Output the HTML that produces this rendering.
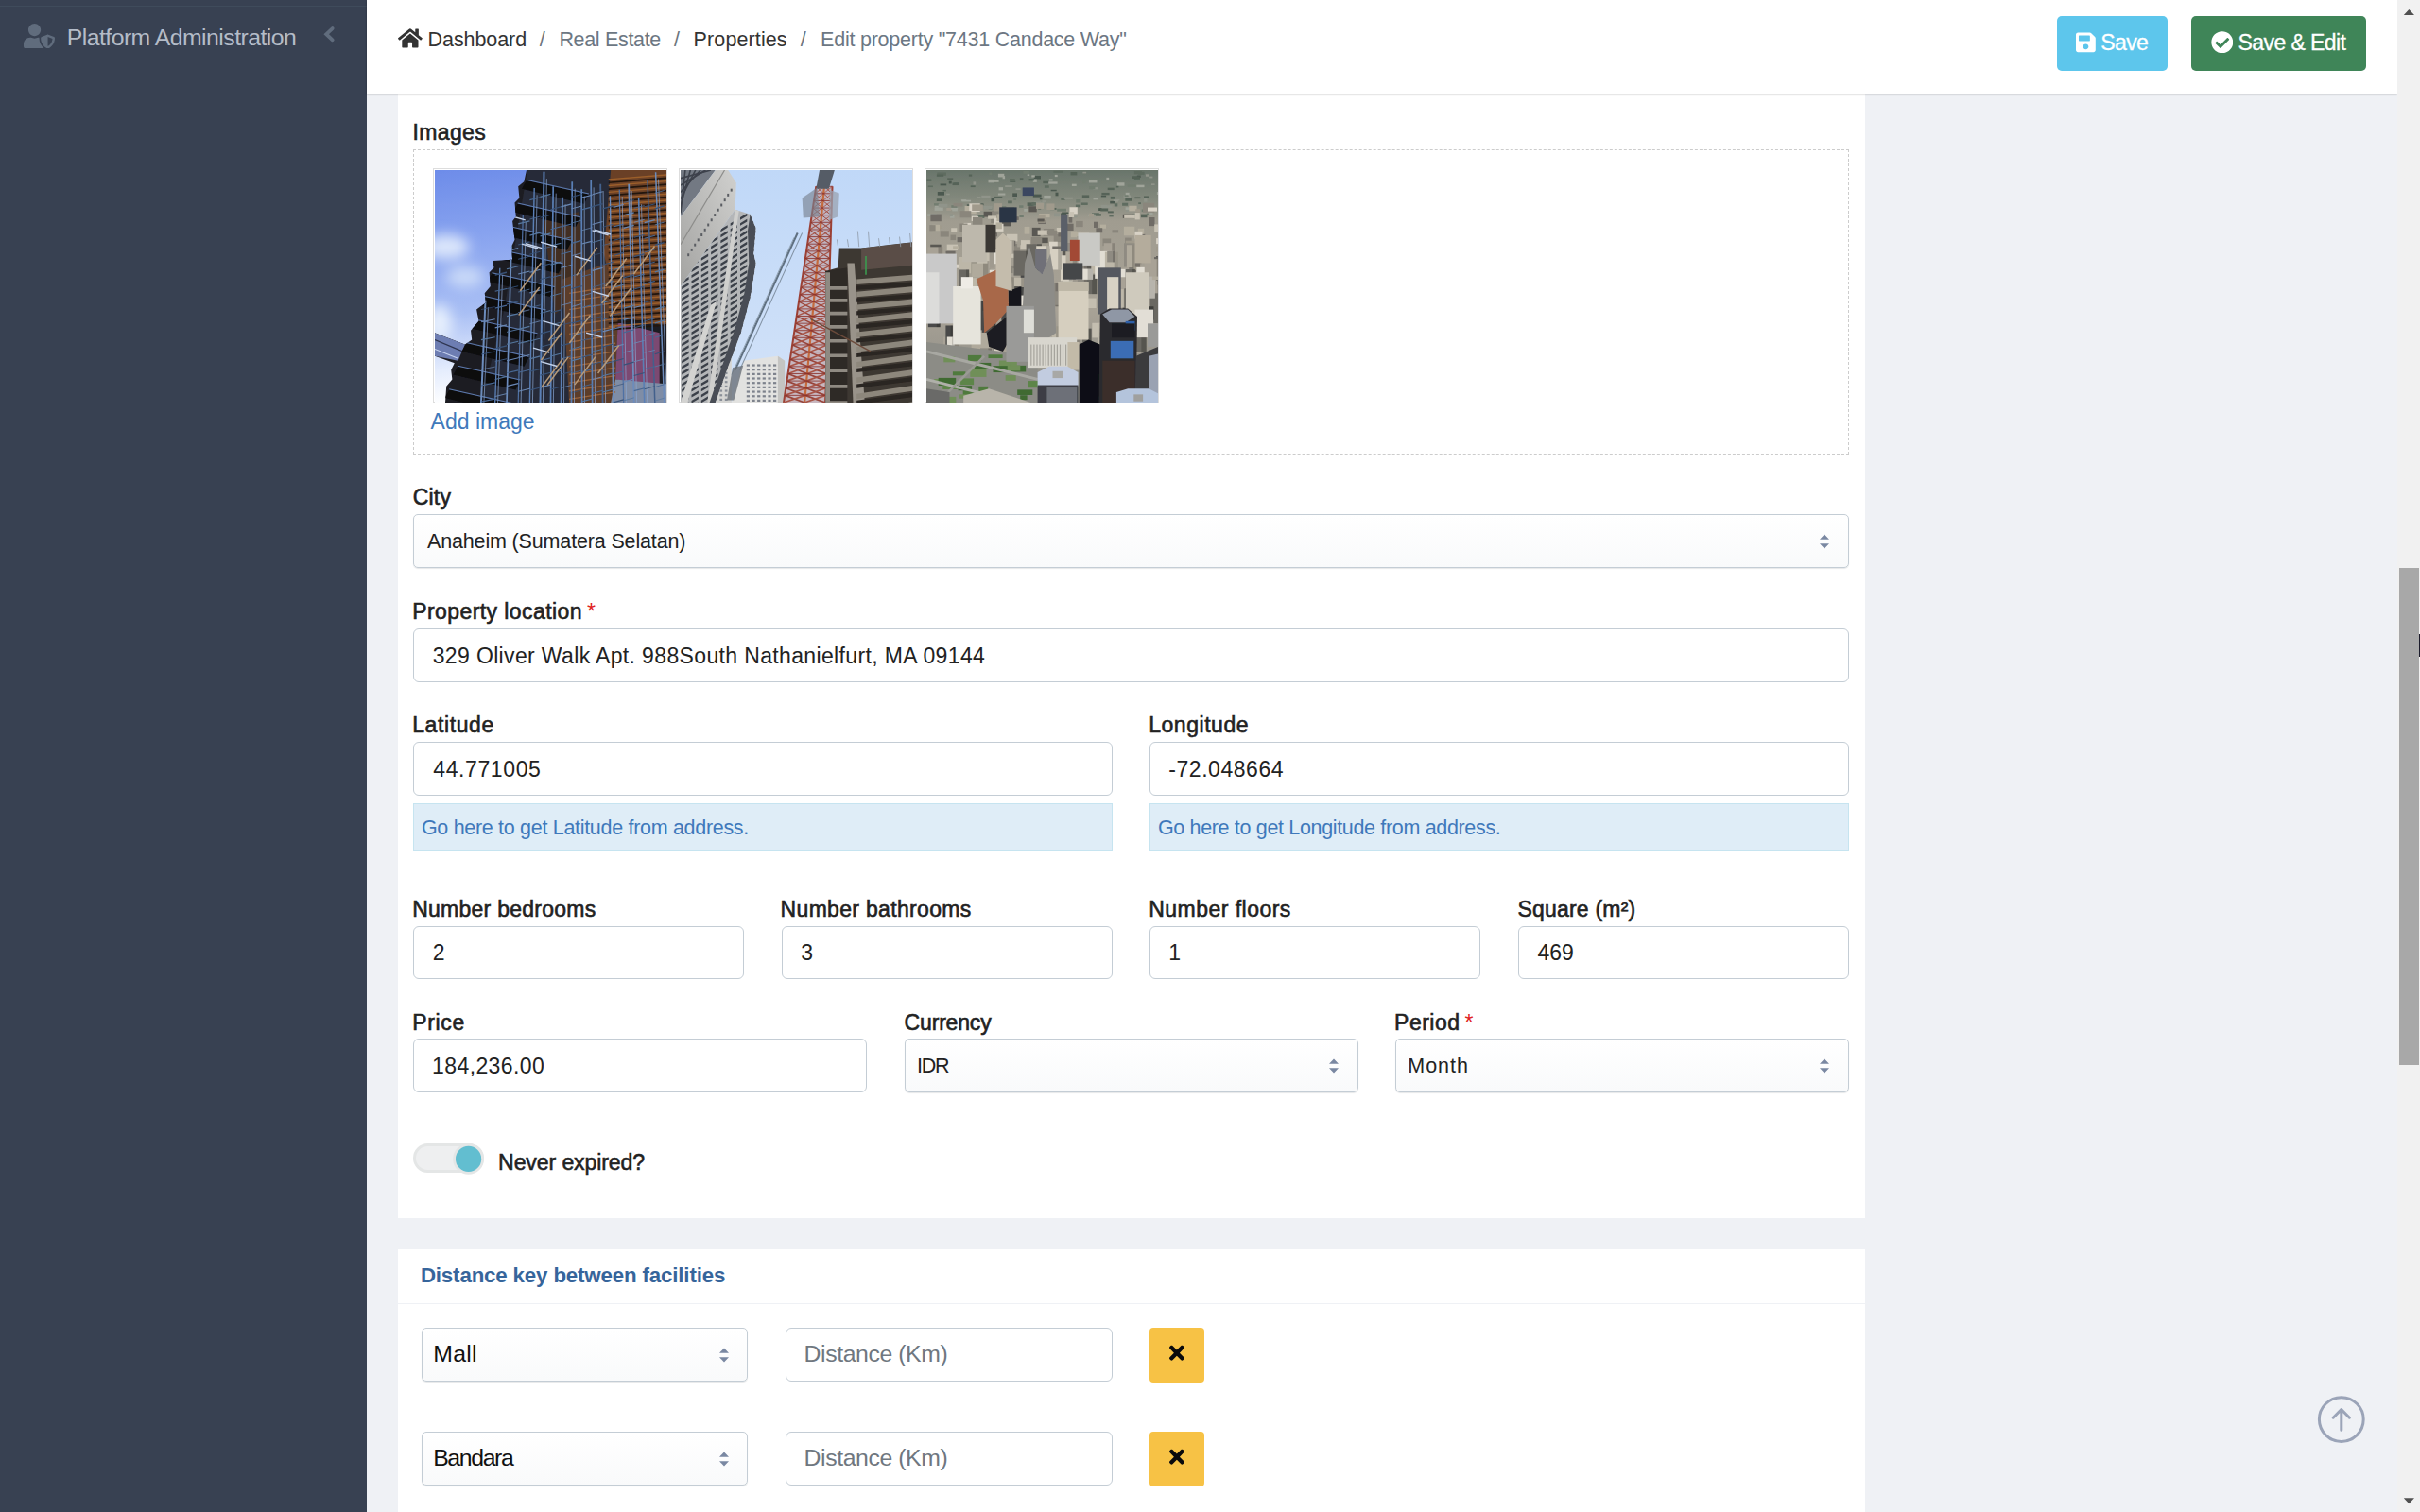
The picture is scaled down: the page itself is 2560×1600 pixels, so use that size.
<!DOCTYPE html>
<html>
<head>
<meta charset="utf-8">
<title>Edit property</title>
<style>
*{box-sizing:border-box;margin:0;padding:0}
html,body{width:2560px;height:1600px;overflow:hidden;background:#eff1f5;font-family:"Liberation Sans",sans-serif;color:#222}
.a{position:absolute}
.t{position:absolute;white-space:nowrap}
.inp{position:absolute;border:1px solid #c4cdd5;border-radius:6px;background:#fff}
.sel{position:absolute;border:1px solid #c4cdd5;border-radius:5px;background:linear-gradient(to bottom,#fff,#f9fafb);box-shadow:0 1px 1px rgba(22,29,37,.10)}
.help{position:absolute;background:#dfedf7;border:1px solid #c6e4f0}
</style>
</head>
<body>
<div class="a" style="left:0px;top:0px;width:388px;height:1600px;background:#384152"></div>
<div class="a" style="left:0px;top:6px;width:388px;height:1px;background:#3f4b5b"></div>
<svg class="a" style="left:24.8px;top:24.8px" width="33" height="26.4" viewBox="0 0 640 512" preserveAspectRatio="none"><path fill="#606c7d" d="M622.3 271.1l-115.2-45c-4.1-1.6-12.6-3.7-22.2 0l-115.2 45c-10.7 4.2-17.7 14-17.7 24.900 0 111.600 68.700 188.800 132.900 213.900 9.600 3.700 18 1.600 22.200 0C558.400 489.900 640 420.500 640 296c0-10.900-7-20.700-17.700-24.900zM496 462.400V273.300l95.500 37.300c-5.600 87.100-60.900 135.400-95.500 151.800zM224 256c70.700 0 128-57.300 128-128S294.700 0 224 0 96 57.300 96 128s57.300 128 128 128zm96 40c0-2.500.8-4.800 1.100-7.200-2.500-.1-4.900-.8-7.500-.8h-16.700c-22.200 10.200-46.900 16-72.900 16s-50.600-5.800-72.900-16h-16.700C60.200 288 0 348.200 0 422.400V464c0 26.500 21.500 48 48 48h352c6.800 0 13.300-1.500 19.200-4-54-42.900-99.200-116.700-99.200-212z"/></svg>
<span class="t" style="left:70.7px;top:28.2px;font-size:24.8px;line-height:24.8px;color:#b4bcc8;letter-spacing:-0.535px;">Platform Administration</span>
<svg class="a" style="left:340px;top:24px" width="18" height="24" viewBox="0 0 18 24"><polyline points="11.7,6.1 5.2,12.2 11.7,18.300" fill="none" stroke="#606c7d" stroke-width="3.800" stroke-linecap="round" stroke-linejoin="miter"/></svg>
<div class="a" style="left:421px;top:0px;width:1552px;height:1289px;background:#fff"></div>
<div class="a" style="left:421px;top:1322px;width:1552px;height:300px;background:#fff"></div>
<span class="t" style="left:436.5px;top:129.4px;font-size:23px;line-height:23px;color:#222;letter-spacing:0.367px;-webkit-text-stroke:0.6px #222;">Images</span>
<div class="a" style="left:437px;top:158px;width:1519px;height:323px;border:1px dashed #ccc;background:#fff"></div>
<div class="a" style="left:458px;top:178px;width:248px;height:248px;border:1px solid #ddd;background:#fff"></div><svg class="a" style="left:460px;top:180px" width="245" height="246" viewBox="0 0 245 245" preserveAspectRatio="none"><defs><filter id="sf0" x="-5%" y="-5%" width="110%" height="110%"><feGaussianBlur stdDeviation="0.55"/></filter><linearGradient id="sk1" x1="0" y1="0" x2="0.12" y2="1"><stop offset="0" stop-color="#6d8ce9"/><stop offset="0.3" stop-color="#88a3ef"/><stop offset="0.62" stop-color="#a9bff4"/><stop offset="0.85" stop-color="#e4ecfd"/><stop offset="1" stop-color="#ffffff"/></linearGradient><filter id="b1" x="-50%" y="-50%" width="200%" height="200%"><feGaussianBlur stdDeviation="7"/></filter><clipPath id="c1"><polygon points="97.0,0.0 94.3,12.2 88.2,17.2 89.4,29.4 84.5,34.3 85.8,49.0 82.1,53.9 84.5,73.5 80.9,80.9 82.1,94.3 61.2,95.5 62.5,102.9 57.6,107.8 58.8,122.5 52.7,129.8 53.9,139.6 44.1,147.0 46.5,159.2 38.0,169.0 39.2,178.8 31.9,183.8 0.0,171.5 0.0,196.0 20.8,203.3 17.2,210.7 18.4,220.5 12.2,227.9 11.0,245.0 245.0,245.0 245.0,0.0"/></clipPath></defs><g filter="url(#sf0)"><rect x="-12" y="-12" width="269" height="269" fill="#5a6a9a"/><rect x="0.0" y="0.0" width="245.0" height="245.0" fill="url(#sk1)" /><g filter="url(#b1)"><ellipse cx="12.2" cy="80.9" rx="24" ry="13" fill="#dbe6fb"/><ellipse cx="31.9" cy="112.7" rx="20" ry="11" fill="#c9d9f8"/><ellipse cx="4.9" cy="161.7" rx="13" ry="20" fill="#e6effd"/></g><g clip-path="url(#c1)"><rect x="0.0" y="0.0" width="245.0" height="245.0" fill="#1f1e23" /><polygon points="98.0,0.0 191.1,0.0 181.3,98.0 142.1,134.8 142.1,245.0 49.0,245.0 73.5,147.0" fill="#34405a" opacity="0.40"/><polygon points="115.1,53.9 151.9,44.1 161.7,122.5 127.4,151.9" fill="#4a2f1c" opacity="0.8"/><polygon points="186.2,0.0 245.0,0.0 245.0,164.2 193.6,154.3 178.8,88.2" fill="#6b4126" /><polygon points="134.8,115.1 181.3,98.0 193.6,154.3 191.1,245.0 142.1,245.0" fill="#5b3d2c" /><polygon points="193.6,160.5 237.7,171.5 237.7,227.9 191.1,220.5" fill="#7c4872" /><polygon points="191.1,220.5 245.0,225.4 245.0,245.0 186.2,245.0" fill="#7f8da6" /><polygon points="0.0,171.5 31.9,183.8 24.5,200.9 0.0,196.0" fill="#6d7db2" /><line x1="0.0" y1="178.8" x2="29.4" y2="191.1" stroke="#2e3550" stroke-width="1.2" /><line x1="0.0" y1="188.7" x2="24.5" y2="198.5" stroke="#c8d4f0" stroke-width="1.0" /><polygon points="96.8,11.0 162.9,25.7 158.0,35.5 91.9,19.6" fill="#0b0b10" /><line x1="96.8" y1="10.3" x2="162.9" y2="25.0" stroke="#5d7bb0" stroke-width="1.0" /><polygon points="87.7,35.5 153.9,50.2 149.0,60.0 82.8,44.1" fill="#0b0b10" /><line x1="87.7" y1="34.8" x2="153.9" y2="49.5" stroke="#5d7bb0" stroke-width="1.0" /><polygon points="78.6,60.0 144.8,74.7 139.9,84.5 73.7,68.6" fill="#0b0b10" /><line x1="78.6" y1="59.3" x2="144.8" y2="74.0" stroke="#5d7bb0" stroke-width="1.0" /><polygon points="69.6,84.5 135.7,99.2 130.8,109.0 64.7,93.1" fill="#0b0b10" /><line x1="69.6" y1="83.8" x2="135.7" y2="98.5" stroke="#5d7bb0" stroke-width="1.0" /><polygon points="60.5,109.0 126.7,123.7 121.8,133.5 55.6,117.6" fill="#0b0b10" /><line x1="60.5" y1="108.3" x2="126.7" y2="123.0" stroke="#5d7bb0" stroke-width="1.0" /><polygon points="51.5,133.5 117.6,148.2 112.7,158.0 46.6,142.1" fill="#0b0b10" /><line x1="51.5" y1="132.8" x2="117.6" y2="147.5" stroke="#5d7bb0" stroke-width="1.0" /><polygon points="42.4,158.0 108.5,172.7 103.6,182.5 37.5,166.6" fill="#0b0b10" /><line x1="42.4" y1="157.3" x2="108.5" y2="172.0" stroke="#5d7bb0" stroke-width="1.0" /><polygon points="33.3,182.5 99.5,197.2 94.6,207.0 28.4,191.1" fill="#0b0b10" /><line x1="33.3" y1="181.8" x2="99.5" y2="196.5" stroke="#5d7bb0" stroke-width="1.0" /><polygon points="24.3,207.0 90.4,221.7 85.5,231.5 19.4,215.6" fill="#0b0b10" /><line x1="24.3" y1="206.3" x2="90.4" y2="221.0" stroke="#5d7bb0" stroke-width="1.0" /><polygon points="15.2,231.5 81.3,246.2 76.4,256.0 10.3,240.1" fill="#0b0b10" /><line x1="15.2" y1="230.8" x2="81.3" y2="245.5" stroke="#5d7bb0" stroke-width="1.0" /><line x1="183.8" y1="9.8" x2="245.0" y2="4.9" stroke="#9c5f2c" stroke-width="1.4" /><line x1="183.8" y1="13.2" x2="245.0" y2="8.3" stroke="#22150d" stroke-width="1.7" /><line x1="183.8" y1="16.5" x2="245.0" y2="11.6" stroke="#9c5f2c" stroke-width="1.4" /><line x1="183.8" y1="20.0" x2="245.0" y2="15.1" stroke="#22150d" stroke-width="1.7" /><line x1="183.8" y1="23.3" x2="245.0" y2="18.4" stroke="#9c5f2c" stroke-width="1.4" /><line x1="183.8" y1="26.7" x2="245.0" y2="21.8" stroke="#22150d" stroke-width="1.7" /><line x1="183.8" y1="30.0" x2="245.0" y2="25.1" stroke="#9c5f2c" stroke-width="1.4" /><line x1="183.8" y1="33.4" x2="245.0" y2="28.5" stroke="#22150d" stroke-width="1.7" /><line x1="183.8" y1="36.8" x2="245.0" y2="31.9" stroke="#9c5f2c" stroke-width="1.4" /><line x1="183.8" y1="40.2" x2="245.0" y2="35.3" stroke="#22150d" stroke-width="1.7" /><line x1="183.8" y1="43.5" x2="245.0" y2="38.6" stroke="#9c5f2c" stroke-width="1.4" /><line x1="183.8" y1="46.9" x2="245.0" y2="42.0" stroke="#22150d" stroke-width="1.7" /><line x1="183.8" y1="50.2" x2="245.0" y2="45.3" stroke="#9c5f2c" stroke-width="1.4" /><line x1="183.8" y1="53.7" x2="245.0" y2="48.8" stroke="#22150d" stroke-width="1.7" /><line x1="183.8" y1="57.0" x2="245.0" y2="52.1" stroke="#9c5f2c" stroke-width="1.4" /><line x1="183.8" y1="60.4" x2="245.0" y2="55.5" stroke="#22150d" stroke-width="1.7" /><line x1="183.8" y1="63.7" x2="245.0" y2="58.8" stroke="#9c5f2c" stroke-width="1.4" /><line x1="183.8" y1="67.1" x2="245.0" y2="62.2" stroke="#22150d" stroke-width="1.7" /><line x1="183.8" y1="70.4" x2="245.0" y2="65.5" stroke="#9c5f2c" stroke-width="1.4" /><line x1="183.8" y1="73.9" x2="245.0" y2="69.0" stroke="#22150d" stroke-width="1.7" /><line x1="183.8" y1="77.2" x2="245.0" y2="72.3" stroke="#9c5f2c" stroke-width="1.4" /><line x1="183.8" y1="80.6" x2="245.0" y2="75.7" stroke="#22150d" stroke-width="1.7" /><line x1="183.8" y1="83.9" x2="245.0" y2="79.0" stroke="#9c5f2c" stroke-width="1.4" /><line x1="183.8" y1="87.3" x2="245.0" y2="82.4" stroke="#22150d" stroke-width="1.7" /><line x1="183.8" y1="90.7" x2="245.0" y2="85.8" stroke="#9c5f2c" stroke-width="1.4" /><line x1="183.8" y1="94.1" x2="245.0" y2="89.2" stroke="#22150d" stroke-width="1.7" /><line x1="183.8" y1="97.4" x2="245.0" y2="92.5" stroke="#9c5f2c" stroke-width="1.4" /><line x1="183.8" y1="100.8" x2="245.0" y2="95.9" stroke="#22150d" stroke-width="1.7" /><line x1="183.8" y1="104.1" x2="245.0" y2="99.2" stroke="#9c5f2c" stroke-width="1.4" /><line x1="183.8" y1="107.6" x2="245.0" y2="102.7" stroke="#22150d" stroke-width="1.7" /><line x1="183.8" y1="110.9" x2="245.0" y2="106.0" stroke="#9c5f2c" stroke-width="1.4" /><line x1="183.8" y1="114.3" x2="245.0" y2="109.4" stroke="#22150d" stroke-width="1.7" /><line x1="183.8" y1="117.6" x2="245.0" y2="112.7" stroke="#9c5f2c" stroke-width="1.4" /><line x1="183.8" y1="121.0" x2="245.0" y2="116.1" stroke="#22150d" stroke-width="1.7" /><line x1="183.8" y1="124.3" x2="245.0" y2="119.4" stroke="#9c5f2c" stroke-width="1.4" /><line x1="183.8" y1="127.8" x2="245.0" y2="122.9" stroke="#22150d" stroke-width="1.7" /><line x1="183.8" y1="131.1" x2="245.0" y2="126.2" stroke="#9c5f2c" stroke-width="1.4" /><line x1="183.8" y1="134.5" x2="245.0" y2="129.6" stroke="#22150d" stroke-width="1.7" /><line x1="183.8" y1="137.8" x2="245.0" y2="132.9" stroke="#9c5f2c" stroke-width="1.4" /><line x1="183.8" y1="141.2" x2="245.0" y2="136.3" stroke="#22150d" stroke-width="1.7" /><line x1="183.8" y1="144.6" x2="245.0" y2="139.7" stroke="#9c5f2c" stroke-width="1.4" /><line x1="183.8" y1="148.0" x2="245.0" y2="143.1" stroke="#22150d" stroke-width="1.7" /><line x1="183.8" y1="151.3" x2="245.0" y2="146.4" stroke="#9c5f2c" stroke-width="1.4" /><line x1="183.8" y1="154.7" x2="245.0" y2="149.8" stroke="#22150d" stroke-width="1.7" /><line x1="183.8" y1="158.0" x2="245.0" y2="153.1" stroke="#9c5f2c" stroke-width="1.4" /><line x1="183.8" y1="161.5" x2="245.0" y2="156.6" stroke="#22150d" stroke-width="1.7" /><line x1="183.8" y1="164.8" x2="245.0" y2="159.9" stroke="#9c5f2c" stroke-width="1.4" /><line x1="183.8" y1="168.2" x2="245.0" y2="163.3" stroke="#22150d" stroke-width="1.7" /><line x1="142.1" y1="129.8" x2="191.1" y2="122.5" stroke="#9a6238" stroke-width="1.3" /><line x1="142.1" y1="138.4" x2="191.1" y2="131.1" stroke="#9a6238" stroke-width="1.3" /><line x1="142.1" y1="147.0" x2="191.1" y2="139.7" stroke="#9a6238" stroke-width="1.3" /><line x1="142.1" y1="155.6" x2="191.1" y2="148.2" stroke="#9a6238" stroke-width="1.3" /><line x1="142.1" y1="164.2" x2="191.1" y2="156.8" stroke="#9a6238" stroke-width="1.3" /><line x1="142.1" y1="172.7" x2="191.1" y2="165.4" stroke="#9a6238" stroke-width="1.3" /><line x1="142.1" y1="181.3" x2="191.1" y2="173.9" stroke="#9a6238" stroke-width="1.3" /><line x1="142.1" y1="189.9" x2="191.1" y2="182.5" stroke="#9a6238" stroke-width="1.3" /><line x1="142.1" y1="198.5" x2="191.1" y2="191.1" stroke="#9a6238" stroke-width="1.3" /><line x1="142.1" y1="207.0" x2="191.1" y2="199.7" stroke="#9a6238" stroke-width="1.3" /><line x1="142.1" y1="215.6" x2="191.1" y2="208.3" stroke="#9a6238" stroke-width="1.3" /><line x1="142.1" y1="224.2" x2="191.1" y2="216.8" stroke="#9a6238" stroke-width="1.3" /><line x1="142.1" y1="232.8" x2="191.1" y2="225.4" stroke="#9a6238" stroke-width="1.3" /><line x1="142.1" y1="241.3" x2="191.1" y2="234.0" stroke="#9a6238" stroke-width="1.3" /><line x1="53.5" y1="137.2" x2="49.0" y2="245.0" stroke="#6c8cbc" stroke-width="2.0" /><line x1="56.5" y1="144.6" x2="51.9" y2="245.0" stroke="#8aa6d2" stroke-width="0.7" /><line x1="68.8" y1="103.4" x2="63.7" y2="245.0" stroke="#5a7fb5" stroke-width="1.3" /><line x1="71.7" y1="110.7" x2="66.6" y2="245.0" stroke="#8aa6d2" stroke-width="0.7" /><line x1="81.2" y1="75.2" x2="76.0" y2="245.0" stroke="#6c8cbc" stroke-width="1.7" /><line x1="93.3" y1="47.0" x2="88.2" y2="245.0" stroke="#5071a4" stroke-width="1.2" /><line x1="96.3" y1="54.4" x2="91.1" y2="245.0" stroke="#8aa6d2" stroke-width="0.7" /><line x1="105.2" y1="18.9" x2="100.4" y2="245.0" stroke="#5a7fb5" stroke-width="1.4" /><line x1="108.1" y1="26.2" x2="103.4" y2="245.0" stroke="#8aa6d2" stroke-width="0.7" /><line x1="115.5" y1="1.7" x2="111.5" y2="245.0" stroke="#5a7fb5" stroke-width="2.0" /><line x1="118.4" y1="9.1" x2="114.4" y2="245.0" stroke="#8aa6d2" stroke-width="0.7" /><line x1="125.2" y1="17.1" x2="122.5" y2="245.0" stroke="#5a7fb5" stroke-width="1.7" /><line x1="128.2" y1="24.5" x2="125.4" y2="245.0" stroke="#8aa6d2" stroke-width="0.7" /><line x1="135.1" y1="28.7" x2="133.5" y2="245.0" stroke="#5a7fb5" stroke-width="1.6" /><line x1="138.1" y1="36.1" x2="136.5" y2="245.0" stroke="#8aa6d2" stroke-width="0.7" /><line x1="145.2" y1="12.3" x2="144.5" y2="245.0" stroke="#5a7fb5" stroke-width="1.7" /><line x1="148.2" y1="19.7" x2="147.5" y2="245.0" stroke="#8aa6d2" stroke-width="0.7" /><line x1="155.2" y1="20.1" x2="155.6" y2="245.0" stroke="#5a7fb5" stroke-width="1.7" /><line x1="158.2" y1="27.4" x2="158.5" y2="245.0" stroke="#8aa6d2" stroke-width="0.7" /><line x1="165.2" y1="10.9" x2="166.6" y2="245.0" stroke="#5a7fb5" stroke-width="1.7" /><line x1="168.1" y1="18.3" x2="169.5" y2="245.0" stroke="#8aa6d2" stroke-width="0.7" /><line x1="175.2" y1="14.6" x2="177.6" y2="245.0" stroke="#43608c" stroke-width="1.8" /><line x1="178.1" y1="21.9" x2="180.6" y2="245.0" stroke="#8aa6d2" stroke-width="0.7" /><line x1="185.4" y1="27.1" x2="188.7" y2="245.0" stroke="#6c8cbc" stroke-width="1.4" /><line x1="195.3" y1="20.6" x2="199.7" y2="245.0" stroke="#5071a4" stroke-width="1.3" /><line x1="198.2" y1="27.9" x2="202.6" y2="245.0" stroke="#8aa6d2" stroke-width="0.7" /><line x1="205.2" y1="14.6" x2="210.7" y2="245.0" stroke="#6c8cbc" stroke-width="1.8" /><line x1="208.1" y1="21.9" x2="213.6" y2="245.0" stroke="#8aa6d2" stroke-width="0.7" /><line x1="215.6" y1="28.8" x2="221.7" y2="245.0" stroke="#5a7fb5" stroke-width="1.6" /><line x1="218.5" y1="36.2" x2="224.7" y2="245.0" stroke="#8aa6d2" stroke-width="0.7" /><line x1="225.0" y1="10.1" x2="232.8" y2="245.0" stroke="#43608c" stroke-width="1.5" /><line x1="233.6" y1="2.3" x2="242.6" y2="245.0" stroke="#6c8cbc" stroke-width="1.5" /><line x1="236.5" y1="9.6" x2="245.5" y2="245.0" stroke="#8aa6d2" stroke-width="0.7" /><line x1="49.0" y1="147.0" x2="63.7" y2="144.0" stroke="#385278" stroke-width="0.7" /><line x1="49.0" y1="160.1" x2="63.7" y2="157.2" stroke="#6a88b4" stroke-width="1.0" /><line x1="49.0" y1="178.9" x2="63.7" y2="176.0" stroke="#55779f" stroke-width="1.1" /><line x1="49.0" y1="194.2" x2="63.7" y2="191.2" stroke="#385278" stroke-width="0.9" /><line x1="49.0" y1="210.2" x2="63.7" y2="207.3" stroke="#6a88b4" stroke-width="0.7" /><line x1="49.0" y1="227.0" x2="63.7" y2="224.0" stroke="#486894" stroke-width="1.1" /><line x1="49.0" y1="244.1" x2="63.7" y2="241.1" stroke="#486894" stroke-width="1.2" /><line x1="63.7" y1="110.7" x2="76.0" y2="107.8" stroke="#385278" stroke-width="1.3" /><line x1="63.7" y1="127.8" x2="76.0" y2="124.9" stroke="#486894" stroke-width="1.0" /><line x1="63.7" y1="145.5" x2="76.0" y2="142.5" stroke="#486894" stroke-width="1.2" /><line x1="63.7" y1="166.2" x2="76.0" y2="163.2" stroke="#6a88b4" stroke-width="1.1" /><line x1="63.7" y1="188.1" x2="76.0" y2="185.2" stroke="#385278" stroke-width="1.3" /><line x1="63.7" y1="201.8" x2="76.0" y2="198.9" stroke="#486894" stroke-width="0.8" /><line x1="63.7" y1="220.5" x2="76.0" y2="217.6" stroke="#55779f" stroke-width="1.0" /><line x1="63.7" y1="238.6" x2="76.0" y2="235.6" stroke="#6a88b4" stroke-width="0.9" /><line x1="76.0" y1="85.4" x2="88.2" y2="82.4" stroke="#6a88b4" stroke-width="1.3" /><line x1="76.0" y1="104.4" x2="88.2" y2="101.4" stroke="#55779f" stroke-width="1.0" /><line x1="76.0" y1="125.2" x2="88.2" y2="122.2" stroke="#385278" stroke-width="0.9" /><line x1="76.0" y1="141.3" x2="88.2" y2="138.3" stroke="#385278" stroke-width="1.1" /><line x1="76.0" y1="154.1" x2="88.2" y2="151.2" stroke="#55779f" stroke-width="1.3" /><line x1="76.0" y1="170.7" x2="88.2" y2="167.8" stroke="#55779f" stroke-width="0.9" /><line x1="76.0" y1="183.5" x2="88.2" y2="180.5" stroke="#55779f" stroke-width="1.0" /><line x1="76.0" y1="201.0" x2="88.2" y2="198.0" stroke="#6a88b4" stroke-width="1.1" /><line x1="76.0" y1="213.9" x2="88.2" y2="211.0" stroke="#486894" stroke-width="1.1" /><line x1="76.0" y1="227.6" x2="88.2" y2="224.7" stroke="#6a88b4" stroke-width="1.3" /><line x1="88.2" y1="56.6" x2="100.4" y2="53.6" stroke="#55779f" stroke-width="1.2" /><line x1="88.2" y1="78.6" x2="100.4" y2="75.6" stroke="#385278" stroke-width="1.0" /><line x1="88.2" y1="93.9" x2="100.4" y2="90.9" stroke="#486894" stroke-width="0.8" /><line x1="88.2" y1="109.5" x2="100.4" y2="106.5" stroke="#6a88b4" stroke-width="1.0" /><line x1="88.2" y1="128.5" x2="100.4" y2="125.6" stroke="#55779f" stroke-width="0.8" /><line x1="88.2" y1="150.1" x2="100.4" y2="147.2" stroke="#6a88b4" stroke-width="0.8" /><line x1="88.2" y1="167.7" x2="100.4" y2="164.7" stroke="#55779f" stroke-width="1.2" /><line x1="88.2" y1="182.8" x2="100.4" y2="179.9" stroke="#55779f" stroke-width="1.1" /><line x1="88.2" y1="197.6" x2="100.4" y2="194.7" stroke="#6a88b4" stroke-width="1.2" /><line x1="88.2" y1="213.4" x2="100.4" y2="210.4" stroke="#486894" stroke-width="1.0" /><line x1="88.2" y1="233.3" x2="100.4" y2="230.3" stroke="#6a88b4" stroke-width="1.1" /><line x1="100.4" y1="31.5" x2="111.5" y2="28.6" stroke="#486894" stroke-width="1.2" /><line x1="100.4" y1="51.8" x2="111.5" y2="48.8" stroke="#486894" stroke-width="0.8" /><line x1="100.4" y1="68.8" x2="111.5" y2="65.9" stroke="#55779f" stroke-width="1.3" /><line x1="100.4" y1="88.8" x2="111.5" y2="85.9" stroke="#385278" stroke-width="0.9" /><line x1="100.4" y1="107.9" x2="111.5" y2="104.9" stroke="#6a88b4" stroke-width="1.0" /><line x1="100.4" y1="129.3" x2="111.5" y2="126.4" stroke="#6a88b4" stroke-width="1.3" /><line x1="100.4" y1="145.1" x2="111.5" y2="142.2" stroke="#486894" stroke-width="0.8" /><line x1="100.4" y1="162.0" x2="111.5" y2="159.0" stroke="#6a88b4" stroke-width="0.8" /><line x1="100.4" y1="180.3" x2="111.5" y2="177.4" stroke="#55779f" stroke-width="1.0" /><line x1="100.4" y1="199.0" x2="111.5" y2="196.1" stroke="#55779f" stroke-width="1.2" /><line x1="100.4" y1="212.4" x2="111.5" y2="209.5" stroke="#385278" stroke-width="1.2" /><line x1="100.4" y1="232.0" x2="111.5" y2="229.1" stroke="#385278" stroke-width="1.2" /><line x1="111.5" y1="28.3" x2="122.5" y2="25.3" stroke="#55779f" stroke-width="1.2" /><line x1="111.5" y1="50.0" x2="122.5" y2="47.1" stroke="#385278" stroke-width="1.0" /><line x1="111.5" y1="69.6" x2="122.5" y2="66.6" stroke="#55779f" stroke-width="1.1" /><line x1="111.5" y1="83.5" x2="122.5" y2="80.6" stroke="#486894" stroke-width="0.7" /><line x1="111.5" y1="101.5" x2="122.5" y2="98.6" stroke="#385278" stroke-width="1.2" /><line x1="111.5" y1="115.2" x2="122.5" y2="112.3" stroke="#385278" stroke-width="1.1" /><line x1="111.5" y1="130.9" x2="122.5" y2="128.0" stroke="#486894" stroke-width="0.7" /><line x1="111.5" y1="151.0" x2="122.5" y2="148.0" stroke="#55779f" stroke-width="1.0" /><line x1="111.5" y1="172.4" x2="122.5" y2="169.4" stroke="#385278" stroke-width="1.3" /><line x1="111.5" y1="186.5" x2="122.5" y2="183.6" stroke="#486894" stroke-width="0.7" /><line x1="111.5" y1="200.9" x2="122.5" y2="197.9" stroke="#486894" stroke-width="1.2" /><line x1="111.5" y1="216.3" x2="122.5" y2="213.4" stroke="#385278" stroke-width="1.2" /><line x1="111.5" y1="229.2" x2="122.5" y2="226.2" stroke="#6a88b4" stroke-width="1.2" /><line x1="122.5" y1="41.6" x2="133.5" y2="38.6" stroke="#385278" stroke-width="1.2" /><line x1="122.5" y1="62.4" x2="133.5" y2="59.5" stroke="#486894" stroke-width="1.0" /><line x1="122.5" y1="79.8" x2="133.5" y2="76.9" stroke="#55779f" stroke-width="1.2" /><line x1="122.5" y1="99.7" x2="133.5" y2="96.7" stroke="#55779f" stroke-width="1.2" /><line x1="122.5" y1="113.4" x2="133.5" y2="110.5" stroke="#486894" stroke-width="1.0" /><line x1="122.5" y1="132.8" x2="133.5" y2="129.8" stroke="#55779f" stroke-width="0.9" /><line x1="122.5" y1="150.1" x2="133.5" y2="147.2" stroke="#385278" stroke-width="1.2" /><line x1="122.5" y1="163.4" x2="133.5" y2="160.4" stroke="#55779f" stroke-width="0.8" /><line x1="122.5" y1="178.3" x2="133.5" y2="175.4" stroke="#55779f" stroke-width="1.0" /><line x1="122.5" y1="196.1" x2="133.5" y2="193.2" stroke="#55779f" stroke-width="1.0" /><line x1="122.5" y1="214.4" x2="133.5" y2="211.4" stroke="#486894" stroke-width="1.1" /><line x1="122.5" y1="231.0" x2="133.5" y2="228.1" stroke="#385278" stroke-width="1.0" /><line x1="133.5" y1="38.7" x2="144.5" y2="35.8" stroke="#6a88b4" stroke-width="1.3" /><line x1="133.5" y1="59.7" x2="144.5" y2="56.8" stroke="#486894" stroke-width="1.2" /><line x1="133.5" y1="73.3" x2="144.5" y2="70.4" stroke="#55779f" stroke-width="0.9" /><line x1="133.5" y1="88.7" x2="144.5" y2="85.7" stroke="#486894" stroke-width="1.0" /><line x1="133.5" y1="103.0" x2="144.5" y2="100.1" stroke="#6a88b4" stroke-width="1.2" /><line x1="133.5" y1="124.0" x2="144.5" y2="121.1" stroke="#486894" stroke-width="1.3" /><line x1="133.5" y1="142.6" x2="144.5" y2="139.7" stroke="#6a88b4" stroke-width="0.8" /><line x1="133.5" y1="163.5" x2="144.5" y2="160.6" stroke="#385278" stroke-width="0.8" /><line x1="133.5" y1="185.1" x2="144.5" y2="182.1" stroke="#385278" stroke-width="1.2" /><line x1="133.5" y1="198.9" x2="144.5" y2="196.0" stroke="#486894" stroke-width="0.8" /><line x1="133.5" y1="215.4" x2="144.5" y2="212.5" stroke="#385278" stroke-width="0.9" /><line x1="133.5" y1="229.6" x2="144.5" y2="226.6" stroke="#6a88b4" stroke-width="0.8" /><line x1="144.5" y1="28.3" x2="155.6" y2="25.3" stroke="#385278" stroke-width="1.0" /><line x1="144.5" y1="40.7" x2="155.6" y2="37.8" stroke="#6a88b4" stroke-width="1.0" /><line x1="144.5" y1="55.8" x2="155.6" y2="52.9" stroke="#55779f" stroke-width="0.8" /><line x1="144.5" y1="77.1" x2="155.6" y2="74.1" stroke="#486894" stroke-width="1.3" /><line x1="144.5" y1="90.4" x2="155.6" y2="87.4" stroke="#6a88b4" stroke-width="0.9" /><line x1="144.5" y1="111.5" x2="155.6" y2="108.6" stroke="#486894" stroke-width="0.9" /><line x1="144.5" y1="125.0" x2="155.6" y2="122.1" stroke="#385278" stroke-width="1.2" /><line x1="144.5" y1="143.9" x2="155.6" y2="140.9" stroke="#6a88b4" stroke-width="0.9" /><line x1="144.5" y1="161.4" x2="155.6" y2="158.5" stroke="#385278" stroke-width="1.1" /><line x1="144.5" y1="174.5" x2="155.6" y2="171.6" stroke="#55779f" stroke-width="1.2" /><line x1="144.5" y1="188.6" x2="155.6" y2="185.6" stroke="#55779f" stroke-width="0.9" /><line x1="144.5" y1="201.0" x2="155.6" y2="198.0" stroke="#55779f" stroke-width="1.2" /><line x1="144.5" y1="214.1" x2="155.6" y2="211.1" stroke="#486894" stroke-width="0.7" /><line x1="144.5" y1="234.8" x2="155.6" y2="231.8" stroke="#385278" stroke-width="0.7" /><line x1="155.6" y1="29.0" x2="166.6" y2="26.1" stroke="#6a88b4" stroke-width="1.1" /><line x1="155.6" y1="41.7" x2="166.6" y2="38.8" stroke="#486894" stroke-width="1.3" /><line x1="155.6" y1="63.5" x2="166.6" y2="60.5" stroke="#6a88b4" stroke-width="0.7" /><line x1="155.6" y1="77.7" x2="166.6" y2="74.8" stroke="#6a88b4" stroke-width="1.1" /><line x1="155.6" y1="95.1" x2="166.6" y2="92.2" stroke="#486894" stroke-width="0.9" /><line x1="155.6" y1="112.3" x2="166.6" y2="109.4" stroke="#486894" stroke-width="0.9" /><line x1="155.6" y1="132.4" x2="166.6" y2="129.5" stroke="#6a88b4" stroke-width="0.7" /><line x1="155.6" y1="144.9" x2="166.6" y2="141.9" stroke="#486894" stroke-width="1.0" /><line x1="155.6" y1="159.5" x2="166.6" y2="156.6" stroke="#385278" stroke-width="0.8" /><line x1="155.6" y1="179.8" x2="166.6" y2="176.8" stroke="#385278" stroke-width="1.1" /><line x1="155.6" y1="197.4" x2="166.6" y2="194.4" stroke="#385278" stroke-width="1.3" /><line x1="155.6" y1="212.7" x2="166.6" y2="209.7" stroke="#486894" stroke-width="1.3" /><line x1="155.6" y1="228.3" x2="166.6" y2="225.3" stroke="#486894" stroke-width="0.9" /><line x1="155.6" y1="243.9" x2="166.6" y2="241.0" stroke="#55779f" stroke-width="1.2" /><line x1="166.6" y1="25.6" x2="177.6" y2="22.7" stroke="#6a88b4" stroke-width="1.0" /><line x1="166.6" y1="38.4" x2="177.6" y2="35.5" stroke="#385278" stroke-width="1.2" /><line x1="166.6" y1="57.2" x2="177.6" y2="54.3" stroke="#6a88b4" stroke-width="1.1" /><line x1="166.6" y1="76.3" x2="177.6" y2="73.3" stroke="#55779f" stroke-width="1.0" /><line x1="166.6" y1="90.1" x2="177.6" y2="87.1" stroke="#385278" stroke-width="0.7" /><line x1="166.6" y1="105.9" x2="177.6" y2="102.9" stroke="#6a88b4" stroke-width="1.3" /><line x1="166.6" y1="123.5" x2="177.6" y2="120.6" stroke="#486894" stroke-width="0.7" /><line x1="166.6" y1="144.4" x2="177.6" y2="141.5" stroke="#486894" stroke-width="0.9" /><line x1="166.6" y1="156.7" x2="177.6" y2="153.7" stroke="#385278" stroke-width="0.8" /><line x1="166.6" y1="171.6" x2="177.6" y2="168.7" stroke="#486894" stroke-width="0.8" /><line x1="166.6" y1="191.5" x2="177.6" y2="188.6" stroke="#55779f" stroke-width="0.9" /><line x1="166.6" y1="204.6" x2="177.6" y2="201.7" stroke="#385278" stroke-width="1.1" /><line x1="166.6" y1="220.7" x2="177.6" y2="217.8" stroke="#6a88b4" stroke-width="0.9" /><line x1="166.6" y1="235.3" x2="177.6" y2="232.3" stroke="#486894" stroke-width="1.1" /><line x1="177.6" y1="40.7" x2="188.7" y2="37.7" stroke="#385278" stroke-width="1.2" /><line x1="177.6" y1="60.0" x2="188.7" y2="57.0" stroke="#385278" stroke-width="0.8" /><line x1="177.6" y1="79.3" x2="188.7" y2="76.4" stroke="#486894" stroke-width="0.7" /><line x1="177.6" y1="99.8" x2="188.7" y2="96.8" stroke="#385278" stroke-width="1.1" /><line x1="177.6" y1="120.0" x2="188.7" y2="117.0" stroke="#486894" stroke-width="1.2" /><line x1="177.6" y1="139.6" x2="188.7" y2="136.7" stroke="#55779f" stroke-width="1.2" /><line x1="177.6" y1="157.6" x2="188.7" y2="154.6" stroke="#486894" stroke-width="0.8" /><line x1="177.6" y1="170.2" x2="188.7" y2="167.3" stroke="#6a88b4" stroke-width="1.3" /><line x1="177.6" y1="186.2" x2="188.7" y2="183.2" stroke="#385278" stroke-width="1.0" /><line x1="177.6" y1="204.6" x2="188.7" y2="201.6" stroke="#486894" stroke-width="1.0" /><line x1="177.6" y1="216.9" x2="188.7" y2="213.9" stroke="#55779f" stroke-width="1.1" /><line x1="177.6" y1="234.0" x2="188.7" y2="231.1" stroke="#55779f" stroke-width="1.1" /><line x1="188.7" y1="39.3" x2="199.7" y2="36.3" stroke="#6a88b4" stroke-width="1.2" /><line x1="188.7" y1="59.8" x2="199.7" y2="56.9" stroke="#486894" stroke-width="1.1" /><line x1="188.7" y1="74.1" x2="199.7" y2="71.1" stroke="#385278" stroke-width="1.0" /><line x1="188.7" y1="90.1" x2="199.7" y2="87.1" stroke="#385278" stroke-width="1.2" /><line x1="188.7" y1="105.1" x2="199.7" y2="102.2" stroke="#55779f" stroke-width="1.1" /><line x1="188.7" y1="123.7" x2="199.7" y2="120.7" stroke="#55779f" stroke-width="1.1" /><line x1="188.7" y1="139.2" x2="199.7" y2="136.2" stroke="#6a88b4" stroke-width="1.1" /><line x1="188.7" y1="152.7" x2="199.7" y2="149.8" stroke="#385278" stroke-width="0.7" /><line x1="188.7" y1="167.6" x2="199.7" y2="164.7" stroke="#55779f" stroke-width="1.1" /><line x1="188.7" y1="186.5" x2="199.7" y2="183.6" stroke="#6a88b4" stroke-width="1.1" /><line x1="188.7" y1="201.6" x2="199.7" y2="198.6" stroke="#385278" stroke-width="1.0" /><line x1="188.7" y1="215.0" x2="199.7" y2="212.0" stroke="#486894" stroke-width="0.9" /><line x1="188.7" y1="228.1" x2="199.7" y2="225.1" stroke="#385278" stroke-width="0.7" /><line x1="188.7" y1="244.8" x2="199.7" y2="241.9" stroke="#385278" stroke-width="1.3" /><line x1="199.7" y1="34.4" x2="210.7" y2="31.5" stroke="#486894" stroke-width="0.7" /><line x1="199.7" y1="47.6" x2="210.7" y2="44.6" stroke="#6a88b4" stroke-width="1.3" /><line x1="199.7" y1="61.1" x2="210.7" y2="58.2" stroke="#6a88b4" stroke-width="1.2" /><line x1="199.7" y1="80.3" x2="210.7" y2="77.3" stroke="#486894" stroke-width="1.0" /><line x1="199.7" y1="101.1" x2="210.7" y2="98.2" stroke="#385278" stroke-width="0.7" /><line x1="199.7" y1="113.4" x2="210.7" y2="110.4" stroke="#385278" stroke-width="1.1" /><line x1="199.7" y1="129.6" x2="210.7" y2="126.7" stroke="#486894" stroke-width="0.9" /><line x1="199.7" y1="145.5" x2="210.7" y2="142.6" stroke="#55779f" stroke-width="1.2" /><line x1="199.7" y1="157.8" x2="210.7" y2="154.9" stroke="#6a88b4" stroke-width="1.2" /><line x1="199.7" y1="171.2" x2="210.7" y2="168.3" stroke="#486894" stroke-width="1.1" /><line x1="199.7" y1="192.3" x2="210.7" y2="189.4" stroke="#6a88b4" stroke-width="0.9" /><line x1="199.7" y1="205.2" x2="210.7" y2="202.3" stroke="#385278" stroke-width="1.3" /><line x1="199.7" y1="223.2" x2="210.7" y2="220.3" stroke="#6a88b4" stroke-width="1.3" /><line x1="199.7" y1="242.9" x2="210.7" y2="239.9" stroke="#55779f" stroke-width="0.9" /><line x1="210.7" y1="40.2" x2="221.7" y2="37.3" stroke="#486894" stroke-width="0.8" /><line x1="210.7" y1="55.1" x2="221.7" y2="52.1" stroke="#6a88b4" stroke-width="0.8" /><line x1="210.7" y1="71.0" x2="221.7" y2="68.0" stroke="#385278" stroke-width="1.2" /><line x1="210.7" y1="91.2" x2="221.7" y2="88.2" stroke="#385278" stroke-width="1.2" /><line x1="210.7" y1="112.6" x2="221.7" y2="109.7" stroke="#486894" stroke-width="1.1" /><line x1="210.7" y1="125.4" x2="221.7" y2="122.4" stroke="#385278" stroke-width="1.0" /><line x1="210.7" y1="145.0" x2="221.7" y2="142.1" stroke="#6a88b4" stroke-width="1.0" /><line x1="210.7" y1="166.2" x2="221.7" y2="163.3" stroke="#486894" stroke-width="0.8" /><line x1="210.7" y1="182.5" x2="221.7" y2="179.6" stroke="#6a88b4" stroke-width="0.9" /><line x1="210.7" y1="202.0" x2="221.7" y2="199.1" stroke="#6a88b4" stroke-width="0.9" /><line x1="210.7" y1="216.6" x2="221.7" y2="213.6" stroke="#385278" stroke-width="1.0" /><line x1="210.7" y1="232.7" x2="221.7" y2="229.8" stroke="#486894" stroke-width="1.1" /><line x1="221.7" y1="38.6" x2="232.8" y2="35.7" stroke="#385278" stroke-width="1.0" /><line x1="221.7" y1="55.3" x2="232.8" y2="52.4" stroke="#6a88b4" stroke-width="1.3" /><line x1="221.7" y1="72.0" x2="232.8" y2="69.0" stroke="#486894" stroke-width="1.0" /><line x1="221.7" y1="86.6" x2="232.8" y2="83.7" stroke="#486894" stroke-width="0.9" /><line x1="221.7" y1="99.8" x2="232.8" y2="96.8" stroke="#486894" stroke-width="0.9" /><line x1="221.7" y1="119.9" x2="232.8" y2="117.0" stroke="#486894" stroke-width="1.2" /><line x1="221.7" y1="139.5" x2="232.8" y2="136.6" stroke="#385278" stroke-width="0.9" /><line x1="221.7" y1="159.1" x2="232.8" y2="156.2" stroke="#486894" stroke-width="0.9" /><line x1="221.7" y1="174.7" x2="232.8" y2="171.7" stroke="#55779f" stroke-width="1.0" /><line x1="221.7" y1="192.5" x2="232.8" y2="189.6" stroke="#6a88b4" stroke-width="0.8" /><line x1="221.7" y1="209.7" x2="232.8" y2="206.8" stroke="#486894" stroke-width="0.8" /><line x1="221.7" y1="230.8" x2="232.8" y2="227.8" stroke="#385278" stroke-width="0.9" /><line x1="232.8" y1="24.3" x2="242.6" y2="21.4" stroke="#55779f" stroke-width="0.8" /><line x1="232.8" y1="40.7" x2="242.6" y2="37.8" stroke="#385278" stroke-width="1.3" /><line x1="232.8" y1="57.8" x2="242.6" y2="54.8" stroke="#55779f" stroke-width="0.9" /><line x1="232.8" y1="79.1" x2="242.6" y2="76.2" stroke="#385278" stroke-width="1.3" /><line x1="232.8" y1="93.8" x2="242.6" y2="90.9" stroke="#55779f" stroke-width="0.8" /><line x1="232.8" y1="107.5" x2="242.6" y2="104.6" stroke="#55779f" stroke-width="1.3" /><line x1="232.8" y1="126.9" x2="242.6" y2="123.9" stroke="#385278" stroke-width="0.8" /><line x1="232.8" y1="146.7" x2="242.6" y2="143.8" stroke="#55779f" stroke-width="1.2" /><line x1="232.8" y1="161.2" x2="242.6" y2="158.3" stroke="#55779f" stroke-width="1.1" /><line x1="232.8" y1="176.5" x2="242.6" y2="173.5" stroke="#486894" stroke-width="1.1" /><line x1="232.8" y1="193.9" x2="242.6" y2="191.0" stroke="#385278" stroke-width="1.1" /><line x1="232.8" y1="207.2" x2="242.6" y2="204.3" stroke="#55779f" stroke-width="0.9" /><line x1="232.8" y1="228.7" x2="242.6" y2="225.8" stroke="#486894" stroke-width="0.9" /><line x1="232.8" y1="243.2" x2="242.6" y2="240.2" stroke="#55779f" stroke-width="0.7" /><line x1="147.8" y1="226.2" x2="169.9" y2="196.8" stroke="#b79a78" stroke-width="1.5" /><line x1="172.6" y1="214.2" x2="194.7" y2="184.8" stroke="#b79a78" stroke-width="1.5" /><line x1="149.8" y1="110.9" x2="171.8" y2="81.5" stroke="#b79a78" stroke-width="1.5" /><line x1="119.0" y1="226.5" x2="141.1" y2="197.1" stroke="#b79a78" stroke-width="1.5" /><line x1="180.7" y1="122.5" x2="202.8" y2="93.1" stroke="#b79a78" stroke-width="1.5" /><line x1="88.7" y1="152.9" x2="110.7" y2="123.5" stroke="#b79a78" stroke-width="1.5" /><line x1="176.6" y1="140.4" x2="198.7" y2="111.0" stroke="#b79a78" stroke-width="1.5" /><line x1="120.4" y1="179.8" x2="142.5" y2="150.4" stroke="#b79a78" stroke-width="1.5" /><line x1="210.4" y1="109.6" x2="232.5" y2="80.2" stroke="#b79a78" stroke-width="1.5" /><line x1="90.3" y1="127.3" x2="112.4" y2="97.9" stroke="#b79a78" stroke-width="1.5" /><line x1="142.4" y1="182.2" x2="164.5" y2="152.8" stroke="#b79a78" stroke-width="1.5" /><line x1="112.4" y1="200.4" x2="134.5" y2="171.0" stroke="#b79a78" stroke-width="1.5" /><line x1="185.3" y1="153.9" x2="207.4" y2="124.5" stroke="#b79a78" stroke-width="1.5" /><line x1="113.4" y1="228.0" x2="135.5" y2="198.6" stroke="#b79a78" stroke-width="1.5" /><line x1="104.0" y1="187.4" x2="121.2" y2="192.3" stroke="#c4d2ea" stroke-width="1.4" /><line x1="96.1" y1="77.4" x2="113.3" y2="82.3" stroke="#c4d2ea" stroke-width="1.4" /><line x1="148.0" y1="90.9" x2="165.2" y2="95.8" stroke="#c4d2ea" stroke-width="1.4" /><line x1="166.8" y1="127.8" x2="183.9" y2="132.7" stroke="#c4d2ea" stroke-width="1.4" /><line x1="91.9" y1="77.8" x2="109.0" y2="82.7" stroke="#c4d2ea" stroke-width="1.4" /><line x1="114.4" y1="159.0" x2="131.5" y2="163.9" stroke="#c4d2ea" stroke-width="1.4" /><line x1="166.5" y1="63.6" x2="183.6" y2="68.5" stroke="#c4d2ea" stroke-width="1.4" /><line x1="112.1" y1="75.9" x2="129.2" y2="80.8" stroke="#c4d2ea" stroke-width="1.4" /><line x1="169.0" y1="62.8" x2="186.1" y2="67.7" stroke="#c4d2ea" stroke-width="1.4" /><line x1="78.6" y1="47.8" x2="95.7" y2="52.7" stroke="#c4d2ea" stroke-width="1.4" /><line x1="112.0" y1="201.8" x2="129.2" y2="206.7" stroke="#c4d2ea" stroke-width="1.4" /><line x1="160.1" y1="171.4" x2="177.2" y2="176.3" stroke="#c4d2ea" stroke-width="1.4" /></g></g></svg><div class="a" style="left:718px;top:178px;width:248px;height:248px;border:1px solid #ddd;background:#fff"></div><svg class="a" style="left:720px;top:180px" width="245" height="246" viewBox="0 0 245 245" preserveAspectRatio="none"><defs><filter id="sf1" x="-5%" y="-5%" width="110%" height="110%"><feGaussianBlur stdDeviation="0.55"/></filter><linearGradient id="sk2" x1="0" y1="0" x2="0" y2="1"><stop offset="0" stop-color="#c0d8f8"/><stop offset="1" stop-color="#d2e2f8"/></linearGradient><linearGradient id="w2" x1="1" y1="0" x2="0" y2="1"><stop offset="0" stop-color="#d0d0ce"/><stop offset="1" stop-color="#a4a4a2"/></linearGradient><clipPath id="c2"><polygon points="57.6,41.7 73.5,46.5 79.6,61.2 77.2,88.2 79.6,98.0 73.5,134.8 63.7,171.5 49.0,210.7 36.8,245.0 0.0,245.0 0.0,122.5"/></clipPath><clipPath id="c2r"><polygon points="153.1,106.6 166.6,102.9 167.8,82.1 191.1,82.1 245.0,76.0 245.0,245.0 153.1,245.0"/></clipPath></defs><g filter="url(#sf1)"><rect x="-12" y="-12" width="269" height="269" fill="#b8c4d4"/><rect x="0.0" y="0.0" width="245.0" height="245.0" fill="url(#sk2)" /><polygon points="24.5,203.3 53.9,198.5 53.9,245.0 19.6,245.0" fill="#d6d6d4" /><polygon points="66.2,200.9 102.9,196.0 110.2,200.9 110.2,245.0 53.9,245.0" fill="#e2e2e0" /><polygon points="102.9,196.0 110.2,200.9 110.2,245.0 102.9,245.0" fill="#c4c4c2" /><rect x="69.8" y="204.6" width="3.2" height="2.2" fill="#7d828c" /><rect x="75.5" y="204.6" width="3.2" height="2.2" fill="#7d828c" /><rect x="81.1" y="204.6" width="3.2" height="2.2" fill="#7d828c" /><rect x="86.7" y="204.6" width="3.2" height="2.2" fill="#7d828c" /><rect x="92.4" y="204.6" width="3.2" height="2.2" fill="#7d828c" /><rect x="98.0" y="204.6" width="3.2" height="2.2" fill="#7d828c" /><rect x="69.8" y="209.2" width="3.2" height="2.2" fill="#7d828c" /><rect x="75.5" y="209.2" width="3.2" height="2.2" fill="#7d828c" /><rect x="81.1" y="209.2" width="3.2" height="2.2" fill="#7d828c" /><rect x="86.7" y="209.2" width="3.2" height="2.2" fill="#7d828c" /><rect x="92.4" y="209.2" width="3.2" height="2.2" fill="#7d828c" /><rect x="98.0" y="209.2" width="3.2" height="2.2" fill="#7d828c" /><rect x="69.8" y="213.9" width="3.2" height="2.2" fill="#7d828c" /><rect x="75.5" y="213.9" width="3.2" height="2.2" fill="#7d828c" /><rect x="81.1" y="213.9" width="3.2" height="2.2" fill="#7d828c" /><rect x="86.7" y="213.9" width="3.2" height="2.2" fill="#7d828c" /><rect x="92.4" y="213.9" width="3.2" height="2.2" fill="#7d828c" /><rect x="98.0" y="213.9" width="3.2" height="2.2" fill="#7d828c" /><rect x="69.8" y="218.5" width="3.2" height="2.2" fill="#7d828c" /><rect x="75.5" y="218.5" width="3.2" height="2.2" fill="#7d828c" /><rect x="81.1" y="218.5" width="3.2" height="2.2" fill="#7d828c" /><rect x="86.7" y="218.5" width="3.2" height="2.2" fill="#7d828c" /><rect x="92.4" y="218.5" width="3.2" height="2.2" fill="#7d828c" /><rect x="98.0" y="218.5" width="3.2" height="2.2" fill="#7d828c" /><rect x="69.8" y="223.2" width="3.2" height="2.2" fill="#7d828c" /><rect x="75.5" y="223.2" width="3.2" height="2.2" fill="#7d828c" /><rect x="81.1" y="223.2" width="3.2" height="2.2" fill="#7d828c" /><rect x="86.7" y="223.2" width="3.2" height="2.2" fill="#7d828c" /><rect x="92.4" y="223.2" width="3.2" height="2.2" fill="#7d828c" /><rect x="98.0" y="223.2" width="3.2" height="2.2" fill="#7d828c" /><rect x="69.8" y="227.8" width="3.2" height="2.2" fill="#7d828c" /><rect x="75.5" y="227.8" width="3.2" height="2.2" fill="#7d828c" /><rect x="81.1" y="227.8" width="3.2" height="2.2" fill="#7d828c" /><rect x="86.7" y="227.8" width="3.2" height="2.2" fill="#7d828c" /><rect x="92.4" y="227.8" width="3.2" height="2.2" fill="#7d828c" /><rect x="98.0" y="227.8" width="3.2" height="2.2" fill="#7d828c" /><rect x="69.8" y="232.5" width="3.2" height="2.2" fill="#7d828c" /><rect x="75.5" y="232.5" width="3.2" height="2.2" fill="#7d828c" /><rect x="81.1" y="232.5" width="3.2" height="2.2" fill="#7d828c" /><rect x="86.7" y="232.5" width="3.2" height="2.2" fill="#7d828c" /><rect x="92.4" y="232.5" width="3.2" height="2.2" fill="#7d828c" /><rect x="98.0" y="232.5" width="3.2" height="2.2" fill="#7d828c" /><rect x="69.8" y="237.2" width="3.2" height="2.2" fill="#7d828c" /><rect x="75.5" y="237.2" width="3.2" height="2.2" fill="#7d828c" /><rect x="81.1" y="237.2" width="3.2" height="2.2" fill="#7d828c" /><rect x="86.7" y="237.2" width="3.2" height="2.2" fill="#7d828c" /><rect x="92.4" y="237.2" width="3.2" height="2.2" fill="#7d828c" /><rect x="98.0" y="237.2" width="3.2" height="2.2" fill="#7d828c" /><rect x="69.8" y="241.8" width="3.2" height="2.2" fill="#7d828c" /><rect x="75.5" y="241.8" width="3.2" height="2.2" fill="#7d828c" /><rect x="81.1" y="241.8" width="3.2" height="2.2" fill="#7d828c" /><rect x="86.7" y="241.8" width="3.2" height="2.2" fill="#7d828c" /><rect x="92.4" y="241.8" width="3.2" height="2.2" fill="#7d828c" /><rect x="98.0" y="241.8" width="3.2" height="2.2" fill="#7d828c" /><rect x="30.6" y="208.2" width="2.7" height="2.2" fill="#8a8f98" /><rect x="36.0" y="208.2" width="2.7" height="2.2" fill="#8a8f98" /><rect x="41.4" y="208.2" width="2.7" height="2.2" fill="#8a8f98" /><rect x="46.8" y="208.2" width="2.7" height="2.2" fill="#8a8f98" /><rect x="30.6" y="212.9" width="2.7" height="2.2" fill="#8a8f98" /><rect x="36.0" y="212.9" width="2.7" height="2.2" fill="#8a8f98" /><rect x="41.4" y="212.9" width="2.7" height="2.2" fill="#8a8f98" /><rect x="46.8" y="212.9" width="2.7" height="2.2" fill="#8a8f98" /><rect x="30.6" y="217.6" width="2.7" height="2.2" fill="#8a8f98" /><rect x="36.0" y="217.6" width="2.7" height="2.2" fill="#8a8f98" /><rect x="41.4" y="217.6" width="2.7" height="2.2" fill="#8a8f98" /><rect x="46.8" y="217.6" width="2.7" height="2.2" fill="#8a8f98" /><rect x="30.6" y="222.2" width="2.7" height="2.2" fill="#8a8f98" /><rect x="36.0" y="222.2" width="2.7" height="2.2" fill="#8a8f98" /><rect x="41.4" y="222.2" width="2.7" height="2.2" fill="#8a8f98" /><rect x="46.8" y="222.2" width="2.7" height="2.2" fill="#8a8f98" /><rect x="30.6" y="226.9" width="2.7" height="2.2" fill="#8a8f98" /><rect x="36.0" y="226.9" width="2.7" height="2.2" fill="#8a8f98" /><rect x="41.4" y="226.9" width="2.7" height="2.2" fill="#8a8f98" /><rect x="46.8" y="226.9" width="2.7" height="2.2" fill="#8a8f98" /><rect x="30.6" y="231.5" width="2.7" height="2.2" fill="#8a8f98" /><rect x="36.0" y="231.5" width="2.7" height="2.2" fill="#8a8f98" /><rect x="41.4" y="231.5" width="2.7" height="2.2" fill="#8a8f98" /><rect x="46.8" y="231.5" width="2.7" height="2.2" fill="#8a8f98" /><rect x="30.6" y="236.2" width="2.7" height="2.2" fill="#8a8f98" /><rect x="36.0" y="236.2" width="2.7" height="2.2" fill="#8a8f98" /><rect x="41.4" y="236.2" width="2.7" height="2.2" fill="#8a8f98" /><rect x="46.8" y="236.2" width="2.7" height="2.2" fill="#8a8f98" /><rect x="30.6" y="240.8" width="2.7" height="2.2" fill="#8a8f98" /><rect x="36.0" y="240.8" width="2.7" height="2.2" fill="#8a8f98" /><rect x="41.4" y="240.8" width="2.7" height="2.2" fill="#8a8f98" /><rect x="46.8" y="240.8" width="2.7" height="2.2" fill="#8a8f98" /><polygon points="0.0,0.0 36.8,0.0 0.0,49.0" fill="#737983" /><line x1="0.0" y1="8.6" x2="31.9" y2="0.0" stroke="#3d424c" stroke-width="1.6" /><line x1="0.0" y1="15.9" x2="26.5" y2="0.0" stroke="#3d424c" stroke-width="1.6" /><line x1="0.0" y1="23.3" x2="21.1" y2="0.0" stroke="#3d424c" stroke-width="1.6" /><line x1="0.0" y1="30.6" x2="15.7" y2="0.0" stroke="#3d424c" stroke-width="1.6" /><line x1="0.0" y1="38.0" x2="10.3" y2="0.0" stroke="#3d424c" stroke-width="1.6" /><line x1="0.0" y1="45.3" x2="4.9" y2="0.0" stroke="#3d424c" stroke-width="1.6" /><polygon points="36.8,0.0 50.2,0.0 58.8,13.5 57.6,41.7 0.0,122.5 0.0,49.0" fill="url(#w2)" /><line x1="46.5" y1="0.0" x2="0.0" y2="78.4" stroke="#8c8c8a" stroke-width="1.2" /><rect x="52.7" y="19.6" width="2.0" height="2.9" fill="#5a5d62" /><rect x="49.2" y="24.8" width="2.0" height="2.9" fill="#5a5d62" /><rect x="45.7" y="30.1" width="2.0" height="2.9" fill="#5a5d62" /><rect x="42.2" y="35.4" width="2.0" height="2.9" fill="#5a5d62" /><rect x="38.7" y="40.6" width="2.0" height="2.9" fill="#5a5d62" /><rect x="35.2" y="45.9" width="2.0" height="2.9" fill="#5a5d62" /><rect x="31.7" y="51.1" width="2.0" height="2.9" fill="#5a5d62" /><rect x="28.2" y="56.3" width="2.0" height="2.9" fill="#5a5d62" /><rect x="24.7" y="61.6" width="2.0" height="2.9" fill="#5a5d62" /><rect x="21.2" y="66.8" width="2.0" height="2.9" fill="#5a5d62" /><rect x="17.7" y="72.1" width="2.0" height="2.9" fill="#5a5d62" /><rect x="14.2" y="77.4" width="2.0" height="2.9" fill="#5a5d62" /><rect x="10.7" y="82.6" width="2.0" height="2.9" fill="#5a5d62" /><rect x="7.2" y="87.9" width="2.0" height="2.9" fill="#5a5d62" /><g clip-path="url(#c2)"><rect x="0.0" y="0.0" width="245.0" height="245.0" fill="#b4b6b8" /><polygon points="1.2,87.0 8.6,82.6 8.6,85.3 1.2,89.7" fill="#3b4049" /><polygon points="11.5,80.8 18.9,76.4 18.9,79.1 11.5,83.5" fill="#3b4049" /><polygon points="21.8,74.6 29.2,70.2 29.2,72.9 21.8,77.3" fill="#3b4049" /><polygon points="32.1,68.5 39.4,64.0 39.4,66.7 32.1,71.1" fill="#3b4049" /><polygon points="42.4,62.3 49.7,57.9 49.7,60.6 42.4,65.0" fill="#3b4049" /><polygon points="52.7,56.1 60.0,51.7 60.0,54.4 52.7,58.8" fill="#3b4049" /><polygon points="63.0,49.9 70.3,45.5 70.3,48.2 63.0,52.6" fill="#3b4049" /><polygon points="73.3,43.8 80.6,39.3 80.6,42.0 73.3,46.5" fill="#3b4049" /><polygon points="1.2,93.0 8.6,88.6 8.6,91.3 1.2,95.7" fill="#3b4049" /><polygon points="11.5,86.8 18.9,82.4 18.9,85.1 11.5,89.5" fill="#3b4049" /><polygon points="21.8,80.6 29.2,76.2 29.2,78.9 21.8,83.3" fill="#3b4049" /><polygon points="32.1,74.5 39.4,70.0 39.4,72.7 32.1,77.2" fill="#3b4049" /><polygon points="42.4,68.3 49.7,63.9 49.7,66.6 42.4,71.0" fill="#3b4049" /><polygon points="52.7,62.1 60.0,57.7 60.0,60.4 52.7,64.8" fill="#3b4049" /><polygon points="63.0,55.9 70.3,51.5 70.3,54.2 63.0,58.6" fill="#3b4049" /><polygon points="73.3,49.8 80.6,45.3 80.6,48.0 73.3,52.5" fill="#3b4049" /><polygon points="1.2,99.0 8.6,94.6 8.6,97.3 1.2,101.7" fill="#3b4049" /><polygon points="11.5,92.8 18.9,88.4 18.9,91.1 11.5,95.5" fill="#3b4049" /><polygon points="21.8,86.6 29.2,82.2 29.2,84.9 21.8,89.3" fill="#3b4049" /><polygon points="32.1,80.5 39.4,76.0 39.4,78.7 32.1,83.2" fill="#3b4049" /><polygon points="42.4,74.3 49.7,69.9 49.7,72.6 42.4,77.0" fill="#3b4049" /><polygon points="52.7,68.1 60.0,63.7 60.0,66.4 52.7,70.8" fill="#3b4049" /><polygon points="63.0,61.9 70.3,57.5 70.3,60.2 63.0,64.6" fill="#3b4049" /><polygon points="73.3,55.8 80.6,51.4 80.6,54.0 73.3,58.5" fill="#3b4049" /><polygon points="1.2,105.0 8.6,100.6 8.6,103.3 1.2,107.7" fill="#3b4049" /><polygon points="11.5,98.8 18.9,94.4 18.9,97.1 11.5,101.5" fill="#3b4049" /><polygon points="21.8,92.6 29.2,88.2 29.2,90.9 21.8,95.3" fill="#3b4049" /><polygon points="32.1,86.5 39.4,82.1 39.4,84.7 32.1,89.2" fill="#3b4049" /><polygon points="42.4,80.3 49.7,75.9 49.7,78.6 42.4,83.0" fill="#3b4049" /><polygon points="52.7,74.1 60.0,69.7 60.0,72.4 52.7,76.8" fill="#3b4049" /><polygon points="63.0,67.9 70.3,63.5 70.3,66.2 63.0,70.6" fill="#3b4049" /><polygon points="73.3,61.8 80.6,57.4 80.6,60.0 73.3,64.5" fill="#3b4049" /><polygon points="1.2,111.0 8.6,106.6 8.6,109.3 1.2,113.7" fill="#3b4049" /><polygon points="11.5,104.8 18.9,100.4 18.9,103.1 11.5,107.5" fill="#3b4049" /><polygon points="21.8,98.6 29.2,94.2 29.2,96.9 21.8,101.3" fill="#3b4049" /><polygon points="32.1,92.5 39.4,88.1 39.4,90.7 32.1,95.2" fill="#3b4049" /><polygon points="42.4,86.3 49.7,81.9 49.7,84.6 42.4,89.0" fill="#3b4049" /><polygon points="52.7,80.1 60.0,75.7 60.0,78.4 52.7,82.8" fill="#3b4049" /><polygon points="63.0,73.9 70.3,69.5 70.3,72.2 63.0,76.6" fill="#3b4049" /><polygon points="73.3,67.8 80.6,63.4 80.6,66.1 73.3,70.5" fill="#3b4049" /><polygon points="1.2,117.0 8.6,112.6 8.6,115.3 1.2,119.7" fill="#3b4049" /><polygon points="11.5,110.8 18.9,106.4 18.9,109.1 11.5,113.5" fill="#3b4049" /><polygon points="21.8,104.6 29.2,100.2 29.2,102.9 21.8,107.3" fill="#3b4049" /><polygon points="32.1,98.5 39.4,94.1 39.4,96.8 32.1,101.2" fill="#3b4049" /><polygon points="42.4,92.3 49.7,87.9 49.7,90.6 42.4,95.0" fill="#3b4049" /><polygon points="52.7,86.1 60.0,81.7 60.0,84.4 52.7,88.8" fill="#3b4049" /><polygon points="63.0,79.9 70.3,75.5 70.3,78.2 63.0,82.6" fill="#3b4049" /><polygon points="73.3,73.8 80.6,69.4 80.6,72.1 73.3,76.5" fill="#3b4049" /><polygon points="1.2,123.0 8.6,118.6 8.6,121.3 1.2,125.7" fill="#3b4049" /><polygon points="11.5,116.8 18.9,112.4 18.9,115.1 11.5,119.5" fill="#3b4049" /><polygon points="21.8,110.6 29.2,106.2 29.2,108.9 21.8,113.3" fill="#3b4049" /><polygon points="32.1,104.5 39.4,100.1 39.4,102.8 32.1,107.2" fill="#3b4049" /><polygon points="42.4,98.3 49.7,93.9 49.7,96.6 42.4,101.0" fill="#3b4049" /><polygon points="52.7,92.1 60.0,87.7 60.0,90.4 52.7,94.8" fill="#3b4049" /><polygon points="63.0,85.9 70.3,81.5 70.3,84.2 63.0,88.6" fill="#3b4049" /><polygon points="73.3,79.8 80.6,75.4 80.6,78.1 73.3,82.5" fill="#3b4049" /><polygon points="1.2,129.0 8.6,124.6 8.6,127.3 1.2,131.7" fill="#3b4049" /><polygon points="11.5,122.8 18.9,118.4 18.9,121.1 11.5,125.5" fill="#3b4049" /><polygon points="21.8,116.6 29.2,112.2 29.2,114.9 21.8,119.3" fill="#3b4049" /><polygon points="32.1,110.5 39.4,106.1 39.4,108.8 32.1,113.2" fill="#3b4049" /><polygon points="42.4,104.3 49.7,99.9 49.7,102.6 42.4,107.0" fill="#3b4049" /><polygon points="52.7,98.1 60.0,93.7 60.0,96.4 52.7,100.8" fill="#3b4049" /><polygon points="63.0,91.9 70.3,87.5 70.3,90.2 63.0,94.6" fill="#3b4049" /><polygon points="73.3,85.8 80.6,81.4 80.6,84.1 73.3,88.5" fill="#3b4049" /><polygon points="1.2,135.0 8.6,130.6 8.6,133.3 1.2,137.7" fill="#3b4049" /><polygon points="11.5,128.8 18.9,124.4 18.9,127.1 11.5,131.5" fill="#3b4049" /><polygon points="21.8,122.6 29.2,118.2 29.2,120.9 21.8,125.3" fill="#3b4049" /><polygon points="32.1,116.5 39.4,112.1 39.4,114.8 32.1,119.2" fill="#3b4049" /><polygon points="42.4,110.3 49.7,105.9 49.7,108.6 42.4,113.0" fill="#3b4049" /><polygon points="52.7,104.1 60.0,99.7 60.0,102.4 52.7,106.8" fill="#3b4049" /><polygon points="63.0,98.0 70.3,93.5 70.3,96.2 63.0,100.6" fill="#3b4049" /><polygon points="73.3,91.8 80.6,87.4 80.6,90.1 73.3,94.5" fill="#3b4049" /><polygon points="1.2,141.0 8.6,136.6 8.6,139.3 1.2,143.7" fill="#3b4049" /><polygon points="11.5,134.8 18.9,130.4 18.9,133.1 11.5,137.5" fill="#3b4049" /><polygon points="21.8,128.6 29.2,124.2 29.2,126.9 21.8,131.3" fill="#3b4049" /><polygon points="32.1,122.5 39.4,118.1 39.4,120.8 32.1,125.2" fill="#3b4049" /><polygon points="42.4,116.3 49.7,111.9 49.7,114.6 42.4,119.0" fill="#3b4049" /><polygon points="52.7,110.1 60.0,105.7 60.0,108.4 52.7,112.8" fill="#3b4049" /><polygon points="63.0,104.0 70.3,99.5 70.3,102.2 63.0,106.6" fill="#3b4049" /><polygon points="73.3,97.8 80.6,93.4 80.6,96.1 73.3,100.5" fill="#3b4049" /><polygon points="1.2,147.0 8.6,142.6 8.6,145.3 1.2,149.7" fill="#3b4049" /><polygon points="11.5,140.8 18.9,136.4 18.9,139.1 11.5,143.5" fill="#3b4049" /><polygon points="21.8,134.7 29.2,130.2 29.2,132.9 21.8,137.3" fill="#3b4049" /><polygon points="32.1,128.5 39.4,124.1 39.4,126.8 32.1,131.2" fill="#3b4049" /><polygon points="42.4,122.3 49.7,117.9 49.7,120.6 42.4,125.0" fill="#3b4049" /><polygon points="52.7,116.1 60.0,111.7 60.0,114.4 52.7,118.8" fill="#3b4049" /><polygon points="63.0,110.0 70.3,105.5 70.3,108.2 63.0,112.7" fill="#3b4049" /><polygon points="73.3,103.8 80.6,99.4 80.6,102.1 73.3,106.5" fill="#3b4049" /><polygon points="1.2,153.0 8.6,148.6 8.6,151.3 1.2,155.7" fill="#3b4049" /><polygon points="11.5,146.8 18.9,142.4 18.9,145.1 11.5,149.5" fill="#3b4049" /><polygon points="21.8,140.7 29.2,136.2 29.2,138.9 21.8,143.3" fill="#3b4049" /><polygon points="32.1,134.5 39.4,130.1 39.4,132.8 32.1,137.2" fill="#3b4049" /><polygon points="42.4,128.3 49.7,123.9 49.7,126.6 42.4,131.0" fill="#3b4049" /><polygon points="52.7,122.1 60.0,117.7 60.0,120.4 52.7,124.8" fill="#3b4049" /><polygon points="63.0,116.0 70.3,111.5 70.3,114.2 63.0,118.7" fill="#3b4049" /><polygon points="73.3,109.8 80.6,105.4 80.6,108.1 73.3,112.5" fill="#3b4049" /><polygon points="1.2,159.0 8.6,154.6 8.6,157.3 1.2,161.7" fill="#3b4049" /><polygon points="11.5,152.8 18.9,148.4 18.9,151.1 11.5,155.5" fill="#3b4049" /><polygon points="21.8,146.7 29.2,142.2 29.2,144.9 21.8,149.4" fill="#3b4049" /><polygon points="32.1,140.5 39.4,136.1 39.4,138.8 32.1,143.2" fill="#3b4049" /><polygon points="42.4,134.3 49.7,129.9 49.7,132.6 42.4,137.0" fill="#3b4049" /><polygon points="52.7,128.1 60.0,123.7 60.0,126.4 52.7,130.8" fill="#3b4049" /><polygon points="63.0,122.0 70.3,117.6 70.3,120.2 63.0,124.7" fill="#3b4049" /><polygon points="73.3,115.8 80.6,111.4 80.6,114.1 73.3,118.5" fill="#3b4049" /><polygon points="1.2,165.0 8.6,160.6 8.6,163.3 1.2,167.7" fill="#3b4049" /><polygon points="11.5,158.8 18.9,154.4 18.9,157.1 11.5,161.5" fill="#3b4049" /><polygon points="21.8,152.7 29.2,148.2 29.2,150.9 21.8,155.4" fill="#3b4049" /><polygon points="32.1,146.5 39.4,142.1 39.4,144.8 32.1,149.2" fill="#3b4049" /><polygon points="42.4,140.3 49.7,135.9 49.7,138.6 42.4,143.0" fill="#3b4049" /><polygon points="52.7,134.1 60.0,129.7 60.0,132.4 52.7,136.8" fill="#3b4049" /><polygon points="63.0,128.0 70.3,123.6 70.3,126.2 63.0,130.7" fill="#3b4049" /><polygon points="73.3,121.8 80.6,117.4 80.6,120.1 73.3,124.5" fill="#3b4049" /><polygon points="1.2,171.0 8.6,166.6 8.6,169.3 1.2,173.7" fill="#3b4049" /><polygon points="11.5,164.8 18.9,160.4 18.9,163.1 11.5,167.5" fill="#3b4049" /><polygon points="21.8,158.7 29.2,154.3 29.2,156.9 21.8,161.4" fill="#3b4049" /><polygon points="32.1,152.5 39.4,148.1 39.4,150.8 32.1,155.2" fill="#3b4049" /><polygon points="42.4,146.3 49.7,141.9 49.7,144.6 42.4,149.0" fill="#3b4049" /><polygon points="52.7,140.1 60.0,135.7 60.0,138.4 52.7,142.8" fill="#3b4049" /><polygon points="63.0,134.0 70.3,129.6 70.3,132.3 63.0,136.7" fill="#3b4049" /><polygon points="73.3,127.8 80.6,123.4 80.6,126.1 73.3,130.5" fill="#3b4049" /><polygon points="1.2,177.0 8.6,172.6 8.6,175.3 1.2,179.7" fill="#3b4049" /><polygon points="11.5,170.8 18.9,166.4 18.9,169.1 11.5,173.5" fill="#3b4049" /><polygon points="21.8,164.7 29.2,160.3 29.2,162.9 21.8,167.4" fill="#3b4049" /><polygon points="32.1,158.5 39.4,154.1 39.4,156.8 32.1,161.2" fill="#3b4049" /><polygon points="42.4,152.3 49.7,147.9 49.7,150.6 42.4,155.0" fill="#3b4049" /><polygon points="52.7,146.1 60.0,141.7 60.0,144.4 52.7,148.8" fill="#3b4049" /><polygon points="63.0,140.0 70.3,135.6 70.3,138.3 63.0,142.7" fill="#3b4049" /><polygon points="73.3,133.8 80.6,129.4 80.6,132.1 73.3,136.5" fill="#3b4049" /><polygon points="1.2,183.0 8.6,178.6 8.6,181.3 1.2,185.7" fill="#3b4049" /><polygon points="11.5,176.8 18.9,172.4 18.9,175.1 11.5,179.5" fill="#3b4049" /><polygon points="21.8,170.7 29.2,166.3 29.2,169.0 21.8,173.4" fill="#3b4049" /><polygon points="32.1,164.5 39.4,160.1 39.4,162.8 32.1,167.2" fill="#3b4049" /><polygon points="42.4,158.3 49.7,153.9 49.7,156.6 42.4,161.0" fill="#3b4049" /><polygon points="52.7,152.1 60.0,147.7 60.0,150.4 52.7,154.8" fill="#3b4049" /><polygon points="63.0,146.0 70.3,141.6 70.3,144.3 63.0,148.7" fill="#3b4049" /><polygon points="73.3,139.8 80.6,135.4 80.6,138.1 73.3,142.5" fill="#3b4049" /><polygon points="1.2,189.0 8.6,184.6 8.6,187.3 1.2,191.7" fill="#3b4049" /><polygon points="11.5,182.8 18.9,178.4 18.9,181.1 11.5,185.5" fill="#3b4049" /><polygon points="21.8,176.7 29.2,172.3 29.2,175.0 21.8,179.4" fill="#3b4049" /><polygon points="32.1,170.5 39.4,166.1 39.4,168.8 32.1,173.2" fill="#3b4049" /><polygon points="42.4,164.3 49.7,159.9 49.7,162.6 42.4,167.0" fill="#3b4049" /><polygon points="52.7,158.1 60.0,153.7 60.0,156.4 52.7,160.8" fill="#3b4049" /><polygon points="63.0,152.0 70.3,147.6 70.3,150.3 63.0,154.7" fill="#3b4049" /><polygon points="73.3,145.8 80.6,141.4 80.6,144.1 73.3,148.5" fill="#3b4049" /><polygon points="1.2,195.0 8.6,190.6 8.6,193.3 1.2,197.7" fill="#3b4049" /><polygon points="11.5,188.8 18.9,184.4 18.9,187.1 11.5,191.5" fill="#3b4049" /><polygon points="21.8,182.7 29.2,178.3 29.2,181.0 21.8,185.4" fill="#3b4049" /><polygon points="32.1,176.5 39.4,172.1 39.4,174.8 32.1,179.2" fill="#3b4049" /><polygon points="42.4,170.3 49.7,165.9 49.7,168.6 42.4,173.0" fill="#3b4049" /><polygon points="52.7,164.1 60.0,159.7 60.0,162.4 52.7,166.8" fill="#3b4049" /><polygon points="63.0,158.0 70.3,153.6 70.3,156.3 63.0,160.7" fill="#3b4049" /><polygon points="73.3,151.8 80.6,147.4 80.6,150.1 73.3,154.5" fill="#3b4049" /><polygon points="1.2,201.0 8.6,196.6 8.6,199.3 1.2,203.7" fill="#3b4049" /><polygon points="11.5,194.8 18.9,190.4 18.9,193.1 11.5,197.5" fill="#3b4049" /><polygon points="21.8,188.7 29.2,184.3 29.2,187.0 21.8,191.4" fill="#3b4049" /><polygon points="32.1,182.5 39.4,178.1 39.4,180.8 32.1,185.2" fill="#3b4049" /><polygon points="42.4,176.3 49.7,171.9 49.7,174.6 42.4,179.0" fill="#3b4049" /><polygon points="52.7,170.2 60.0,165.7 60.0,168.4 52.7,172.8" fill="#3b4049" /><polygon points="63.0,164.0 70.3,159.6 70.3,162.3 63.0,166.7" fill="#3b4049" /><polygon points="73.3,157.8 80.6,153.4 80.6,156.1 73.3,160.5" fill="#3b4049" /><polygon points="1.2,207.0 8.6,202.6 8.6,205.3 1.2,209.7" fill="#3b4049" /><polygon points="11.5,200.9 18.9,196.4 18.9,199.1 11.5,203.5" fill="#3b4049" /><polygon points="21.8,194.7 29.2,190.3 29.2,193.0 21.8,197.4" fill="#3b4049" /><polygon points="32.1,188.5 39.4,184.1 39.4,186.8 32.1,191.2" fill="#3b4049" /><polygon points="42.4,182.3 49.7,177.9 49.7,180.6 42.4,185.0" fill="#3b4049" /><polygon points="52.7,176.2 60.0,171.7 60.0,174.4 52.7,178.8" fill="#3b4049" /><polygon points="63.0,170.0 70.3,165.6 70.3,168.3 63.0,172.7" fill="#3b4049" /><polygon points="73.3,163.8 80.6,159.4 80.6,162.1 73.3,166.5" fill="#3b4049" /><polygon points="1.2,213.0 8.6,208.6 8.6,211.3 1.2,215.7" fill="#3b4049" /><polygon points="11.5,206.9 18.9,202.4 18.9,205.1 11.5,209.5" fill="#3b4049" /><polygon points="21.8,200.7 29.2,196.3 29.2,199.0 21.8,203.4" fill="#3b4049" /><polygon points="32.1,194.5 39.4,190.1 39.4,192.8 32.1,197.2" fill="#3b4049" /><polygon points="42.4,188.3 49.7,183.9 49.7,186.6 42.4,191.0" fill="#3b4049" /><polygon points="52.7,182.2 60.0,177.7 60.0,180.4 52.7,184.9" fill="#3b4049" /><polygon points="63.0,176.0 70.3,171.6 70.3,174.3 63.0,178.7" fill="#3b4049" /><polygon points="73.3,169.8 80.6,165.4 80.6,168.1 73.3,172.5" fill="#3b4049" /><polygon points="1.2,219.0 8.6,214.6 8.6,217.3 1.2,221.7" fill="#3b4049" /><polygon points="11.5,212.9 18.9,208.4 18.9,211.1 11.5,215.6" fill="#3b4049" /><polygon points="21.8,206.7 29.2,202.3 29.2,205.0 21.8,209.4" fill="#3b4049" /><polygon points="32.1,200.5 39.4,196.1 39.4,198.8 32.1,203.2" fill="#3b4049" /><polygon points="42.4,194.3 49.7,189.9 49.7,192.6 42.4,197.0" fill="#3b4049" /><polygon points="52.7,188.2 60.0,183.8 60.0,186.4 52.7,190.9" fill="#3b4049" /><polygon points="63.0,182.0 70.3,177.6 70.3,180.3 63.0,184.7" fill="#3b4049" /><polygon points="73.3,175.8 80.6,171.4 80.6,174.1 73.3,178.5" fill="#3b4049" /><polygon points="1.2,225.0 8.6,220.6 8.6,223.3 1.2,227.7" fill="#3b4049" /><polygon points="11.5,218.9 18.9,214.4 18.9,217.1 11.5,221.6" fill="#3b4049" /><polygon points="21.8,212.7 29.2,208.3 29.2,211.0 21.8,215.4" fill="#3b4049" /><polygon points="32.1,206.5 39.4,202.1 39.4,204.8 32.1,209.2" fill="#3b4049" /><polygon points="42.4,200.3 49.7,195.9 49.7,198.6 42.4,203.0" fill="#3b4049" /><polygon points="52.7,194.2 60.0,189.8 60.0,192.4 52.7,196.9" fill="#3b4049" /><polygon points="63.0,188.0 70.3,183.6 70.3,186.3 63.0,190.7" fill="#3b4049" /><polygon points="73.3,181.8 80.6,177.4 80.6,180.1 73.3,184.5" fill="#3b4049" /><polygon points="1.2,231.0 8.6,226.6 8.6,229.3 1.2,233.7" fill="#3b4049" /><polygon points="11.5,224.9 18.9,220.5 18.9,223.1 11.5,227.6" fill="#3b4049" /><polygon points="21.8,218.7 29.2,214.3 29.2,217.0 21.8,221.4" fill="#3b4049" /><polygon points="32.1,212.5 39.4,208.1 39.4,210.8 32.1,215.2" fill="#3b4049" /><polygon points="42.4,206.3 49.7,201.9 49.7,204.6 42.4,209.0" fill="#3b4049" /><polygon points="52.7,200.2 60.0,195.8 60.0,198.5 52.7,202.9" fill="#3b4049" /><polygon points="63.0,194.0 70.3,189.6 70.3,192.3 63.0,196.7" fill="#3b4049" /><polygon points="73.3,187.8 80.6,183.4 80.6,186.1 73.3,190.5" fill="#3b4049" /><polygon points="1.2,237.0 8.6,232.6 8.6,235.3 1.2,239.7" fill="#3b4049" /><polygon points="11.5,230.9 18.9,226.5 18.9,229.1 11.5,233.6" fill="#3b4049" /><polygon points="21.8,224.7 29.2,220.3 29.2,223.0 21.8,227.4" fill="#3b4049" /><polygon points="32.1,218.5 39.4,214.1 39.4,216.8 32.1,221.2" fill="#3b4049" /><polygon points="42.4,212.3 49.7,207.9 49.7,210.6 42.4,215.0" fill="#3b4049" /><polygon points="52.7,206.2 60.0,201.8 60.0,204.5 52.7,208.9" fill="#3b4049" /><polygon points="63.0,200.0 70.3,195.6 70.3,198.3 63.0,202.7" fill="#3b4049" /><polygon points="73.3,193.8 80.6,189.4 80.6,192.1 73.3,196.5" fill="#3b4049" /><polygon points="1.2,243.0 8.6,238.6 8.6,241.3 1.2,245.7" fill="#3b4049" /><polygon points="11.5,236.9 18.9,232.5 18.9,235.2 11.5,239.6" fill="#3b4049" /><polygon points="21.8,230.7 29.2,226.3 29.2,229.0 21.8,233.4" fill="#3b4049" /><polygon points="32.1,224.5 39.4,220.1 39.4,222.8 32.1,227.2" fill="#3b4049" /><polygon points="42.4,218.3 49.7,213.9 49.7,216.6 42.4,221.0" fill="#3b4049" /><polygon points="52.7,212.2 60.0,207.8 60.0,210.5 52.7,214.9" fill="#3b4049" /><polygon points="63.0,206.0 70.3,201.6 70.3,204.3 63.0,208.7" fill="#3b4049" /><polygon points="73.3,199.8 80.6,195.4 80.6,198.1 73.3,202.5" fill="#3b4049" /><polygon points="1.2,249.0 8.6,244.6 8.6,247.3 1.2,251.7" fill="#3b4049" /><polygon points="11.5,242.9 18.9,238.5 18.9,241.2 11.5,245.6" fill="#3b4049" /><polygon points="21.8,236.7 29.2,232.3 29.2,235.0 21.8,239.4" fill="#3b4049" /><polygon points="32.1,230.5 39.4,226.1 39.4,228.8 32.1,233.2" fill="#3b4049" /><polygon points="42.4,224.3 49.7,219.9 49.7,222.6 42.4,227.0" fill="#3b4049" /><polygon points="52.7,218.2 60.0,213.8 60.0,216.5 52.7,220.9" fill="#3b4049" /><polygon points="63.0,212.0 70.3,207.6 70.3,210.3 63.0,214.7" fill="#3b4049" /><polygon points="73.3,205.8 80.6,201.4 80.6,204.1 73.3,208.5" fill="#3b4049" /><polygon points="1.2,255.0 8.6,250.6 8.6,253.3 1.2,257.7" fill="#3b4049" /><polygon points="11.5,248.9 18.9,244.5 18.9,247.2 11.5,251.6" fill="#3b4049" /><polygon points="21.8,242.7 29.2,238.3 29.2,241.0 21.8,245.4" fill="#3b4049" /><polygon points="32.1,236.5 39.4,232.1 39.4,234.8 32.1,239.2" fill="#3b4049" /><polygon points="42.4,230.3 49.7,225.9 49.7,228.6 42.4,233.0" fill="#3b4049" /><polygon points="52.7,224.2 60.0,219.8 60.0,222.5 52.7,226.9" fill="#3b4049" /><polygon points="63.0,218.0 70.3,213.6 70.3,216.3 63.0,220.7" fill="#3b4049" /><polygon points="73.3,211.8 80.6,207.4 80.6,210.1 73.3,214.5" fill="#3b4049" /><polygon points="1.2,261.0 8.6,256.6 8.6,259.3 1.2,263.7" fill="#3b4049" /><polygon points="11.5,254.9 18.9,250.5 18.9,253.2 11.5,257.6" fill="#3b4049" /><polygon points="21.8,248.7 29.2,244.3 29.2,247.0 21.8,251.4" fill="#3b4049" /><polygon points="32.1,242.5 39.4,238.1 39.4,240.8 32.1,245.2" fill="#3b4049" /><polygon points="42.4,236.4 49.7,231.9 49.7,234.6 42.4,239.0" fill="#3b4049" /><polygon points="52.7,230.2 60.0,225.8 60.0,228.5 52.7,232.9" fill="#3b4049" /><polygon points="63.0,224.0 70.3,219.6 70.3,222.3 63.0,226.7" fill="#3b4049" /><polygon points="73.3,217.8 80.6,213.4 80.6,216.1 73.3,220.5" fill="#3b4049" /><polygon points="1.2,267.1 8.6,262.6 8.6,265.3 1.2,269.7" fill="#3b4049" /><polygon points="11.5,260.9 18.9,256.5 18.9,259.2 11.5,263.6" fill="#3b4049" /><polygon points="21.8,254.7 29.2,250.3 29.2,253.0 21.8,257.4" fill="#3b4049" /><polygon points="32.1,248.5 39.4,244.1 39.4,246.8 32.1,251.2" fill="#3b4049" /><polygon points="42.4,242.4 49.7,237.9 49.7,240.6 42.4,245.0" fill="#3b4049" /><polygon points="52.7,236.2 60.0,231.8 60.0,234.5 52.7,238.9" fill="#3b4049" /><polygon points="63.0,230.0 70.3,225.6 70.3,228.3 63.0,232.7" fill="#3b4049" /><polygon points="73.3,223.8 80.6,219.4 80.6,222.1 73.3,226.5" fill="#3b4049" /><polygon points="1.2,273.1 8.6,268.6 8.6,271.3 1.2,275.7" fill="#3b4049" /><polygon points="11.5,266.9 18.9,262.5 18.9,265.2 11.5,269.6" fill="#3b4049" /><polygon points="21.8,260.7 29.2,256.3 29.2,259.0 21.8,263.4" fill="#3b4049" /><polygon points="32.1,254.5 39.4,250.1 39.4,252.8 32.1,257.2" fill="#3b4049" /><polygon points="42.4,248.4 49.7,243.9 49.7,246.6 42.4,251.1" fill="#3b4049" /><polygon points="52.7,242.2 60.0,237.8 60.0,240.5 52.7,244.9" fill="#3b4049" /><polygon points="63.0,236.0 70.3,231.6 70.3,234.3 63.0,238.7" fill="#3b4049" /><polygon points="73.3,229.8 80.6,225.4 80.6,228.1 73.3,232.5" fill="#3b4049" /><polygon points="1.2,279.1 8.6,274.6 8.6,277.3 1.2,281.8" fill="#3b4049" /><polygon points="11.5,272.9 18.9,268.5 18.9,271.2 11.5,275.6" fill="#3b4049" /><polygon points="21.8,266.7 29.2,262.3 29.2,265.0 21.8,269.4" fill="#3b4049" /><polygon points="32.1,260.5 39.4,256.1 39.4,258.8 32.1,263.2" fill="#3b4049" /><polygon points="42.4,254.4 49.7,249.9 49.7,252.6 42.4,257.1" fill="#3b4049" /><polygon points="52.7,248.2 60.0,243.8 60.0,246.5 52.7,250.9" fill="#3b4049" /><polygon points="63.0,242.0 70.3,237.6 70.3,240.3 63.0,244.7" fill="#3b4049" /><polygon points="73.3,235.8 80.6,231.4 80.6,234.1 73.3,238.5" fill="#3b4049" /><polygon points="1.2,285.1 8.6,280.6 8.6,283.3 1.2,287.8" fill="#3b4049" /><polygon points="11.5,278.9 18.9,274.5 18.9,277.2 11.5,281.6" fill="#3b4049" /><polygon points="21.8,272.7 29.2,268.3 29.2,271.0 21.8,275.4" fill="#3b4049" /><polygon points="32.1,266.5 39.4,262.1 39.4,264.8 32.1,269.2" fill="#3b4049" /><polygon points="42.4,260.4 49.7,256.0 49.7,258.6 42.4,263.1" fill="#3b4049" /><polygon points="52.7,254.2 60.0,249.8 60.0,252.5 52.7,256.9" fill="#3b4049" /><polygon points="63.0,248.0 70.3,243.6 70.3,246.3 63.0,250.7" fill="#3b4049" /><polygon points="73.3,241.8 80.6,237.4 80.6,240.1 73.3,244.5" fill="#3b4049" /><polygon points="1.2,291.1 8.6,286.7 8.6,289.3 1.2,293.8" fill="#3b4049" /><polygon points="11.5,284.9 18.9,280.5 18.9,283.2 11.5,287.6" fill="#3b4049" /><polygon points="21.8,278.7 29.2,274.3 29.2,277.0 21.8,281.4" fill="#3b4049" /><polygon points="32.1,272.5 39.4,268.1 39.4,270.8 32.1,275.2" fill="#3b4049" /><polygon points="42.4,266.4 49.7,262.0 49.7,264.6 42.4,269.1" fill="#3b4049" /><polygon points="52.7,260.2 60.0,255.8 60.0,258.5 52.7,262.9" fill="#3b4049" /><polygon points="63.0,254.0 70.3,249.6 70.3,252.3 63.0,256.7" fill="#3b4049" /><polygon points="73.3,247.8 80.6,243.4 80.6,246.1 73.3,250.5" fill="#3b4049" /><polygon points="1.2,297.1 8.6,292.7 8.6,295.3 1.2,299.8" fill="#3b4049" /><polygon points="11.5,290.9 18.9,286.5 18.9,289.2 11.5,293.6" fill="#3b4049" /><polygon points="21.8,284.7 29.2,280.3 29.2,283.0 21.8,287.4" fill="#3b4049" /><polygon points="32.1,278.5 39.4,274.1 39.4,276.8 32.1,281.2" fill="#3b4049" /><polygon points="42.4,272.4 49.7,268.0 49.7,270.7 42.4,275.1" fill="#3b4049" /><polygon points="52.7,266.2 60.0,261.8 60.0,264.5 52.7,268.9" fill="#3b4049" /><polygon points="63.0,260.0 70.3,255.6 70.3,258.3 63.0,262.7" fill="#3b4049" /><polygon points="73.3,253.8 80.6,249.4 80.6,252.1 73.3,256.5" fill="#3b4049" /><polygon points="1.2,303.1 8.6,298.7 8.6,301.4 1.2,305.8" fill="#3b4049" /><polygon points="11.5,296.9 18.9,292.5 18.9,295.2 11.5,299.6" fill="#3b4049" /><polygon points="21.8,290.7 29.2,286.3 29.2,289.0 21.8,293.4" fill="#3b4049" /><polygon points="32.1,284.5 39.4,280.1 39.4,282.8 32.1,287.2" fill="#3b4049" /><polygon points="42.4,278.4 49.7,274.0 49.7,276.7 42.4,281.1" fill="#3b4049" /><polygon points="52.7,272.2 60.0,267.8 60.0,270.5 52.7,274.9" fill="#3b4049" /><polygon points="63.0,266.0 70.3,261.6 70.3,264.3 63.0,268.7" fill="#3b4049" /><polygon points="73.3,259.8 80.6,255.4 80.6,258.1 73.3,262.5" fill="#3b4049" /><polygon points="1.2,309.1 8.6,304.7 8.6,307.4 1.2,311.8" fill="#3b4049" /><polygon points="11.5,302.9 18.9,298.5 18.9,301.2 11.5,305.6" fill="#3b4049" /><polygon points="21.8,296.7 29.2,292.3 29.2,295.0 21.8,299.4" fill="#3b4049" /><polygon points="32.1,290.5 39.4,286.1 39.4,288.8 32.1,293.2" fill="#3b4049" /><polygon points="42.4,284.4 49.7,280.0 49.7,282.7 42.4,287.1" fill="#3b4049" /><polygon points="52.7,278.2 60.0,273.8 60.0,276.5 52.7,280.9" fill="#3b4049" /><polygon points="63.0,272.0 70.3,267.6 70.3,270.3 63.0,274.7" fill="#3b4049" /><polygon points="73.3,265.8 80.6,261.4 80.6,264.1 73.3,268.5" fill="#3b4049" /><polygon points="1.2,315.1 8.6,310.7 8.6,313.4 1.2,317.8" fill="#3b4049" /><polygon points="11.5,308.9 18.9,304.5 18.9,307.2 11.5,311.6" fill="#3b4049" /><polygon points="21.8,302.7 29.2,298.3 29.2,301.0 21.8,305.4" fill="#3b4049" /><polygon points="32.1,296.5 39.4,292.1 39.4,294.8 32.1,299.2" fill="#3b4049" /><polygon points="42.4,290.4 49.7,286.0 49.7,288.7 42.4,293.1" fill="#3b4049" /><polygon points="52.7,284.2 60.0,279.8 60.0,282.5 52.7,286.9" fill="#3b4049" /><polygon points="63.0,278.0 70.3,273.6 70.3,276.3 63.0,280.7" fill="#3b4049" /><polygon points="73.3,271.9 80.6,267.4 80.6,270.1 73.3,274.5" fill="#3b4049" /><polygon points="1.2,321.1 8.6,316.7 8.6,319.4 1.2,323.8" fill="#3b4049" /><polygon points="11.5,314.9 18.9,310.5 18.9,313.2 11.5,317.6" fill="#3b4049" /><polygon points="21.8,308.7 29.2,304.3 29.2,307.0 21.8,311.4" fill="#3b4049" /><polygon points="32.1,302.6 39.4,298.1 39.4,300.8 32.1,305.2" fill="#3b4049" /><polygon points="42.4,296.4 49.7,292.0 49.7,294.7 42.4,299.1" fill="#3b4049" /><polygon points="52.7,290.2 60.0,285.8 60.0,288.5 52.7,292.9" fill="#3b4049" /><polygon points="63.0,284.0 70.3,279.6 70.3,282.3 63.0,286.7" fill="#3b4049" /><polygon points="73.3,277.9 80.6,273.4 80.6,276.1 73.3,280.5" fill="#3b4049" /><polygon points="57.6,41.7 61.7,42.9 33.1,245.0 28.2,245.0" fill="#cfcfcd" /><polygon points="31.9,142.1 38.0,138.4 7.3,245.0 0.0,245.0" fill="#d3d3d1" /><polygon points="73.5,46.5 79.6,61.2 77.2,88.2 79.6,98.0 73.5,134.8 63.7,171.5 49.0,210.7 36.8,245.0 30.6,245.0 44.1,205.8 57.6,166.6 67.4,129.8 72.3,98.0 71.0,63.7" fill="#4a4e56" /></g><line x1="123.7" y1="66.2" x2="57.6" y2="210.7" stroke="#5f6f80" stroke-width="2.0" /><line x1="128.6" y1="66.2" x2="62.5" y2="210.7" stroke="#8090a2" stroke-width="1.0" /><line x1="120.0" y1="71.0" x2="53.9" y2="215.6" stroke="#8898a8" stroke-width="0.8" /><polygon points="55.1,208.2 66.2,205.8 56.4,242.6 49.0,242.6" fill="#6a7078" opacity="0.8"/><polygon points="143.3,17.2 160.5,17.2 153.1,245.0 109.0,245.0" fill="#b87868" opacity="0.40"/><line x1="143.3" y1="17.2" x2="109.0" y2="245.0" stroke="#9c4034" stroke-width="2.0" /><line x1="160.5" y1="17.2" x2="153.1" y2="245.0" stroke="#9c4034" stroke-width="2.0" /><line x1="151.9" y1="17.2" x2="131.1" y2="245.0" stroke="#c46a3c" stroke-width="2.2" /><line x1="143.3" y1="17.2" x2="151.2" y2="24.7" stroke="#98443a" stroke-width="0.8" /><line x1="151.9" y1="17.2" x2="142.2" y2="24.7" stroke="#a85446" stroke-width="0.8" /><line x1="151.9" y1="17.2" x2="160.2" y2="24.7" stroke="#98443a" stroke-width="0.8" /><line x1="160.5" y1="17.2" x2="151.2" y2="24.7" stroke="#a85446" stroke-width="0.8" /><line x1="143.3" y1="17.2" x2="160.5" y2="17.2" stroke="#8a2c24" stroke-width="0.8" /><line x1="142.2" y1="24.7" x2="150.5" y2="32.3" stroke="#98443a" stroke-width="0.8" /><line x1="151.2" y1="24.7" x2="141.0" y2="32.3" stroke="#a85446" stroke-width="0.8" /><line x1="151.2" y1="24.7" x2="160.0" y2="32.3" stroke="#98443a" stroke-width="0.8" /><line x1="160.2" y1="24.7" x2="150.5" y2="32.3" stroke="#a85446" stroke-width="0.8" /><line x1="142.2" y1="24.7" x2="160.2" y2="24.7" stroke="#8a2c24" stroke-width="0.8" /><line x1="141.0" y1="32.3" x2="149.8" y2="39.9" stroke="#98443a" stroke-width="0.9" /><line x1="150.5" y1="32.3" x2="139.9" y2="39.9" stroke="#a85446" stroke-width="0.9" /><line x1="150.5" y1="32.3" x2="159.7" y2="39.9" stroke="#98443a" stroke-width="0.9" /><line x1="160.0" y1="32.3" x2="149.8" y2="39.9" stroke="#a85446" stroke-width="0.9" /><line x1="141.0" y1="32.3" x2="160.0" y2="32.3" stroke="#8a2c24" stroke-width="0.8" /><line x1="139.9" y1="39.9" x2="149.1" y2="47.5" stroke="#98443a" stroke-width="0.9" /><line x1="149.8" y1="39.9" x2="138.8" y2="47.5" stroke="#a85446" stroke-width="0.9" /><line x1="149.8" y1="39.9" x2="159.5" y2="47.5" stroke="#98443a" stroke-width="0.9" /><line x1="159.7" y1="39.9" x2="149.1" y2="47.5" stroke="#a85446" stroke-width="0.9" /><line x1="139.9" y1="39.9" x2="159.7" y2="39.9" stroke="#8a2c24" stroke-width="0.8" /><line x1="138.8" y1="47.5" x2="148.4" y2="55.1" stroke="#98443a" stroke-width="0.9" /><line x1="149.1" y1="47.5" x2="137.6" y2="55.1" stroke="#a85446" stroke-width="0.9" /><line x1="149.1" y1="47.5" x2="159.2" y2="55.1" stroke="#98443a" stroke-width="0.9" /><line x1="159.5" y1="47.5" x2="148.4" y2="55.1" stroke="#a85446" stroke-width="0.9" /><line x1="138.8" y1="47.5" x2="159.5" y2="47.5" stroke="#8a2c24" stroke-width="0.8" /><line x1="137.6" y1="55.1" x2="147.7" y2="62.7" stroke="#98443a" stroke-width="1.0" /><line x1="148.4" y1="55.1" x2="136.5" y2="62.7" stroke="#a85446" stroke-width="1.0" /><line x1="148.4" y1="55.1" x2="159.0" y2="62.7" stroke="#98443a" stroke-width="1.0" /><line x1="159.2" y1="55.1" x2="147.7" y2="62.7" stroke="#a85446" stroke-width="1.0" /><line x1="137.6" y1="55.1" x2="159.2" y2="55.1" stroke="#8a2c24" stroke-width="0.8" /><line x1="136.5" y1="62.7" x2="147.0" y2="70.3" stroke="#98443a" stroke-width="1.0" /><line x1="147.7" y1="62.7" x2="135.3" y2="70.3" stroke="#a85446" stroke-width="1.0" /><line x1="147.7" y1="62.7" x2="158.8" y2="70.3" stroke="#98443a" stroke-width="1.0" /><line x1="159.0" y1="62.7" x2="147.0" y2="70.3" stroke="#a85446" stroke-width="1.0" /><line x1="136.5" y1="62.7" x2="159.0" y2="62.7" stroke="#8a2c24" stroke-width="0.8" /><line x1="135.3" y1="70.3" x2="146.3" y2="77.9" stroke="#98443a" stroke-width="1.0" /><line x1="147.0" y1="70.3" x2="134.2" y2="77.9" stroke="#a85446" stroke-width="1.0" /><line x1="147.0" y1="70.3" x2="158.5" y2="77.9" stroke="#98443a" stroke-width="1.0" /><line x1="158.8" y1="70.3" x2="146.3" y2="77.9" stroke="#a85446" stroke-width="1.0" /><line x1="135.3" y1="70.3" x2="158.8" y2="70.3" stroke="#8a2c24" stroke-width="0.8" /><line x1="134.2" y1="77.9" x2="145.7" y2="85.5" stroke="#98443a" stroke-width="1.1" /><line x1="146.3" y1="77.9" x2="133.0" y2="85.5" stroke="#a85446" stroke-width="1.1" /><line x1="146.3" y1="77.9" x2="158.3" y2="85.5" stroke="#98443a" stroke-width="1.1" /><line x1="158.5" y1="77.9" x2="145.7" y2="85.5" stroke="#a85446" stroke-width="1.1" /><line x1="134.2" y1="77.9" x2="158.5" y2="77.9" stroke="#8a2c24" stroke-width="0.8" /><line x1="133.0" y1="85.5" x2="145.0" y2="93.1" stroke="#98443a" stroke-width="1.1" /><line x1="145.7" y1="85.5" x2="131.9" y2="93.1" stroke="#a85446" stroke-width="1.1" /><line x1="145.7" y1="85.5" x2="158.0" y2="93.1" stroke="#98443a" stroke-width="1.1" /><line x1="158.3" y1="85.5" x2="145.0" y2="93.1" stroke="#a85446" stroke-width="1.1" /><line x1="133.0" y1="85.5" x2="158.3" y2="85.5" stroke="#8a2c24" stroke-width="0.8" /><line x1="131.9" y1="93.1" x2="144.3" y2="100.7" stroke="#98443a" stroke-width="1.1" /><line x1="145.0" y1="93.1" x2="130.7" y2="100.7" stroke="#a85446" stroke-width="1.1" /><line x1="145.0" y1="93.1" x2="157.8" y2="100.7" stroke="#98443a" stroke-width="1.1" /><line x1="158.0" y1="93.1" x2="144.3" y2="100.7" stroke="#a85446" stroke-width="1.1" /><line x1="131.9" y1="93.1" x2="158.0" y2="93.1" stroke="#8a2c24" stroke-width="0.8" /><line x1="130.7" y1="100.7" x2="143.6" y2="108.3" stroke="#98443a" stroke-width="1.2" /><line x1="144.3" y1="100.7" x2="129.6" y2="108.3" stroke="#a85446" stroke-width="1.2" /><line x1="144.3" y1="100.7" x2="157.5" y2="108.3" stroke="#98443a" stroke-width="1.2" /><line x1="157.8" y1="100.7" x2="143.6" y2="108.3" stroke="#a85446" stroke-width="1.2" /><line x1="130.7" y1="100.7" x2="157.8" y2="100.7" stroke="#8a2c24" stroke-width="0.8" /><line x1="129.6" y1="108.3" x2="142.9" y2="115.9" stroke="#98443a" stroke-width="1.2" /><line x1="143.6" y1="108.3" x2="128.5" y2="115.9" stroke="#a85446" stroke-width="1.2" /><line x1="143.6" y1="108.3" x2="157.3" y2="115.9" stroke="#98443a" stroke-width="1.2" /><line x1="157.5" y1="108.3" x2="142.9" y2="115.9" stroke="#a85446" stroke-width="1.2" /><line x1="129.6" y1="108.3" x2="157.5" y2="108.3" stroke="#8a2c24" stroke-width="0.8" /><line x1="128.5" y1="115.9" x2="142.2" y2="123.5" stroke="#98443a" stroke-width="1.2" /><line x1="142.9" y1="115.9" x2="127.3" y2="123.5" stroke="#a85446" stroke-width="1.2" /><line x1="142.9" y1="115.9" x2="157.0" y2="123.5" stroke="#98443a" stroke-width="1.2" /><line x1="157.3" y1="115.9" x2="142.2" y2="123.5" stroke="#a85446" stroke-width="1.2" /><line x1="128.5" y1="115.9" x2="157.3" y2="115.9" stroke="#8a2c24" stroke-width="0.8" /><line x1="127.3" y1="123.5" x2="141.5" y2="131.1" stroke="#98443a" stroke-width="1.3" /><line x1="142.2" y1="123.5" x2="126.2" y2="131.1" stroke="#a85446" stroke-width="1.3" /><line x1="142.2" y1="123.5" x2="156.8" y2="131.1" stroke="#98443a" stroke-width="1.3" /><line x1="157.0" y1="123.5" x2="141.5" y2="131.1" stroke="#a85446" stroke-width="1.3" /><line x1="127.3" y1="123.5" x2="157.0" y2="123.5" stroke="#8a2c24" stroke-width="0.8" /><line x1="126.2" y1="131.1" x2="140.8" y2="138.7" stroke="#98443a" stroke-width="1.3" /><line x1="141.5" y1="131.1" x2="125.0" y2="138.7" stroke="#a85446" stroke-width="1.3" /><line x1="141.5" y1="131.1" x2="156.6" y2="138.7" stroke="#98443a" stroke-width="1.3" /><line x1="156.8" y1="131.1" x2="140.8" y2="138.7" stroke="#a85446" stroke-width="1.3" /><line x1="126.2" y1="131.1" x2="156.8" y2="131.1" stroke="#8a2c24" stroke-width="0.8" /><line x1="125.0" y1="138.7" x2="140.1" y2="146.3" stroke="#98443a" stroke-width="1.3" /><line x1="140.8" y1="138.7" x2="123.9" y2="146.3" stroke="#a85446" stroke-width="1.3" /><line x1="140.8" y1="138.7" x2="156.3" y2="146.3" stroke="#98443a" stroke-width="1.3" /><line x1="156.6" y1="138.7" x2="140.1" y2="146.3" stroke="#a85446" stroke-width="1.3" /><line x1="125.0" y1="138.7" x2="156.6" y2="138.7" stroke="#8a2c24" stroke-width="0.8" /><line x1="123.9" y1="146.3" x2="139.4" y2="153.9" stroke="#98443a" stroke-width="1.4" /><line x1="140.1" y1="146.3" x2="122.7" y2="153.9" stroke="#a85446" stroke-width="1.4" /><line x1="140.1" y1="146.3" x2="156.1" y2="153.9" stroke="#98443a" stroke-width="1.4" /><line x1="156.3" y1="146.3" x2="139.4" y2="153.9" stroke="#a85446" stroke-width="1.4" /><line x1="123.9" y1="146.3" x2="156.3" y2="146.3" stroke="#8a2c24" stroke-width="0.8" /><line x1="122.7" y1="153.9" x2="138.7" y2="161.5" stroke="#98443a" stroke-width="1.4" /><line x1="139.4" y1="153.9" x2="121.6" y2="161.5" stroke="#a85446" stroke-width="1.4" /><line x1="139.4" y1="153.9" x2="155.8" y2="161.5" stroke="#98443a" stroke-width="1.4" /><line x1="156.1" y1="153.9" x2="138.7" y2="161.5" stroke="#a85446" stroke-width="1.4" /><line x1="122.7" y1="153.9" x2="156.1" y2="153.9" stroke="#8a2c24" stroke-width="0.8" /><line x1="121.6" y1="161.5" x2="138.0" y2="169.0" stroke="#98443a" stroke-width="1.4" /><line x1="138.7" y1="161.5" x2="120.5" y2="169.0" stroke="#a85446" stroke-width="1.4" /><line x1="138.7" y1="161.5" x2="155.6" y2="169.0" stroke="#98443a" stroke-width="1.4" /><line x1="155.8" y1="161.5" x2="138.0" y2="169.0" stroke="#a85446" stroke-width="1.4" /><line x1="121.6" y1="161.5" x2="155.8" y2="161.5" stroke="#8a2c24" stroke-width="0.8" /><line x1="120.5" y1="169.0" x2="137.3" y2="176.6" stroke="#98443a" stroke-width="1.5" /><line x1="138.0" y1="169.0" x2="119.3" y2="176.6" stroke="#a85446" stroke-width="1.5" /><line x1="138.0" y1="169.0" x2="155.3" y2="176.6" stroke="#98443a" stroke-width="1.5" /><line x1="155.6" y1="169.0" x2="137.3" y2="176.6" stroke="#a85446" stroke-width="1.5" /><line x1="120.5" y1="169.0" x2="155.6" y2="169.0" stroke="#8a2c24" stroke-width="0.8" /><line x1="119.3" y1="176.6" x2="136.6" y2="184.2" stroke="#98443a" stroke-width="1.5" /><line x1="137.3" y1="176.6" x2="118.2" y2="184.2" stroke="#a85446" stroke-width="1.5" /><line x1="137.3" y1="176.6" x2="155.1" y2="184.2" stroke="#98443a" stroke-width="1.5" /><line x1="155.3" y1="176.6" x2="136.6" y2="184.2" stroke="#a85446" stroke-width="1.5" /><line x1="119.3" y1="176.6" x2="155.3" y2="176.6" stroke="#8a2c24" stroke-width="0.8" /><line x1="118.2" y1="184.2" x2="135.9" y2="191.8" stroke="#98443a" stroke-width="1.5" /><line x1="136.6" y1="184.2" x2="117.0" y2="191.8" stroke="#a85446" stroke-width="1.5" /><line x1="136.6" y1="184.2" x2="154.8" y2="191.8" stroke="#98443a" stroke-width="1.5" /><line x1="155.1" y1="184.2" x2="135.9" y2="191.8" stroke="#a85446" stroke-width="1.5" /><line x1="118.2" y1="184.2" x2="155.1" y2="184.2" stroke="#8a2c24" stroke-width="0.8" /><line x1="117.0" y1="191.8" x2="135.2" y2="199.4" stroke="#98443a" stroke-width="1.6" /><line x1="135.9" y1="191.8" x2="115.9" y2="199.4" stroke="#a85446" stroke-width="1.6" /><line x1="135.9" y1="191.8" x2="154.6" y2="199.4" stroke="#98443a" stroke-width="1.6" /><line x1="154.8" y1="191.8" x2="135.2" y2="199.4" stroke="#a85446" stroke-width="1.6" /><line x1="117.0" y1="191.8" x2="154.8" y2="191.8" stroke="#8a2c24" stroke-width="0.8" /><line x1="115.9" y1="199.4" x2="134.5" y2="207.0" stroke="#98443a" stroke-width="1.6" /><line x1="135.2" y1="199.4" x2="114.7" y2="207.0" stroke="#a85446" stroke-width="1.6" /><line x1="135.2" y1="199.4" x2="154.3" y2="207.0" stroke="#98443a" stroke-width="1.6" /><line x1="154.6" y1="199.4" x2="134.5" y2="207.0" stroke="#a85446" stroke-width="1.6" /><line x1="115.9" y1="199.4" x2="154.6" y2="199.4" stroke="#8a2c24" stroke-width="0.8" /><line x1="114.7" y1="207.0" x2="133.9" y2="214.6" stroke="#98443a" stroke-width="1.6" /><line x1="134.5" y1="207.0" x2="113.6" y2="214.6" stroke="#a85446" stroke-width="1.6" /><line x1="134.5" y1="207.0" x2="154.1" y2="214.6" stroke="#98443a" stroke-width="1.6" /><line x1="154.3" y1="207.0" x2="133.9" y2="214.6" stroke="#a85446" stroke-width="1.6" /><line x1="114.7" y1="207.0" x2="154.3" y2="207.0" stroke="#8a2c24" stroke-width="0.8" /><line x1="113.6" y1="214.6" x2="133.2" y2="222.2" stroke="#98443a" stroke-width="1.7" /><line x1="133.9" y1="214.6" x2="112.5" y2="222.2" stroke="#a85446" stroke-width="1.7" /><line x1="133.9" y1="214.6" x2="153.9" y2="222.2" stroke="#98443a" stroke-width="1.7" /><line x1="154.1" y1="214.6" x2="133.2" y2="222.2" stroke="#a85446" stroke-width="1.7" /><line x1="113.6" y1="214.6" x2="154.1" y2="214.6" stroke="#8a2c24" stroke-width="0.8" /><line x1="112.5" y1="222.2" x2="132.5" y2="229.8" stroke="#98443a" stroke-width="1.7" /><line x1="133.2" y1="222.2" x2="111.3" y2="229.8" stroke="#a85446" stroke-width="1.7" /><line x1="133.2" y1="222.2" x2="153.6" y2="229.8" stroke="#98443a" stroke-width="1.7" /><line x1="153.9" y1="222.2" x2="132.5" y2="229.8" stroke="#a85446" stroke-width="1.7" /><line x1="112.5" y1="222.2" x2="153.9" y2="222.2" stroke="#8a2c24" stroke-width="0.8" /><line x1="111.3" y1="229.8" x2="131.8" y2="237.4" stroke="#98443a" stroke-width="1.7" /><line x1="132.5" y1="229.8" x2="110.2" y2="237.4" stroke="#a85446" stroke-width="1.7" /><line x1="132.5" y1="229.8" x2="153.4" y2="237.4" stroke="#98443a" stroke-width="1.7" /><line x1="153.6" y1="229.8" x2="131.8" y2="237.4" stroke="#a85446" stroke-width="1.7" /><line x1="111.3" y1="229.8" x2="153.6" y2="229.8" stroke="#8a2c24" stroke-width="0.8" /><line x1="110.2" y1="237.4" x2="131.1" y2="245.0" stroke="#98443a" stroke-width="1.8" /><line x1="131.8" y1="237.4" x2="109.0" y2="245.0" stroke="#a85446" stroke-width="1.8" /><line x1="131.8" y1="237.4" x2="153.1" y2="245.0" stroke="#98443a" stroke-width="1.8" /><line x1="153.4" y1="237.4" x2="131.1" y2="245.0" stroke="#a85446" stroke-width="1.8" /><line x1="110.2" y1="237.4" x2="153.4" y2="237.4" stroke="#8a2c24" stroke-width="0.8" /><polygon points="147.0,0.0 162.9,0.0 156.8,19.6 143.3,19.6" fill="#555c66" /><polygon points="128.6,29.4 144.5,18.4 147.0,49.0 129.8,50.2" fill="#7a8290" opacity="0.65"/><polygon points="158.0,20.8 167.8,24.5 166.6,49.0 156.8,52.7" fill="#9aa2b0" opacity="0.75"/><g clip-path="url(#c2r)"><rect x="0.0" y="0.0" width="245.0" height="245.0" fill="#3e3832" /><polygon points="153.1,106.6 176.4,102.9 176.4,245.0 153.1,245.0" fill="#2f2a27" /><polygon points="176.4,98.0 183.8,98.0 194.8,245.0 182.5,245.0" fill="#99938a" /><polygon points="153.1,107.8 158.0,107.8 158.0,245.0 153.1,245.0" fill="#8f8a82" /><polygon points="186.2,115.1 245.0,110.2 245.0,116.1 186.2,120.5" fill="#8d877c" /><polygon points="186.2,122.0 245.0,118.1 245.0,122.5 186.2,126.2" fill="#2a2522" /><polygon points="154.3,122.5 176.4,122.5 176.4,126.2 154.3,126.2" fill="#8f8a82" /><polygon points="186.2,128.2 245.0,122.8 245.0,128.7 186.2,133.6" fill="#8d877c" /><polygon points="186.2,135.0 245.0,130.6 245.0,135.0 186.2,139.2" fill="#2a2522" /><polygon points="154.3,135.5 176.4,135.5 176.4,139.2 154.3,139.2" fill="#8f8a82" /><polygon points="186.2,141.8 245.0,135.9 245.0,141.8 186.2,147.2" fill="#8d877c" /><polygon points="186.2,148.7 245.0,143.8 245.0,148.2 186.2,152.8" fill="#2a2522" /><polygon points="154.3,149.2 176.4,149.2 176.4,152.8 154.3,152.8" fill="#8f8a82" /><polygon points="186.2,156.0 245.0,149.6 245.0,155.5 186.2,161.4" fill="#8d877c" /><polygon points="186.2,162.9 245.0,157.5 245.0,161.9 186.2,167.0" fill="#2a2522" /><polygon points="154.3,163.4 176.4,163.4 176.4,167.0 154.3,167.0" fill="#8f8a82" /><polygon points="186.2,170.8 245.0,164.0 245.0,169.8 186.2,176.2" fill="#8d877c" /><polygon points="186.2,177.7 245.0,171.8 245.0,176.2 186.2,181.8" fill="#2a2522" /><polygon points="154.3,178.2 176.4,178.2 176.4,181.8 154.3,181.8" fill="#8f8a82" /><polygon points="186.2,186.2 245.0,178.8 245.0,184.7 186.2,191.6" fill="#8d877c" /><polygon points="186.2,193.1 245.0,186.7 245.0,191.1 186.2,197.2" fill="#2a2522" /><polygon points="154.3,193.6 176.4,193.6 176.4,197.2 154.3,197.2" fill="#8f8a82" /><polygon points="186.2,202.2 245.0,194.3 245.0,200.2 186.2,207.6" fill="#8d877c" /><polygon points="186.2,209.0 245.0,202.2 245.0,206.6 186.2,213.2" fill="#2a2522" /><polygon points="154.3,209.5 176.4,209.5 176.4,213.2 154.3,213.2" fill="#8f8a82" /><polygon points="186.2,218.7 245.0,210.4 245.0,216.3 186.2,224.1" fill="#8d877c" /><polygon points="186.2,225.6 245.0,218.2 245.0,222.7 186.2,229.8" fill="#2a2522" /><polygon points="154.3,226.1 176.4,226.1 176.4,229.8 154.3,229.8" fill="#8f8a82" /><polygon points="186.2,235.9 245.0,227.1 245.0,232.9 186.2,241.3" fill="#8d877c" /><polygon points="186.2,242.7 245.0,234.9 245.0,239.3 186.2,246.9" fill="#2a2522" /><polygon points="154.3,243.2 176.4,243.2 176.4,246.9 154.3,246.9" fill="#8f8a82" /><polygon points="186.2,253.6 245.0,244.3 245.0,250.2 186.2,259.0" fill="#8d877c" /><polygon points="186.2,260.5 245.0,252.2 245.0,256.6 186.2,264.6" fill="#2a2522" /><polygon points="154.3,261.0 176.4,261.0 176.4,264.6 154.3,264.6" fill="#8f8a82" /><polygon points="186.2,271.9 245.0,262.1 245.0,268.0 186.2,277.3" fill="#8d877c" /><polygon points="186.2,278.8 245.0,270.0 245.0,274.4 186.2,283.0" fill="#2a2522" /><polygon points="154.3,279.3 176.4,279.3 176.4,283.0 154.3,283.0" fill="#8f8a82" /><polygon points="191.1,82.1 245.0,76.0 245.0,100.4 191.1,105.3" fill="#5a4e46" /><line x1="196.0" y1="90.7" x2="196.0" y2="110.2" stroke="#3aa050" stroke-width="1.5" /></g><line x1="166.6" y1="80.9" x2="165.4" y2="73.1" stroke="#8f9aa8" stroke-width="0.8" /><line x1="177.6" y1="80.9" x2="176.4" y2="73.0" stroke="#8f9aa8" stroke-width="0.8" /><line x1="188.7" y1="80.9" x2="187.4" y2="64.3" stroke="#8f9aa8" stroke-width="0.8" /><line x1="199.7" y1="80.9" x2="198.5" y2="64.5" stroke="#8f9aa8" stroke-width="0.8" /><line x1="210.7" y1="80.9" x2="209.5" y2="71.9" stroke="#8f9aa8" stroke-width="0.8" /><line x1="221.7" y1="80.9" x2="220.5" y2="70.9" stroke="#8f9aa8" stroke-width="0.8" /><line x1="232.8" y1="80.9" x2="231.5" y2="70.3" stroke="#8f9aa8" stroke-width="0.8" /><line x1="243.8" y1="80.9" x2="242.6" y2="66.7" stroke="#8f9aa8" stroke-width="0.8" /><line x1="137.2" y1="156.8" x2="200.9" y2="191.1" stroke="#6a4a3a" stroke-width="1.5" /></g></svg><div class="a" style="left:978px;top:178px;width:248px;height:248px;border:1px solid #ddd;background:#fff"></div><svg class="a" style="left:980px;top:180px" width="245" height="246" viewBox="0 0 245 245" preserveAspectRatio="none"><defs><filter id="sf2" x="-5%" y="-5%" width="110%" height="110%"><feGaussianBlur stdDeviation="0.55"/></filter><linearGradient id="g3" x1="0" y1="0" x2="0" y2="1"><stop offset="0" stop-color="#69756b"/><stop offset="0.12" stop-color="#82887c"/><stop offset="0.22" stop-color="#a09c90"/><stop offset="0.6" stop-color="#a8a296"/><stop offset="1" stop-color="#8a8a84"/></linearGradient><filter id="b3"><feGaussianBlur stdDeviation="0.7"/></filter></defs><g filter="url(#sf2)"><rect x="-12" y="-12" width="269" height="269" fill="#9a968c"/><rect x="0.0" y="0.0" width="245.0" height="245.0" fill="url(#g3)" /><rect x="58.3" y="26.7" width="9.2" height="2.5" fill="#90948a" /><rect x="142.3" y="29.7" width="4.4" height="2.0" fill="#5f6c60" /><rect x="243.9" y="23.0" width="6.0" height="2.9" fill="#a0a49a" /><rect x="36.9" y="31.1" width="5.3" height="1.5" fill="#a0a49a" /><rect x="190.4" y="7.8" width="2.8" height="3.2" fill="#a0a49a" /><rect x="201.8" y="13.2" width="7.7" height="3.4" fill="#a0a49a" /><rect x="175.0" y="45.1" width="7.8" height="2.7" fill="#5f6c60" /><rect x="236.2" y="6.6" width="3.2" height="1.8" fill="#90948a" /><rect x="53.2" y="47.3" width="8.2" height="3.4" fill="#5f6c60" /><rect x="103.2" y="40.8" width="5.0" height="2.8" fill="#a0a49a" /><rect x="143.1" y="44.3" width="9.2" height="1.5" fill="#4c594f" /><rect x="68.5" y="29.7" width="3.6" height="3.4" fill="#4c594f" /><rect x="236.3" y="44.3" width="3.2" height="2.9" fill="#a0a49a" /><rect x="155.1" y="48.4" width="4.5" height="1.6" fill="#90948a" /><rect x="209.2" y="48.5" width="5.0" height="1.6" fill="#566458" /><rect x="219.8" y="1.0" width="8.1" height="3.4" fill="#5f6c60" /><rect x="10.8" y="30.1" width="5.2" height="2.8" fill="#566458" /><rect x="135.0" y="45.2" width="6.2" height="3.7" fill="#90948a" /><rect x="75.9" y="3.8" width="6.4" height="3.6" fill="#a0a49a" /><rect x="238.0" y="14.3" width="3.6" height="1.6" fill="#90948a" /><rect x="212.6" y="15.4" width="9.0" height="2.3" fill="#727d70" /><rect x="112.8" y="25.5" width="8.8" height="3.0" fill="#4c594f" /><rect x="25.1" y="47.7" width="4.4" height="2.9" fill="#a0a49a" /><rect x="175.3" y="45.9" width="9.6" height="2.6" fill="#5f6c60" /><rect x="134.4" y="0.6" width="9.7" height="2.2" fill="#5f6c60" /><rect x="92.2" y="28.9" width="2.9" height="2.9" fill="#727d70" /><rect x="114.2" y="33.3" width="6.9" height="2.1" fill="#90948a" /><rect x="119.9" y="28.9" width="2.6" height="2.3" fill="#4c594f" /><rect x="153.9" y="14.6" width="4.8" height="2.3" fill="#a0a49a" /><rect x="76.6" y="18.1" width="4.4" height="3.2" fill="#a0a49a" /><rect x="25.7" y="39.8" width="7.5" height="1.8" fill="#a0a49a" /><rect x="122.5" y="32.0" width="4.2" height="1.9" fill="#90948a" /><rect x="106.6" y="34.2" width="6.9" height="3.6" fill="#566458" /><rect x="165.4" y="11.0" width="3.0" height="3.1" fill="#727d70" /><rect x="53.4" y="27.9" width="4.1" height="1.7" fill="#90948a" /><rect x="129.8" y="9.3" width="3.8" height="2.1" fill="#a0a49a" /><rect x="197.8" y="31.5" width="5.0" height="1.8" fill="#a0a49a" /><rect x="71.5" y="38.9" width="5.9" height="2.9" fill="#90948a" /><rect x="71.1" y="27.8" width="9.2" height="1.8" fill="#566458" /><rect x="1.1" y="46.2" width="9.7" height="2.4" fill="#a0a49a" /><rect x="232.8" y="45.4" width="2.7" height="2.5" fill="#727d70" /><rect x="184.6" y="36.7" width="6.4" height="3.4" fill="#90948a" /><rect x="211.1" y="42.0" width="3.3" height="2.0" fill="#90948a" /><rect x="8.6" y="39.3" width="9.2" height="3.4" fill="#a0a49a" /><rect x="220.4" y="28.3" width="6.0" height="1.7" fill="#566458" /><rect x="123.3" y="11.7" width="6.3" height="2.4" fill="#566458" /><rect x="230.1" y="30.0" width="3.4" height="3.6" fill="#90948a" /><rect x="132.5" y="39.8" width="5.0" height="1.9" fill="#566458" /><rect x="131.0" y="40.0" width="4.2" height="2.1" fill="#727d70" /><rect x="218.0" y="6.3" width="6.0" height="2.7" fill="#566458" /><rect x="98.1" y="37.1" width="4.4" height="2.6" fill="#727d70" /><rect x="103.6" y="23.2" width="8.7" height="3.2" fill="#566458" /><rect x="11.3" y="2.4" width="9.6" height="3.4" fill="#5f6c60" /><rect x="21.1" y="24.6" width="3.6" height="1.6" fill="#90948a" /><rect x="94.5" y="19.1" width="5.1" height="1.9" fill="#90948a" /><rect x="80.6" y="6.1" width="2.5" height="3.1" fill="#a0a49a" /><rect x="194.8" y="27.8" width="5.2" height="2.8" fill="#566458" /><rect x="191.7" y="18.6" width="7.0" height="2.4" fill="#566458" /><rect x="91.2" y="24.3" width="4.8" height="3.6" fill="#4c594f" /><rect x="102.5" y="0.9" width="6.4" height="3.0" fill="#727d70" /><rect x="17.5" y="20.8" width="3.4" height="1.5" fill="#5f6c60" /><rect x="79.8" y="47.5" width="8.3" height="2.0" fill="#a0a49a" /><rect x="113.7" y="6.0" width="7.3" height="3.4" fill="#4c594f" /><rect x="194.2" y="32.7" width="4.8" height="2.6" fill="#4c594f" /><rect x="198.8" y="35.1" width="3.5" height="3.2" fill="#5f6c60" /><rect x="10.9" y="4.5" width="7.3" height="2.3" fill="#566458" /><rect x="200.8" y="16.7" width="2.6" height="1.7" fill="#566458" /><rect x="118.1" y="34.1" width="6.7" height="3.2" fill="#90948a" /><rect x="8.9" y="37.6" width="6.3" height="2.0" fill="#a0a49a" /><rect x="135.8" y="4.9" width="2.9" height="2.2" fill="#a0a49a" /><rect x="138.2" y="40.6" width="9.8" height="2.9" fill="#727d70" /><rect x="111.3" y="34.3" width="4.3" height="2.8" fill="#5f6c60" /><rect x="230.0" y="27.3" width="5.2" height="2.0" fill="#566458" /><rect x="227.7" y="41.3" width="5.5" height="2.7" fill="#727d70" /><rect x="142.1" y="45.3" width="6.0" height="2.9" fill="#4c594f" /><rect x="219.9" y="7.3" width="6.1" height="2.5" fill="#566458" /><rect x="171.2" y="46.6" width="7.7" height="1.9" fill="#a0a49a" /><rect x="65.5" y="9.8" width="6.2" height="3.5" fill="#a0a49a" /><rect x="208.6" y="26.4" width="7.4" height="3.4" fill="#90948a" /><rect x="145.8" y="28.6" width="9.0" height="2.1" fill="#90948a" /><rect x="65.7" y="39.4" width="3.7" height="2.3" fill="#727d70" /><rect x="78.9" y="37.9" width="5.5" height="3.0" fill="#727d70" /><rect x="171.9" y="10.1" width="8.6" height="3.3" fill="#a0a49a" /><rect x="136.5" y="23.6" width="3.0" height="3.6" fill="#4c594f" /><rect x="191.9" y="43.2" width="5.9" height="2.0" fill="#566458" /><rect x="57.5" y="35.2" width="3.0" height="1.9" fill="#4c594f" /><rect x="62.3" y="43.6" width="3.5" height="2.8" fill="#90948a" /><rect x="165.4" y="1.8" width="3.7" height="1.6" fill="#90948a" /><rect x="44.9" y="4.5" width="3.3" height="2.1" fill="#566458" /><rect x="223.9" y="1.8" width="6.7" height="3.0" fill="#5f6c60" /><rect x="1.7" y="16.4" width="5.2" height="1.6" fill="#5f6c60" /><rect x="157.9" y="36.4" width="5.3" height="2.7" fill="#5f6c60" /><rect x="29.2" y="13.5" width="5.6" height="2.4" fill="#4c594f" /><rect x="129.2" y="12.3" width="9.4" height="2.3" fill="#a0a49a" /><rect x="189.2" y="37.1" width="7.3" height="2.9" fill="#90948a" /><rect x="231.3" y="40.1" width="8.0" height="3.6" fill="#566458" /><rect x="164.8" y="26.3" width="7.4" height="2.6" fill="#566458" /><rect x="14.6" y="14.4" width="6.6" height="1.9" fill="#4c594f" /><rect x="158.2" y="30.9" width="5.2" height="3.5" fill="#727d70" /><rect x="111.3" y="5.3" width="3.5" height="2.2" fill="#a0a49a" /><rect x="176.5" y="29.3" width="4.7" height="1.9" fill="#a0a49a" /><rect x="118.2" y="38.3" width="3.0" height="3.0" fill="#4c594f" /><rect x="184.8" y="26.6" width="5.3" height="1.7" fill="#4c594f" /><rect x="66.4" y="2.6" width="2.8" height="2.6" fill="#727d70" /><rect x="60.6" y="37.7" width="8.9" height="3.6" fill="#90948a" /><rect x="109.8" y="39.6" width="5.0" height="3.3" fill="#566458" /><rect x="27.5" y="13.3" width="7.5" height="2.7" fill="#566458" /><rect x="222.9" y="5.5" width="3.8" height="2.4" fill="#4c594f" /><rect x="182.1" y="40.0" width="3.4" height="2.8" fill="#4c594f" /><rect x="210.6" y="39.1" width="6.3" height="2.7" fill="#a0a49a" /><rect x="49.5" y="12.3" width="2.7" height="3.2" fill="#90948a" /><rect x="218.3" y="46.5" width="4.8" height="3.5" fill="#5f6c60" /><rect x="75.9" y="24.4" width="7.5" height="2.1" fill="#a0a49a" /><rect x="210.7" y="23.7" width="3.9" height="2.9" fill="#a0a49a" /><rect x="26.3" y="37.0" width="6.1" height="2.6" fill="#727d70" /><rect x="112.8" y="9.5" width="4.0" height="3.3" fill="#a0a49a" /><rect x="226.9" y="46.4" width="6.6" height="3.6" fill="#566458" /><rect x="218.6" y="6.6" width="7.0" height="1.6" fill="#566458" /><rect x="88.2" y="11.4" width="6.1" height="1.5" fill="#566458" /><rect x="83.2" y="16.1" width="7.6" height="1.8" fill="#90948a" /><rect x="210.3" y="29.5" width="7.7" height="3.1" fill="#566458" /><rect x="84.2" y="39.5" width="8.8" height="2.4" fill="#566458" /><rect x="185.4" y="23.8" width="8.2" height="2.4" fill="#566458" /><rect x="207.1" y="34.6" width="6.1" height="3.0" fill="#5f6c60" /><rect x="131.7" y="20.7" width="6.0" height="1.5" fill="#4c594f" /><rect x="112.1" y="33.9" width="3.8" height="3.5" fill="#5f6c60" /><rect x="176.3" y="18.0" width="5.7" height="2.3" fill="#90948a" /><rect x="98.4" y="47.5" width="4.4" height="2.3" fill="#727d70" /><rect x="209.6" y="26.2" width="4.0" height="1.8" fill="#727d70" /><rect x="98.9" y="8.2" width="3.5" height="2.8" fill="#566458" /><rect x="108.5" y="9.1" width="5.4" height="2.2" fill="#566458" /><rect x="8.0" y="35.0" width="5.4" height="2.3" fill="#727d70" /><rect x="6.5" y="47.3" width="4.2" height="2.3" fill="#727d70" /><rect x="46.7" y="16.3" width="5.0" height="1.7" fill="#566458" /><rect x="12.7" y="35.7" width="9.7" height="3.5" fill="#90948a" /><rect x="193.4" y="47.1" width="4.3" height="2.1" fill="#5f6c60" /><rect x="199.6" y="30.8" width="4.8" height="1.6" fill="#90948a" /><rect x="106.7" y="4.4" width="2.5" height="1.5" fill="#a0a49a" /><rect x="22.2" y="8.3" width="6.0" height="1.9" fill="#566458" /><rect x="124.9" y="16.2" width="4.9" height="2.5" fill="#5f6c60" /><rect x="86.1" y="32.3" width="4.7" height="2.8" fill="#5f6c60" /><rect x="231.9" y="4.3" width="3.8" height="2.4" fill="#90948a" /><rect x="124.3" y="26.8" width="7.4" height="3.5" fill="#a0a49a" /><rect x="42.8" y="36.2" width="5.3" height="3.5" fill="#4c594f" /><rect x="88.0" y="9.0" width="5.7" height="2.5" fill="#5f6c60" /><rect x="172.2" y="16.9" width="6.2" height="3.1" fill="#727d70" /><rect x="224.2" y="34.1" width="2.8" height="1.8" fill="#5f6c60" /><rect x="184.2" y="40.3" width="8.0" height="3.0" fill="#566458" /><rect x="23.8" y="11.6" width="2.9" height="2.8" fill="#4c594f" /><rect x="11.8" y="22.9" width="7.2" height="3.7" fill="#4c594f" /><rect x="0.4" y="9.5" width="4.9" height="2.2" fill="#566458" /><rect x="110.3" y="40.3" width="4.2" height="1.6" fill="#727d70" /><rect x="37.4" y="31.6" width="9.7" height="1.7" fill="#a0a49a" /><rect x="70.4" y="10.2" width="6.2" height="2.6" fill="#a0a49a" /><rect x="222.3" y="15.6" width="8.2" height="2.5" fill="#a0a49a" /><rect x="152.5" y="2.0" width="6.8" height="3.4" fill="#566458" /><rect x="24.8" y="46.2" width="3.1" height="2.5" fill="#90948a" /><rect x="54.6" y="40.6" width="3.2" height="2.5" fill="#a0a49a" /><rect x="163.8" y="34.3" width="6.9" height="2.5" fill="#5f6c60" /><rect x="27.2" y="40.9" width="5.7" height="2.3" fill="#a0a49a" /><rect x="28.6" y="34.8" width="9.9" height="3.5" fill="#8a867c" /><rect x="84.8" y="67.5" width="11.6" height="7.6" fill="#c8c2b4" /><rect x="89.3" y="88.1" width="8.9" height="4.4" fill="#c8c2b4" /><rect x="85.9" y="102.6" width="5.7" height="6.0" fill="#8a867c" /><rect x="61.5" y="56.5" width="11.7" height="7.9" fill="#a09a8c" /><rect x="214.3" y="102.0" width="7.7" height="7.8" fill="#6f6c66" /><rect x="208.9" y="59.5" width="11.4" height="9.5" fill="#b4ae9e" /><rect x="118.6" y="87.4" width="7.7" height="7.0" fill="#d8d2c6" /><rect x="8.6" y="100.0" width="5.3" height="3.6" fill="#c8c2b4" /><rect x="177.0" y="54.5" width="4.2" height="6.2" fill="#6f6c66" /><rect x="47.7" y="48.5" width="7.4" height="5.3" fill="#d8d2c6" /><rect x="181.8" y="85.5" width="4.9" height="6.0" fill="#8a867c" /><rect x="222.6" y="64.7" width="5.0" height="8.2" fill="#b4ae9e" /><rect x="171.6" y="101.3" width="11.2" height="5.5" fill="#5a5852" /><rect x="39.5" y="55.7" width="7.7" height="9.8" fill="#d8d2c6" /><rect x="54.5" y="99.9" width="6.1" height="6.1" fill="#8a867c" /><rect x="217.3" y="89.7" width="10.1" height="9.3" fill="#8a867c" /><rect x="127.3" y="35.3" width="8.2" height="6.6" fill="#a09a8c" /><rect x="40.6" y="37.7" width="12.1" height="8.4" fill="#b4ae9e" /><rect x="86.9" y="100.5" width="12.1" height="3.2" fill="#8a867c" /><rect x="45.3" y="35.2" width="11.4" height="8.7" fill="#d8d2c6" /><rect x="147.9" y="90.0" width="6.3" height="4.6" fill="#d8d2c6" /><rect x="196.5" y="63.0" width="6.6" height="3.1" fill="#8a867c" /><rect x="9.1" y="102.6" width="11.5" height="8.5" fill="#b4ae9e" /><rect x="60.6" y="43.6" width="10.9" height="5.8" fill="#5a5852" /><rect x="183.9" y="57.4" width="6.1" height="4.1" fill="#b4ae9e" /><rect x="4.2" y="78.4" width="11.4" height="6.1" fill="#5a5852" /><rect x="163.0" y="98.0" width="12.1" height="6.5" fill="#5a5852" /><rect x="90.9" y="77.7" width="5.2" height="7.6" fill="#8a867c" /><rect x="243.1" y="71.8" width="10.3" height="6.0" fill="#d8d2c6" /><rect x="68.2" y="51.8" width="11.9" height="4.0" fill="#8a867c" /><rect x="77.2" y="70.1" width="7.8" height="4.5" fill="#d8d2c6" /><rect x="112.4" y="74.5" width="3.9" height="6.9" fill="#8a867c" /><rect x="134.7" y="67.7" width="10.4" height="8.1" fill="#8a867c" /><rect x="65.6" y="64.2" width="6.9" height="6.5" fill="#c8c2b4" /><rect x="219.4" y="100.2" width="7.5" height="5.1" fill="#a09a8c" /><rect x="84.7" y="79.2" width="7.1" height="3.3" fill="#5a5852" /><rect x="52.5" y="36.9" width="6.4" height="5.6" fill="#8a867c" /><rect x="69.1" y="43.3" width="7.2" height="9.1" fill="#8a867c" /><rect x="121.3" y="99.9" width="4.4" height="6.6" fill="#a09a8c" /><rect x="182.0" y="91.8" width="10.9" height="9.0" fill="#a09a8c" /><rect x="230.8" y="101.1" width="4.3" height="4.8" fill="#a09a8c" /><rect x="118.3" y="52.7" width="8.5" height="4.1" fill="#6f6c66" /><rect x="119.2" y="45.8" width="11.4" height="4.2" fill="#b4ae9e" /><rect x="243.2" y="80.6" width="3.7" height="5.6" fill="#a09a8c" /><rect x="44.2" y="77.3" width="5.3" height="8.6" fill="#8a867c" /><rect x="214.3" y="37.6" width="8.3" height="5.6" fill="#b4ae9e" /><rect x="26.2" y="61.0" width="6.1" height="3.8" fill="#c8c2b4" /><rect x="35.6" y="43.0" width="11.7" height="7.1" fill="#8a867c" /><rect x="229.0" y="34.8" width="12.2" height="9.7" fill="#8a867c" /><rect x="60.3" y="58.6" width="4.6" height="8.7" fill="#d8d2c6" /><rect x="115.8" y="85.0" width="10.1" height="8.3" fill="#6f6c66" /><rect x="139.4" y="66.1" width="6.3" height="4.0" fill="#6f6c66" /><rect x="111.8" y="60.6" width="8.8" height="9.3" fill="#5a5852" /><rect x="207.8" y="46.6" width="10.9" height="4.1" fill="#5a5852" /><rect x="65.1" y="48.2" width="8.9" height="3.3" fill="#c8c2b4" /><rect x="150.5" y="46.5" width="3.8" height="8.9" fill="#6f6c66" /><rect x="194.5" y="102.3" width="6.9" height="7.7" fill="#a09a8c" /><rect x="67.4" y="66.1" width="7.5" height="3.9" fill="#6f6c66" /><rect x="147.1" y="56.5" width="8.5" height="7.3" fill="#6f6c66" /><rect x="144.8" y="82.5" width="12.1" height="9.4" fill="#5a5852" /><rect x="211.2" y="91.6" width="12.0" height="5.0" fill="#8a867c" /><rect x="44.7" y="75.6" width="10.0" height="5.3" fill="#b4ae9e" /><rect x="158.1" y="53.7" width="7.6" height="6.2" fill="#8a867c" /><rect x="130.2" y="94.3" width="8.2" height="6.0" fill="#6f6c66" /><rect x="151.4" y="39.1" width="8.4" height="7.1" fill="#d8d2c6" /><rect x="71.3" y="50.5" width="7.0" height="9.7" fill="#d8d2c6" /><rect x="89.8" y="49.0" width="7.9" height="3.7" fill="#6f6c66" /><rect x="179.4" y="61.0" width="6.8" height="5.0" fill="#6f6c66" /><rect x="123.8" y="61.7" width="11.5" height="7.6" fill="#8a867c" /><rect x="25.5" y="68.3" width="5.6" height="5.5" fill="#8a867c" /><rect x="150.6" y="43.9" width="5.5" height="5.9" fill="#c8c2b4" /><rect x="48.2" y="36.2" width="11.6" height="6.6" fill="#a09a8c" /><rect x="180.7" y="91.1" width="10.5" height="4.4" fill="#5a5852" /><rect x="83.1" y="74.4" width="11.2" height="5.5" fill="#6f6c66" /><rect x="116.5" y="95.4" width="8.4" height="3.7" fill="#8a867c" /><rect x="42.5" y="94.8" width="3.9" height="5.3" fill="#d8d2c6" /><rect x="1.8" y="91.4" width="7.7" height="3.9" fill="#b4ae9e" /><rect x="49.9" y="77.9" width="9.1" height="7.5" fill="#6f6c66" /><rect x="106.9" y="41.0" width="9.6" height="3.5" fill="#a09a8c" /><rect x="108.2" y="86.0" width="4.2" height="3.0" fill="#8a867c" /><rect x="117.6" y="63.3" width="10.8" height="5.2" fill="#c8c2b4" /><rect x="102.6" y="74.3" width="5.4" height="5.6" fill="#8a867c" /><rect x="21.7" y="78.3" width="11.4" height="6.4" fill="#c8c2b4" /><rect x="58.7" y="91.2" width="5.7" height="6.2" fill="#b4ae9e" /><rect x="210.1" y="71.3" width="6.6" height="6.1" fill="#8a867c" /><rect x="235.3" y="49.8" width="6.2" height="9.1" fill="#6f6c66" /><rect x="32.6" y="70.8" width="8.1" height="5.1" fill="#6f6c66" /><rect x="210.7" y="74.4" width="10.0" height="4.3" fill="#a09a8c" /><rect x="14.7" y="64.0" width="9.1" height="6.3" fill="#8a867c" /><rect x="209.2" y="46.9" width="11.7" height="3.8" fill="#c8c2b4" /><rect x="223.8" y="61.5" width="6.4" height="8.1" fill="#b4ae9e" /><rect x="80.1" y="51.2" width="9.5" height="7.9" fill="#5a5852" /><rect x="58.0" y="59.5" width="5.2" height="4.7" fill="#b4ae9e" /><rect x="64.5" y="81.9" width="10.0" height="4.4" fill="#8a867c" /><rect x="74.4" y="46.2" width="5.8" height="7.7" fill="#b4ae9e" /><rect x="52.8" y="80.3" width="5.7" height="7.6" fill="#6f6c66" /><rect x="130.0" y="75.4" width="8.8" height="7.2" fill="#d8d2c6" /><rect x="108.4" y="38.1" width="8.3" height="6.1" fill="#5a5852" /><rect x="4.4" y="46.4" width="11.4" height="7.6" fill="#6f6c66" /><rect x="54.4" y="90.4" width="6.6" height="9.8" fill="#d8d2c6" /><rect x="118.4" y="46.6" width="7.3" height="8.9" fill="#a09a8c" /><rect x="35.3" y="56.3" width="8.2" height="8.8" fill="#8a867c" /><rect x="117.1" y="71.3" width="11.6" height="5.5" fill="#5a5852" /><rect x="10.3" y="58.1" width="5.4" height="3.6" fill="#a09a8c" /><rect x="186.5" y="72.2" width="8.7" height="7.6" fill="#8a867c" /><rect x="70.7" y="56.5" width="10.8" height="8.1" fill="#d8d2c6" /><rect x="71.4" y="35.0" width="8.5" height="8.2" fill="#a09a8c" /><rect x="103.6" y="59.7" width="5.8" height="7.7" fill="#b4ae9e" /><rect x="137.8" y="60.7" width="6.5" height="4.1" fill="#c8c2b4" /><rect x="224.2" y="67.6" width="7.1" height="4.3" fill="#6f6c66" /><rect x="100.0" y="73.8" width="9.9" height="7.1" fill="#c8c2b4" /><rect x="172.0" y="45.7" width="5.1" height="3.6" fill="#a09a8c" /><rect x="131.7" y="97.6" width="8.5" height="5.1" fill="#5a5852" /><rect x="67.2" y="67.2" width="6.4" height="9.4" fill="#a09a8c" /><rect x="28.7" y="99.3" width="6.9" height="4.0" fill="#d8d2c6" /><rect x="90.5" y="81.1" width="8.6" height="6.4" fill="#8a867c" /><rect x="48.9" y="49.6" width="10.5" height="8.0" fill="#8a867c" /><rect x="221.2" y="41.1" width="4.8" height="3.5" fill="#a09a8c" /><rect x="241.2" y="57.2" width="6.5" height="8.2" fill="#c8c2b4" /><rect x="40.5" y="80.1" width="12.2" height="3.9" fill="#8a867c" /><rect x="220.5" y="64.6" width="8.0" height="7.7" fill="#d8d2c6" /><rect x="104.8" y="89.5" width="6.2" height="4.8" fill="#8a867c" /><rect x="220.7" y="44.9" width="5.1" height="7.3" fill="#c8c2b4" /><rect x="51.8" y="86.3" width="9.9" height="4.4" fill="#6f6c66" /><rect x="171.1" y="78.5" width="4.0" height="6.8" fill="#8a867c" /><rect x="182.7" y="97.5" width="4.7" height="4.4" fill="#b4ae9e" /><rect x="234.0" y="39.4" width="10.0" height="4.0" fill="#d8d2c6" /><rect x="133.3" y="80.2" width="9.9" height="4.7" fill="#6f6c66" /><rect x="21.3" y="39.8" width="4.9" height="3.0" fill="#a09a8c" /><rect x="20.3" y="88.2" width="9.7" height="6.7" fill="#d8d2c6" /><rect x="162.5" y="64.7" width="9.7" height="3.0" fill="#b4ae9e" /><rect x="69.0" y="82.2" width="3.7" height="5.2" fill="#b4ae9e" /><rect x="178.0" y="91.5" width="4.5" height="8.4" fill="#8a867c" /><rect x="95.2" y="89.6" width="11.7" height="7.9" fill="#d8d2c6" /><rect x="153.7" y="64.6" width="10.5" height="5.3" fill="#b4ae9e" /><rect x="56.3" y="62.8" width="7.1" height="9.7" fill="#c8c2b4" /><rect x="28.1" y="80.0" width="6.2" height="3.1" fill="#b4ae9e" /><rect x="6.5" y="57.6" width="7.6" height="6.4" fill="#b4ae9e" /><rect x="156.8" y="101.9" width="9.4" height="8.0" fill="#d8d2c6" /><rect x="127.8" y="63.6" width="10.5" height="4.2" fill="#8a867c" /><rect x="110.7" y="70.7" width="11.6" height="6.9" fill="#8a867c" /><rect x="152.8" y="64.4" width="6.3" height="6.5" fill="#b4ae9e" /><rect x="55.4" y="70.4" width="4.7" height="6.4" fill="#8a867c" /><rect x="117.5" y="51.3" width="7.2" height="3.0" fill="#5a5852" /><rect x="116.0" y="34.6" width="8.0" height="6.2" fill="#a09a8c" /><rect x="3.3" y="57.9" width="6.3" height="6.2" fill="#8a867c" /><rect x="73.6" y="55.2" width="6.3" height="6.8" fill="#b4ae9e" /><rect x="99.4" y="78.9" width="11.9" height="4.3" fill="#c8c2b4" /><rect x="20.5" y="85.4" width="10.1" height="7.9" fill="#6f6c66" /><rect x="34.0" y="91.6" width="19.1" height="17.2" fill="#bdb7a8" /><rect x="47.4" y="91.6" width="5.7" height="17.2" fill="#00000030" /><rect x="1.5" y="81.0" width="15.6" height="32.5" fill="#a8a296" /><rect x="12.5" y="81.0" width="4.7" height="32.5" fill="#00000030" /><rect x="163.4" y="110.2" width="16.9" height="20.4" fill="#6a6862" /><rect x="175.2" y="110.2" width="5.1" height="20.4" fill="#00000030" /><rect x="147.4" y="76.7" width="11.1" height="27.9" fill="#8f8b82" /><rect x="155.2" y="76.7" width="3.3" height="27.9" fill="#00000030" /><rect x="192.7" y="155.9" width="9.9" height="12.2" fill="#8f8b82" /><rect x="199.7" y="155.9" width="3.0" height="12.2" fill="#00000030" /><rect x="182.2" y="179.0" width="13.2" height="14.8" fill="#6a6862" /><rect x="191.4" y="179.0" width="4.0" height="14.8" fill="#00000030" /><rect x="147.0" y="146.6" width="19.6" height="11.0" fill="#a8a296" /><rect x="160.7" y="146.6" width="5.9" height="11.0" fill="#00000030" /><rect x="59.2" y="93.5" width="8.6" height="14.2" fill="#bdb7a8" /><rect x="65.1" y="93.5" width="2.6" height="14.2" fill="#00000030" /><rect x="110.8" y="121.1" width="12.5" height="23.9" fill="#a8a296" /><rect x="119.5" y="121.1" width="3.8" height="23.9" fill="#00000030" /><rect x="105.6" y="77.9" width="16.3" height="28.2" fill="#6a6862" /><rect x="117.0" y="77.9" width="4.9" height="28.2" fill="#00000030" /><rect x="221.5" y="116.7" width="13.8" height="13.2" fill="#e2ded4" /><rect x="231.2" y="116.7" width="4.1" height="13.2" fill="#00000030" /><rect x="187.6" y="76.9" width="12.4" height="30.5" fill="#a8a296" /><rect x="196.3" y="76.9" width="3.7" height="30.5" fill="#00000030" /><rect x="117.2" y="115.2" width="13.5" height="20.4" fill="#e2ded4" /><rect x="126.6" y="115.2" width="4.1" height="20.4" fill="#00000030" /><rect x="116.2" y="79.9" width="14.2" height="13.8" fill="#d6d0c2" /><rect x="126.2" y="79.9" width="4.3" height="13.8" fill="#00000030" /><rect x="47.6" y="171.7" width="17.2" height="27.3" fill="#b0aa9c" /><rect x="59.6" y="171.7" width="5.1" height="27.3" fill="#00000030" /><rect x="97.0" y="130.0" width="8.8" height="12.4" fill="#e2ded4" /><rect x="103.2" y="130.0" width="2.6" height="12.4" fill="#00000030" /><rect x="232.0" y="105.8" width="17.8" height="32.0" fill="#a8a296" /><rect x="244.5" y="105.8" width="5.3" height="32.0" fill="#00000030" /><rect x="243.0" y="90.9" width="15.8" height="25.2" fill="#4a4a48" /><rect x="254.1" y="90.9" width="4.7" height="25.2" fill="#00000030" /><rect x="77.3" y="122.3" width="18.7" height="16.0" fill="#d6d0c2" /><rect x="90.4" y="122.3" width="5.6" height="16.0" fill="#00000030" /><rect x="144.7" y="111.3" width="14.1" height="15.0" fill="#c4beb0" /><rect x="154.6" y="111.3" width="4.2" height="15.0" fill="#00000030" /><rect x="69.1" y="83.0" width="18.2" height="15.8" fill="#e2ded4" /><rect x="81.8" y="83.0" width="5.5" height="15.8" fill="#00000030" /><rect x="213.6" y="110.3" width="16.4" height="12.1" fill="#bdb7a8" /><rect x="225.1" y="110.3" width="4.9" height="12.1" fill="#00000030" /><rect x="74.3" y="97.3" width="14.0" height="23.5" fill="#a8a296" /><rect x="84.1" y="97.3" width="4.2" height="23.5" fill="#00000030" /><rect x="0.4" y="144.6" width="17.3" height="15.7" fill="#b0aa9c" /><rect x="12.6" y="144.6" width="5.2" height="15.7" fill="#00000030" /><rect x="184.5" y="163.9" width="8.2" height="15.9" fill="#e2ded4" /><rect x="190.3" y="163.9" width="2.5" height="15.9" fill="#00000030" /><rect x="71.2" y="111.5" width="10.0" height="14.7" fill="#bdb7a8" /><rect x="78.2" y="111.5" width="3.0" height="14.7" fill="#00000030" /><rect x="191.4" y="123.6" width="10.4" height="22.9" fill="#a8a296" /><rect x="198.7" y="123.6" width="3.1" height="22.9" fill="#00000030" /><rect x="65.0" y="105.3" width="18.9" height="14.7" fill="#e2ded4" /><rect x="78.3" y="105.3" width="5.7" height="14.7" fill="#00000030" /><rect x="76.2" y="146.8" width="8.7" height="31.8" fill="#a8a296" /><rect x="82.3" y="146.8" width="2.6" height="31.8" fill="#00000030" /><rect x="175.3" y="161.1" width="16.9" height="15.6" fill="#c4beb0" /><rect x="187.1" y="161.1" width="5.1" height="15.6" fill="#00000030" /><rect x="148.9" y="87.0" width="9.5" height="17.6" fill="#b0aa9c" /><rect x="155.6" y="87.0" width="2.8" height="17.6" fill="#00000030" /><rect x="54.8" y="78.7" width="16.9" height="24.7" fill="#c4beb0" /><rect x="66.6" y="78.7" width="5.1" height="24.7" fill="#00000030" /><rect x="99.7" y="110.3" width="10.9" height="21.7" fill="#4a4a48" /><rect x="107.3" y="110.3" width="3.3" height="21.7" fill="#00000030" /><rect x="244.6" y="92.1" width="7.4" height="29.0" fill="#6a6862" /><rect x="249.7" y="92.1" width="2.2" height="29.0" fill="#00000030" /><rect x="207.7" y="126.3" width="12.0" height="22.4" fill="#4a4a48" /><rect x="216.1" y="126.3" width="3.6" height="22.4" fill="#00000030" /><rect x="92.0" y="113.4" width="11.8" height="10.1" fill="#bdb7a8" /><rect x="100.2" y="113.4" width="3.5" height="10.1" fill="#00000030" /><rect x="80.8" y="135.7" width="13.9" height="10.1" fill="#c4beb0" /><rect x="90.6" y="135.7" width="4.2" height="10.1" fill="#00000030" /><rect x="175.3" y="94.0" width="19.4" height="12.6" fill="#b0aa9c" /><rect x="188.8" y="94.0" width="5.8" height="12.6" fill="#00000030" /><rect x="42.9" y="161.2" width="10.5" height="11.7" fill="#bdb7a8" /><rect x="50.3" y="161.2" width="3.2" height="11.7" fill="#00000030" /><rect x="1.1" y="97.9" width="11.4" height="10.2" fill="#d6d0c2" /><rect x="9.1" y="97.9" width="3.4" height="10.2" fill="#00000030" /><rect x="241.0" y="91.7" width="15.2" height="22.1" fill="#6a6862" /><rect x="251.6" y="91.7" width="4.6" height="22.1" fill="#00000030" /><rect x="182.3" y="161.2" width="19.6" height="26.4" fill="#bdb7a8" /><rect x="196.0" y="161.2" width="5.9" height="26.4" fill="#00000030" /><rect x="181.6" y="85.5" width="16.7" height="26.1" fill="#e2ded4" /><rect x="193.3" y="85.5" width="5.0" height="26.1" fill="#00000030" /><rect x="203.4" y="104.4" width="15.5" height="10.5" fill="#e2ded4" /><rect x="214.3" y="104.4" width="4.6" height="10.5" fill="#00000030" /><rect x="12.1" y="122.0" width="8.9" height="31.6" fill="#e2ded4" /><rect x="18.3" y="122.0" width="2.7" height="31.6" fill="#00000030" /><rect x="79.9" y="122.6" width="19.3" height="17.2" fill="#6a6862" /><rect x="93.5" y="122.6" width="5.8" height="17.2" fill="#00000030" /><rect x="171.1" y="75.1" width="9.7" height="22.9" fill="#d6d0c2" /><rect x="177.8" y="75.1" width="2.9" height="22.9" fill="#00000030" /><rect x="53.2" y="138.2" width="8.9" height="30.5" fill="#4a4a48" /><rect x="59.4" y="138.2" width="2.7" height="30.5" fill="#00000030" /><rect x="127.3" y="118.7" width="13.1" height="25.0" fill="#8f8b82" /><rect x="136.5" y="118.7" width="3.9" height="25.0" fill="#00000030" /><rect x="210.6" y="104.5" width="10.2" height="13.8" fill="#6a6862" /><rect x="217.7" y="104.5" width="3.1" height="13.8" fill="#00000030" /><rect x="107.3" y="116.5" width="13.7" height="26.9" fill="#6a6862" /><rect x="116.9" y="116.5" width="4.1" height="26.9" fill="#00000030" /><rect x="71.5" y="111.5" width="16.5" height="14.0" fill="#6a6862" /><rect x="83.1" y="111.5" width="5.0" height="14.0" fill="#00000030" /><rect x="18.0" y="175.8" width="16.3" height="24.4" fill="#a8a296" /><rect x="29.4" y="175.8" width="4.9" height="24.4" fill="#00000030" /><rect x="236.6" y="129.8" width="17.4" height="32.4" fill="#6a6862" /><rect x="248.8" y="129.8" width="5.2" height="32.4" fill="#00000030" /><rect x="1.9" y="154.4" width="12.7" height="11.1" fill="#4a4a48" /><rect x="10.8" y="154.4" width="3.8" height="11.1" fill="#00000030" /><rect x="129.8" y="164.5" width="10.4" height="31.6" fill="#bdb7a8" /><rect x="137.1" y="164.5" width="3.1" height="31.6" fill="#00000030" /><rect x="128.1" y="127.7" width="17.5" height="14.5" fill="#8f8b82" /><rect x="140.4" y="127.7" width="5.3" height="14.5" fill="#00000030" /><rect x="21.4" y="149.7" width="17.3" height="29.0" fill="#a8a296" /><rect x="33.5" y="149.7" width="5.2" height="29.0" fill="#00000030" /><rect x="174.3" y="95.8" width="10.6" height="13.1" fill="#bdb7a8" /><rect x="181.7" y="95.8" width="3.2" height="13.1" fill="#00000030" /><rect x="222.3" y="102.4" width="19.5" height="32.7" fill="#e2ded4" /><rect x="235.9" y="102.4" width="5.8" height="32.7" fill="#00000030" /><rect x="111.5" y="135.9" width="10.9" height="26.0" fill="#bdb7a8" /><rect x="119.1" y="135.9" width="3.3" height="26.0" fill="#00000030" /><rect x="164.4" y="73.7" width="12.7" height="21.8" fill="#d6d0c2" /><rect x="173.4" y="73.7" width="3.8" height="21.8" fill="#00000030" /><rect x="223.5" y="143.7" width="16.9" height="14.2" fill="#4a4a48" /><rect x="235.4" y="143.7" width="5.1" height="14.2" fill="#00000030" /><rect x="143.3" y="128.2" width="17.9" height="22.5" fill="#6a6862" /><rect x="155.8" y="128.2" width="5.4" height="22.5" fill="#00000030" /><rect x="59.0" y="95.7" width="7.8" height="31.4" fill="#c4beb0" /><rect x="64.4" y="95.7" width="2.3" height="31.4" fill="#00000030" /><rect x="85.1" y="74.3" width="7.8" height="13.7" fill="#c4beb0" /><rect x="90.6" y="74.3" width="2.3" height="13.7" fill="#00000030" /><rect x="41.8" y="113.7" width="17.4" height="21.5" fill="#bdb7a8" /><rect x="54.1" y="113.7" width="5.2" height="21.5" fill="#00000030" /><rect x="155.4" y="80.3" width="16.6" height="15.4" fill="#6a6862" /><rect x="167.0" y="80.3" width="5.0" height="15.4" fill="#00000030" /><rect x="34.8" y="105.0" width="10.4" height="30.9" fill="#6a6862" /><rect x="42.0" y="105.0" width="3.1" height="30.9" fill="#00000030" /><rect x="142.0" y="89.9" width="12.6" height="27.0" fill="#d6d0c2" /><rect x="150.8" y="89.9" width="3.8" height="27.0" fill="#00000030" /><rect x="113.6" y="117.9" width="7.6" height="25.7" fill="#c4beb0" /><rect x="118.9" y="117.9" width="2.3" height="25.7" fill="#00000030" /><rect x="238.9" y="102.9" width="11.1" height="12.8" fill="#b0aa9c" /><rect x="246.7" y="102.9" width="3.3" height="12.8" fill="#00000030" /><rect x="236.0" y="161.5" width="12.3" height="10.9" fill="#a8a296" /><rect x="244.6" y="161.5" width="3.7" height="10.9" fill="#00000030" /><rect x="186.1" y="149.2" width="17.7" height="10.8" fill="#8f8b82" /><rect x="198.5" y="149.2" width="5.3" height="10.8" fill="#00000030" /><rect x="230.7" y="93.8" width="18.5" height="18.3" fill="#a8a296" /><rect x="243.7" y="93.8" width="5.5" height="18.3" fill="#00000030" /><rect x="181.3" y="175.9" width="15.9" height="18.5" fill="#bdb7a8" /><rect x="192.4" y="175.9" width="4.8" height="18.5" fill="#00000030" /><rect x="57.0" y="178.3" width="12.0" height="26.8" fill="#8f8b82" /><rect x="65.4" y="178.3" width="3.6" height="26.8" fill="#00000030" /><rect x="150.6" y="98.7" width="18.2" height="9.8" fill="#b0aa9c" /><rect x="163.3" y="98.7" width="5.4" height="9.8" fill="#00000030" /><rect x="119.0" y="95.0" width="14.3" height="21.4" fill="#bdb7a8" /><rect x="129.0" y="95.0" width="4.3" height="21.4" fill="#00000030" /><rect x="143.7" y="169.6" width="18.2" height="13.8" fill="#a8a296" /><rect x="156.4" y="169.6" width="5.5" height="13.8" fill="#00000030" /><rect x="204.2" y="182.7" width="16.7" height="19.4" fill="#e2ded4" /><rect x="215.8" y="182.7" width="5.0" height="19.4" fill="#00000030" /><rect x="92.5" y="85.2" width="18.0" height="26.0" fill="#6a6862" /><rect x="105.1" y="85.2" width="5.4" height="26.0" fill="#00000030" /><rect x="202.3" y="112.8" width="11.1" height="32.0" fill="#a8a296" /><rect x="210.1" y="112.8" width="3.3" height="32.0" fill="#00000030" /><rect x="158.1" y="158.8" width="9.2" height="18.2" fill="#c4beb0" /><rect x="164.6" y="158.8" width="2.8" height="18.2" fill="#00000030" /><rect x="70.0" y="181.5" width="18.2" height="28.4" fill="#8f8b82" /><rect x="82.7" y="181.5" width="5.5" height="28.4" fill="#00000030" /><rect x="178.2" y="94.8" width="15.9" height="19.6" fill="#e2ded4" /><rect x="189.3" y="94.8" width="4.8" height="19.6" fill="#00000030" /><rect x="159.7" y="97.3" width="10.2" height="31.1" fill="#8f8b82" /><rect x="166.8" y="97.3" width="3.1" height="31.1" fill="#00000030" /><rect x="109.9" y="145.0" width="16.6" height="33.9" fill="#c4beb0" /><rect x="121.5" y="145.0" width="5.0" height="33.9" fill="#00000030" /><rect x="125.8" y="179.0" width="7.6" height="31.3" fill="#a8a296" /><rect x="131.1" y="179.0" width="2.3" height="31.3" fill="#00000030" /><rect x="209.0" y="77.0" width="17.1" height="25.1" fill="#8f8b82" /><rect x="220.9" y="77.0" width="5.1" height="25.1" fill="#00000030" /><rect x="76.4" y="112.8" width="16.5" height="13.0" fill="#b0aa9c" /><rect x="87.9" y="112.8" width="4.9" height="13.0" fill="#00000030" /><rect x="197.1" y="125.6" width="16.6" height="19.2" fill="#bdb7a8" /><rect x="208.8" y="125.6" width="5.0" height="19.2" fill="#00000030" /><rect x="58.8" y="148.1" width="14.5" height="29.0" fill="#4a4a48" /><rect x="69.0" y="148.1" width="4.4" height="29.0" fill="#00000030" /><rect x="20.4" y="163.8" width="7.5" height="23.6" fill="#4a4a48" /><rect x="25.6" y="163.8" width="2.2" height="23.6" fill="#00000030" /><rect x="213.4" y="135.1" width="12.7" height="12.6" fill="#a8a296" /><rect x="222.3" y="135.1" width="3.8" height="12.6" fill="#00000030" /><rect x="77.0" y="163.3" width="11.7" height="31.8" fill="#a8a296" /><rect x="85.2" y="163.3" width="3.5" height="31.8" fill="#00000030" /><rect x="209.6" y="124.7" width="9.7" height="26.5" fill="#4a4a48" /><rect x="216.4" y="124.7" width="2.9" height="26.5" fill="#00000030" /><rect x="188.9" y="86.2" width="14.0" height="30.8" fill="#bdb7a8" /><rect x="198.7" y="86.2" width="4.2" height="30.8" fill="#00000030" /><rect x="85.3" y="157.1" width="17.5" height="24.0" fill="#6a6862" /><rect x="97.5" y="157.1" width="5.2" height="24.0" fill="#00000030" /><rect x="211.9" y="78.9" width="8.3" height="23.9" fill="#b0aa9c" /><rect x="217.6" y="78.9" width="2.5" height="23.9" fill="#00000030" /><rect x="48.1" y="98.3" width="17.1" height="14.7" fill="#b0aa9c" /><rect x="60.0" y="98.3" width="5.1" height="14.7" fill="#00000030" /><rect x="130.7" y="83.0" width="12.2" height="22.1" fill="#d6d0c2" /><rect x="139.2" y="83.0" width="3.7" height="22.1" fill="#00000030" /><rect x="220.2" y="163.9" width="9.9" height="29.0" fill="#a8a296" /><rect x="227.1" y="163.9" width="3.0" height="29.0" fill="#00000030" /><rect x="191.2" y="85.5" width="8.4" height="11.5" fill="#8f8b82" /><rect x="197.1" y="85.5" width="2.5" height="11.5" fill="#00000030" /><rect x="165.0" y="167.0" width="9.6" height="14.3" fill="#6a6862" /><rect x="171.7" y="167.0" width="2.9" height="14.3" fill="#00000030" /><rect x="17.7" y="127.1" width="15.4" height="13.3" fill="#e2ded4" /><rect x="28.5" y="127.1" width="4.6" height="13.3" fill="#00000030" /><rect x="157.9" y="104.1" width="18.2" height="11.3" fill="#e2ded4" /><rect x="170.6" y="104.1" width="5.5" height="11.3" fill="#00000030" /><rect x="152.4" y="164.2" width="11.7" height="11.5" fill="#b0aa9c" /><rect x="160.6" y="164.2" width="3.5" height="11.5" fill="#00000030" /><rect x="39.1" y="141.9" width="12.8" height="28.7" fill="#e2ded4" /><rect x="48.1" y="141.9" width="3.9" height="28.7" fill="#00000030" /><rect x="215.1" y="167.9" width="17.6" height="23.4" fill="#6a6862" /><rect x="227.4" y="167.9" width="5.3" height="23.4" fill="#00000030" /><rect x="170.9" y="135.0" width="12.6" height="10.4" fill="#c4beb0" /><rect x="179.7" y="135.0" width="3.8" height="10.4" fill="#00000030" /><rect x="107.3" y="128.9" width="10.2" height="19.7" fill="#b0aa9c" /><rect x="114.5" y="128.9" width="3.1" height="19.7" fill="#00000030" /><rect x="55.4" y="171.2" width="19.1" height="16.4" fill="#b0aa9c" /><rect x="68.8" y="171.2" width="5.7" height="16.4" fill="#00000030" /><rect x="114.8" y="168.8" width="18.3" height="33.9" fill="#d6d0c2" /><rect x="127.6" y="168.8" width="5.5" height="33.9" fill="#00000030" /><rect x="147.5" y="86.1" width="10.2" height="20.1" fill="#b0aa9c" /><rect x="154.7" y="86.1" width="3.1" height="20.1" fill="#00000030" /><rect x="21.8" y="175.8" width="7.7" height="33.6" fill="#e2ded4" /><rect x="27.2" y="175.8" width="2.3" height="33.6" fill="#00000030" /><rect x="79.3" y="140.4" width="18.5" height="17.9" fill="#4a4a48" /><rect x="92.2" y="140.4" width="5.5" height="17.9" fill="#00000030" /><rect x="71.5" y="165.3" width="8.7" height="31.5" fill="#d6d0c2" /><rect x="77.6" y="165.3" width="2.6" height="31.5" fill="#00000030" /><rect x="5.1" y="113.1" width="7.8" height="14.2" fill="#c4beb0" /><rect x="10.5" y="113.1" width="2.3" height="14.2" fill="#00000030" /><rect x="6.7" y="104.5" width="16.0" height="34.0" fill="#d6d0c2" /><rect x="17.9" y="104.5" width="4.8" height="34.0" fill="#00000030" /><polygon points="0.0,181.3 117.6,196.0 117.6,245.0 0.0,245.0" fill="#8c8c86" /><rect x="96.2" y="231.4" width="16.1" height="5.6" fill="#3f6a32" /><rect x="38.7" y="232.5" width="11.7" height="6.9" fill="#4f7a3c" /><rect x="36.1" y="219.5" width="14.0" height="6.8" fill="#5d8548" /><rect x="43.9" y="195.1" width="14.5" height="6.1" fill="#4f7a3c" /><rect x="43.9" y="238.2" width="14.9" height="8.3" fill="#3f6a32" /><rect x="76.9" y="200.7" width="13.7" height="6.5" fill="#6f8f58" /><rect x="107.5" y="222.2" width="10.9" height="7.1" fill="#5d8548" /><rect x="17.3" y="224.6" width="15.5" height="6.4" fill="#5d8548" /><rect x="19.4" y="238.9" width="11.9" height="7.1" fill="#6f8f58" /><rect x="83.7" y="216.2" width="11.0" height="5.7" fill="#6f8f58" /><rect x="89.1" y="206.0" width="16.1" height="6.6" fill="#3f6a32" /><rect x="99.1" y="195.0" width="19.2" height="6.7" fill="#3f6a32" /><rect x="79.7" y="205.7" width="19.6" height="5.9" fill="#6f8f58" /><rect x="18.3" y="196.4" width="12.0" height="6.1" fill="#6f8f58" /><rect x="33.6" y="227.2" width="14.5" height="5.1" fill="#3f6a32" /><rect x="8.3" y="220.1" width="9.7" height="3.9" fill="#6f8f58" /><rect x="46.3" y="210.1" width="17.2" height="7.9" fill="#6f8f58" /><rect x="88.4" y="198.6" width="7.4" height="8.4" fill="#6f8f58" /><rect x="50.7" y="203.1" width="17.6" height="7.0" fill="#3f6a32" /><rect x="12.7" y="219.0" width="18.5" height="8.1" fill="#3f6a32" /><rect x="70.5" y="206.3" width="15.2" height="6.9" fill="#3f6a32" /><rect x="55.3" y="227.9" width="9.9" height="7.2" fill="#4f7a3c" /><rect x="99.2" y="237.3" width="7.4" height="4.9" fill="#3f6a32" /><rect x="65.5" y="194.5" width="15.1" height="3.7" fill="#4f7a3c" /><rect x="34.1" y="236.4" width="18.3" height="4.3" fill="#6f8f58" /><rect x="27.9" y="212.4" width="13.5" height="4.0" fill="#4f7a3c" /><line x1="0.0" y1="191.1" x2="117.6" y2="220.5" stroke="#a8a8a2" stroke-width="3.0" /><line x1="0.0" y1="220.5" x2="98.0" y2="245.0" stroke="#b0b0aa" stroke-width="3.0" /><line x1="61.2" y1="196.0" x2="12.2" y2="245.0" stroke="#9a9a94" stroke-width="2.5" /><polygon points="0.0,230.3 24.5,234.0 24.5,245.0 0.0,245.0" fill="#6a6a68" /><polygon points="39.2,237.7 66.2,230.3 110.2,245.0 39.2,245.0" fill="#b8b4aa" /><rect x="38.0" y="57.6" width="25.7" height="39.2" fill="#bdb8ac" /><rect x="62.5" y="57.6" width="11.0" height="29.4" fill="#3a3835" /><rect x="77.2" y="39.2" width="18.4" height="15.9" fill="#2c3444" /><rect x="101.7" y="18.4" width="12.2" height="8.6" fill="#3a4660" /><rect x="0.0" y="88.2" width="31.9" height="73.5" fill="#c9c9c9" /><rect x="0.0" y="107.8" width="13.5" height="53.9" fill="#dcdcda" /><rect x="28.2" y="122.5" width="29.4" height="61.2" fill="#e6e4dc" /><rect x="36.8" y="112.7" width="12.2" height="12.2" fill="#efece6" /><polygon points="52.7,115.1 73.5,105.3 85.8,98.0 87.0,147.0 73.5,161.7 61.2,171.5 60.0,137.2" fill="#a8684a" /><polygon points="63.7,171.5 88.2,151.9 98.0,161.7 80.9,191.1 66.2,186.2" fill="#1e1e20" /><polygon points="87.0,127.4 100.4,122.5 100.4,147.0 87.0,151.9" fill="#17181c" /><polygon points="100.4,176.4 104.1,98.0 109.0,80.9 115.1,102.9 122.5,110.2 131.1,88.2 134.8,110.2 137.2,171.5 122.5,181.3" fill="#8d8c88" /><polygon points="115.1,102.9 122.5,110.2 127.4,98.0 127.4,83.3 115.1,83.3" fill="#6f7078" /><rect x="84.5" y="143.3" width="29.4" height="58.8" fill="#9a9a98" /><rect x="102.9" y="147.0" width="11.0" height="24.5" fill="#deded8" /><polygon points="73.5,73.5 80.9,66.2 88.2,73.5 90.7,127.4 73.5,122.5" fill="#c4bcac" /><rect x="139.6" y="117.6" width="31.9" height="61.2" fill="#d6cfbf" /><rect x="139.6" y="117.6" width="31.9" height="9.8" fill="#bdb6a6" /><rect x="160.5" y="66.2" width="23.3" height="34.3" fill="#c9c9c5" /><rect x="151.9" y="73.5" width="9.8" height="22.1" fill="#a24a34" /><rect x="144.5" y="98.0" width="20.8" height="17.2" fill="#45464a" /><rect x="142.1" y="46.5" width="7.3" height="39.2" fill="#5a5f68" /><rect x="181.3" y="102.9" width="24.5" height="49.0" fill="#55585f" /><rect x="191.1" y="112.7" width="12.2" height="34.3" fill="#d8d2c4" /><rect x="210.7" y="107.8" width="24.5" height="53.9" fill="#cfcabd" /><rect x="220.5" y="68.6" width="17.2" height="29.4" fill="#b4ac9c" /><rect x="220.5" y="147.0" width="19.6" height="29.4" fill="#e2ded6" /><rect x="234.0" y="161.7" width="11.0" height="24.5" fill="#9a9a98" /><rect x="107.8" y="176.4" width="51.4" height="31.9" fill="#d8d6ce" /><rect x="110.2" y="183.8" width="1.2" height="22.1" fill="#a5a39c" /><rect x="113.3" y="183.8" width="1.2" height="22.1" fill="#a5a39c" /><rect x="116.4" y="183.8" width="1.2" height="22.1" fill="#a5a39c" /><rect x="119.4" y="183.8" width="1.2" height="22.1" fill="#a5a39c" /><rect x="122.5" y="183.8" width="1.2" height="22.1" fill="#a5a39c" /><rect x="125.6" y="183.8" width="1.2" height="22.1" fill="#a5a39c" /><rect x="128.6" y="183.8" width="1.2" height="22.1" fill="#a5a39c" /><rect x="131.7" y="183.8" width="1.2" height="22.1" fill="#a5a39c" /><rect x="134.8" y="183.8" width="1.2" height="22.1" fill="#a5a39c" /><rect x="137.8" y="183.8" width="1.2" height="22.1" fill="#a5a39c" /><rect x="140.9" y="183.8" width="1.2" height="22.1" fill="#a5a39c" /><rect x="143.9" y="183.8" width="1.2" height="22.1" fill="#a5a39c" /><rect x="147.0" y="183.8" width="1.2" height="22.1" fill="#a5a39c" /><rect x="150.1" y="183.8" width="1.2" height="22.1" fill="#a5a39c" /><rect x="149.4" y="181.3" width="12.2" height="29.4" fill="#c2baa8" /><polygon points="161.7,183.8 171.5,178.8 183.8,183.8 183.8,245.0 161.7,245.0" fill="#0e1016" /><polygon points="183.8,151.9 193.6,145.8 213.2,145.8 223.0,154.3 221.7,245.0 182.5,245.0" fill="#2b2a2e" /><polygon points="186.2,151.9 196.0,147.0 213.2,147.0 220.5,154.3 210.7,160.5 193.6,160.5" fill="#8f97a5" /><rect x="194.8" y="180.1" width="24.5" height="18.4" fill="#3a6db5" /><rect x="210.7" y="159.2" width="9.8" height="9.8" fill="#2f5fa8" /><rect x="196.0" y="161.7" width="24.5" height="14.7" fill="#1a1c22" /><rect x="186.2" y="200.9" width="34.3" height="44.1" fill="#3a2e2a" /><polygon points="221.7,196.0 245.0,186.2 245.0,245.0 220.5,245.0" fill="#3a3a3e" /><polygon points="235.2,196.0 245.0,193.6 245.0,237.7 235.2,240.1" fill="#9aa2b2" /><polygon points="117.6,213.2 129.8,207.0 149.4,207.0 160.5,213.2 160.5,227.9 117.6,227.9" fill="#c2cce0" /><rect x="117.6" y="226.6" width="42.9" height="18.4" fill="#3c3e44" /><rect x="127.4" y="229.1" width="31.9" height="15.9" fill="#6d7078" /><rect x="133.5" y="211.9" width="11.0" height="7.3" fill="#a8a8a6" /><polygon points="200.9,234.0 213.2,230.3 235.2,230.3 245.0,235.2 245.0,245.0 200.9,245.0" fill="#b4c4dc" /><rect x="219.3" y="236.4" width="9.8" height="7.3" fill="#a0a09e" /></g></svg>
<span class="t" style="left:455.6px;top:435.1px;font-size:23px;line-height:23px;color:#3f79bb;letter-spacing:0.010px;">Add image</span>
<span class="t" style="left:436.8px;top:515.1px;font-size:23px;line-height:23px;color:#222;letter-spacing:0.163px;-webkit-text-stroke:0.6px #222;">City</span>
<div class="sel" style="left:437px;top:544px;width:1519px;height:57px;"></div>
<span class="t" style="left:452.0px;top:562.7px;font-size:21.5px;line-height:21.5px;color:#222;letter-spacing:-0.154px;">Anaheim (Sumatera Selatan)</span>
<span class="t" style="left:436.2px;top:636.1px;font-size:23px;line-height:23px;color:#222;letter-spacing:0.425px;-webkit-text-stroke:0.6px #222;">Property location</span>
<span class="t" style="left:621.1px;top:636.1px;font-size:23px;line-height:23px;color:#e02222;letter-spacing:0.000px;">*</span>
<div class="inp" style="left:437px;top:665px;width:1519px;height:57px;"></div>
<span class="t" style="left:457.7px;top:683.1px;font-size:23px;line-height:23px;color:#222;letter-spacing:0.358px;">329 Oliver Walk Apt. 988South Nathanielfurt, MA 09144</span>
<span class="t" style="left:436.2px;top:756.4px;font-size:23px;line-height:23px;color:#222;letter-spacing:0.597px;-webkit-text-stroke:0.6px #222;">Latitude</span>
<div class="inp" style="left:437px;top:785px;width:740px;height:57px;"></div>
<span class="t" style="left:458.3px;top:803.1px;font-size:23px;line-height:23px;color:#222;letter-spacing:0.601px;">44.771005</span>
<div class="help" style="left:437px;top:850px;width:740px;height:50px;"></div>
<span class="t" style="left:445.9px;top:866.4px;font-size:21.5px;line-height:21.5px;color:#3f79bb;letter-spacing:-0.304px;">Go here to get Latitude from address.</span>
<span class="t" style="left:1215.2px;top:756.4px;font-size:23px;line-height:23px;color:#222;letter-spacing:0.536px;-webkit-text-stroke:0.6px #222;">Longitude</span>
<div class="inp" style="left:1216px;top:785px;width:740px;height:57px;"></div>
<span class="t" style="left:1236.3px;top:803.1px;font-size:23px;line-height:23px;color:#222;letter-spacing:0.535px;">-72.048664</span>
<div class="help" style="left:1216px;top:850px;width:740px;height:50px;"></div>
<span class="t" style="left:1224.9px;top:866.4px;font-size:21.5px;line-height:21.5px;color:#3f79bb;letter-spacing:-0.335px;">Go here to get Longitude from address.</span>
<span class="t" style="left:436.2px;top:951.1px;font-size:23px;line-height:23px;color:#222;letter-spacing:0.257px;-webkit-text-stroke:0.6px #222;">Number bedrooms</span>
<div class="inp" style="left:437px;top:980px;width:350px;height:56px;"></div>
<span class="t" style="left:457.7px;top:997.4px;font-size:23px;line-height:23px;color:#222;letter-spacing:0.000px;">2</span>
<span class="t" style="left:825.6px;top:951.1px;font-size:23px;line-height:23px;color:#222;letter-spacing:0.318px;-webkit-text-stroke:0.6px #222;">Number bathrooms</span>
<div class="inp" style="left:827px;top:980px;width:350px;height:56px;"></div>
<span class="t" style="left:847.2px;top:997.4px;font-size:23px;line-height:23px;color:#222;letter-spacing:0.000px;">3</span>
<span class="t" style="left:1215.2px;top:951.1px;font-size:23px;line-height:23px;color:#222;letter-spacing:0.475px;-webkit-text-stroke:0.6px #222;">Number floors</span>
<div class="inp" style="left:1216px;top:980px;width:350px;height:56px;"></div>
<span class="t" style="left:1236.3px;top:997.4px;font-size:23px;line-height:23px;color:#222;letter-spacing:0.000px;">1</span>
<span class="t" style="left:1605.4px;top:951.1px;font-size:23px;line-height:23px;color:#222;letter-spacing:0.211px;-webkit-text-stroke:0.6px #222;">Square (m²)</span>
<div class="inp" style="left:1606px;top:980px;width:350px;height:56px;"></div>
<span class="t" style="left:1626.5px;top:997.4px;font-size:23px;line-height:23px;color:#222;letter-spacing:0.000px;">469</span>
<span class="t" style="left:436.2px;top:1071.0px;font-size:23px;line-height:23px;color:#222;letter-spacing:0.659px;-webkit-text-stroke:0.6px #222;">Price</span>
<div class="inp" style="left:437px;top:1099px;width:480px;height:57px;"></div>
<span class="t" style="left:457.1px;top:1117.4px;font-size:23px;line-height:23px;color:#222;letter-spacing:0.391px;">184,236.00</span>
<span class="t" style="left:956.6px;top:1071.0px;font-size:23px;line-height:23px;color:#222;letter-spacing:-0.174px;-webkit-text-stroke:0.6px #222;">Currency</span>
<div class="sel" style="left:957px;top:1099px;width:480px;height:57px;"></div>
<span class="t" style="left:970.0px;top:1118.2px;font-size:21.5px;line-height:21.5px;color:#222;letter-spacing:-1.242px;">IDR</span>
<span class="t" style="left:1475.1px;top:1071.0px;font-size:23px;line-height:23px;color:#222;letter-spacing:0.490px;-webkit-text-stroke:0.6px #222;">Period</span>
<span class="t" style="left:1549.5px;top:1071.0px;font-size:23px;line-height:23px;color:#e02222;letter-spacing:0.000px;">*</span>
<div class="sel" style="left:1476px;top:1099px;width:480px;height:57px;"></div>
<span class="t" style="left:1489.3px;top:1118.2px;font-size:21.5px;line-height:21.5px;color:#222;letter-spacing:0.960px;">Month</span>
<div class="a" style="left:437px;top:1210px;width:75px;height:31px;background:#eeeff0;border:3px solid #e4e6e6;border-radius:16px"></div>
<svg class="a" style="left:476px;top:1207px" width="40" height="40" viewBox="0 0 40 40"><circle cx="19.600" cy="19.400" r="16.400" fill="#e4e6e6"/><circle cx="19.600" cy="19.400" r="13.600" fill="#62bed0"/></svg>
<span class="t" style="left:527.1px;top:1218.7px;font-size:23.1px;line-height:23.1px;color:#222;letter-spacing:-0.120px;-webkit-text-stroke:0.55px #222;">Never expired?</span>
<span class="t" style="left:444.9px;top:1338.7px;font-size:22.3px;line-height:22.3px;color:#36659b;letter-spacing:-0.157px;font-weight:bold;">Distance key between facilities</span>
<div class="a" style="left:421px;top:1379px;width:1552px;height:1px;background:#eff1f5"></div>
<div class="sel" style="left:446px;top:1405px;width:345px;height:57px;"></div>
<span class="t" style="left:458.2px;top:1421.2px;font-size:24.8px;line-height:24.8px;color:#111;letter-spacing:0.296px;">Mall</span>
<div class="inp" style="left:831px;top:1405px;width:346px;height:57px;"></div>
<span class="t" style="left:850.6px;top:1421.2px;font-size:24.8px;line-height:24.8px;color:#6f7780;letter-spacing:-0.411px;">Distance (Km)</span>
<div class="a" style="left:1216px;top:1405px;width:58px;height:58px;background:#f7c245;border-radius:4px"></div>
<svg class="a" style="left:1237.4px;top:1420.4px" width="15.8" height="23.3" viewBox="0 0 352 512" preserveAspectRatio="none"><path fill="#0a0a0c" d="M242.72 256l100.07-100.07c12.28-12.28 12.28-32.19 0-44.48l-22.24-22.24c-12.28-12.28-32.19-12.28-44.48 0L176 189.28 75.93 89.21c-12.28-12.28-32.19-12.28-44.48 0L9.21 111.45c-12.28 12.28-12.28 32.19 0 44.48L109.28 256 9.21 356.07c-12.28 12.28-12.28 32.19 0 44.48l22.24 22.24c12.28 12.28 32.2 12.28 44.48 0L176 322.72l100.07 100.07c12.28 12.28 32.2 12.28 44.48 0l22.24-22.24c12.28-12.28 12.28-32.19 0-44.48L242.72 256z"/></svg>
<div class="sel" style="left:446px;top:1515px;width:345px;height:57px;"></div>
<span class="t" style="left:458.2px;top:1531.2px;font-size:24.8px;line-height:24.8px;color:#111;letter-spacing:-1.364px;">Bandara</span>
<div class="inp" style="left:831px;top:1515px;width:346px;height:57px;"></div>
<span class="t" style="left:850.6px;top:1531.2px;font-size:24.8px;line-height:24.8px;color:#6f7780;letter-spacing:-0.411px;">Distance (Km)</span>
<div class="a" style="left:1216px;top:1515px;width:58px;height:58px;background:#f7c245;border-radius:4px"></div>
<svg class="a" style="left:1237.4px;top:1530.4px" width="15.8" height="23.3" viewBox="0 0 352 512" preserveAspectRatio="none"><path fill="#0a0a0c" d="M242.72 256l100.07-100.07c12.28-12.28 12.28-32.19 0-44.48l-22.24-22.24c-12.28-12.28-32.19-12.28-44.48 0L176 189.28 75.93 89.21c-12.28-12.28-32.19-12.28-44.48 0L9.21 111.45c-12.28 12.28-12.28 32.19 0 44.48L109.28 256 9.21 356.07c-12.28 12.28-12.28 32.19 0 44.48l22.24 22.24c12.28 12.28 32.2 12.28 44.48 0L176 322.72l100.07 100.07c12.28 12.28 32.2 12.28 44.48 0l22.24-22.24c12.28-12.28 12.28-32.19 0-44.48L242.72 256z"/></svg>
<svg class="a" style="left:1924px;top:563.8px" width="12" height="18" viewBox="0 0 12 18"><path fill="#7a88a2" d="M6 1.5L11 6.800H1z M6 16.500L11 11.200H1z"/></svg>
<svg class="a" style="left:1404.7px;top:1119.3px" width="12" height="18" viewBox="0 0 12 18"><path fill="#7a88a2" d="M6 1.5L11 6.800H1z M6 16.500L11 11.200H1z"/></svg>
<svg class="a" style="left:1924px;top:1119.3px" width="12" height="18" viewBox="0 0 12 18"><path fill="#7a88a2" d="M6 1.5L11 6.800H1z M6 16.500L11 11.200H1z"/></svg>
<svg class="a" style="left:759.6px;top:1424.7px" width="12" height="18" viewBox="0 0 12 18"><path fill="#7a88a2" d="M6 1.5L11 6.800H1z M6 16.500L11 11.200H1z"/></svg>
<svg class="a" style="left:759.6px;top:1534.7px" width="12" height="18" viewBox="0 0 12 18"><path fill="#7a88a2" d="M6 1.5L11 6.800H1z M6 16.500L11 11.200H1z"/></svg>
<svg class="a" style="left:2449px;top:1474px" width="56" height="56" viewBox="0 0 56 56"><circle cx="27.8" cy="28.100" r="23.400" fill="none" stroke="#9ba4b8" stroke-width="3"/><path d="M27.800 17.500V39.200M19.200 26.200L27.800 17.500L36.400 26.200" fill="none" stroke="#9ba4b8" stroke-width="3" stroke-linecap="round" stroke-linejoin="round"/></svg>
<div class="a" style="left:388px;top:0px;width:2148px;height:99px;background:#fff;box-shadow:0 1px 2px rgba(0,0,0,.3)"></div>
<svg class="a" style="left:420.9px;top:28.8px" width="25.8" height="22.9" viewBox="0 0 576 512" preserveAspectRatio="none"><path fill="#333" d="M280.37 148.26L96 300.11V464a16 16 0 0 0 16 16l112.06-.29a16 16 0 0 0 15.92-16V368a16 16 0 0 1 16-16h64a16 16 0 0 1 16 16v95.64a16 16 0 0 0 16 16.05L464 480a16 16 0 0 0 16-16V300L295.67 148.26a12.19 12.19 0 0 0-15.3 0zM571.6 251.47L488 182.56V44.05a12 12 0 0 0-12-12h-56a12 12 0 0 0-12 12v72.61L318.47 43a48 48 0 0 0-61 0L4.34 251.47a12 12 0 0 0-1.6 16.9l25.5 31A12 12 0 0 0 45.15 301l235.22-193.74a12.19 12.19 0 0 1 15.3 0L530.9 301a12 12 0 0 0 16.9-1.6l25.5-31a12 12 0 0 0-1.7-16.93z"/></svg>
<span class="t" style="left:452.6px;top:31.6px;font-size:21.5px;line-height:21.5px;color:#333;letter-spacing:-0.078px;">Dashboard</span>
<span class="t" style="left:570.7px;top:31.6px;font-size:21.5px;line-height:21.5px;color:#6c757d;letter-spacing:0.000px;">/</span>
<span class="t" style="left:591.4px;top:31.6px;font-size:21.5px;line-height:21.5px;color:#6c7783;letter-spacing:-0.328px;">Real Estate</span>
<span class="t" style="left:713.0px;top:31.6px;font-size:21.5px;line-height:21.5px;color:#6c757d;letter-spacing:0.000px;">/</span>
<span class="t" style="left:733.6px;top:31.6px;font-size:21.5px;line-height:21.5px;color:#333;letter-spacing:0.115px;">Properties</span>
<span class="t" style="left:846.8px;top:31.6px;font-size:21.5px;line-height:21.5px;color:#6c757d;letter-spacing:0.000px;">/</span>
<span class="t" style="left:868.1px;top:31.6px;font-size:21.5px;line-height:21.5px;color:#6c7783;letter-spacing:-0.236px;">Edit property &quot;7431 Candace Way&quot;</span>
<div class="a" style="left:2176px;top:17px;width:117px;height:58px;background:#5dc6ec;border-radius:5px"></div>
<svg class="a" style="left:2196.3px;top:32.7px" width="20.8" height="23.8" viewBox="0 0 448 512" preserveAspectRatio="none"><path fill="#fff" d="M433.941 129.941l-83.882-83.882A48 48 0 0 0 316.118 32H48C21.49 32 0 53.49 0 80v352c0 26.51 21.49 48 48 48h352c26.51 0 48-21.49 48-48V163.882a48 48 0 0 0-14.059-33.941zM224 416c-35.346 0-64-28.654-64-64 0-35.346 28.654-64 64-64s64 28.654 64 64c0 35.346-28.654 64-64 64zm96-304.52V212c0 6.627-5.373 12-12 12H76c-6.627 0-12-5.373-12-12V108c0-6.627 5.373-12 12-12h228.52c3.183 0 6.235 1.264 8.485 3.515l3.48 3.48A11.996 11.996 0 0 1 320 111.48z"/></svg>
<span class="t" style="left:2222.2px;top:34.2px;font-size:23.1px;line-height:23.1px;color:#fff;letter-spacing:-0.635px;-webkit-text-stroke:0.3px #fff;">Save</span>
<div class="a" style="left:2318px;top:17px;width:185px;height:58px;background:#3f8558;border-radius:5px"></div>
<svg class="a" style="left:2338.5px;top:32.6px" width="23.6" height="23.6" viewBox="0 0 512 512" preserveAspectRatio="none"><path fill="#fff" d="M504 256c0 136.967-111.033 248-248 248S8 392.967 8 256 119.033 8 256 8s248 111.033 248 248zM227.314 387.314l184-184c6.248-6.248 6.248-16.379 0-22.627l-22.627-22.627c-6.248-6.249-16.379-6.249-22.628 0L216 308.118l-70.059-70.059c-6.248-6.248-16.379-6.248-22.628 0l-22.627 22.627c-6.248 6.248-6.248 16.379 0 22.627l104 104c6.249 6.249 16.379 6.249 22.628.001z"/></svg>
<span class="t" style="left:2367.5px;top:34.2px;font-size:23.1px;line-height:23.1px;color:#fff;letter-spacing:-0.614px;-webkit-text-stroke:0.3px #fff;">Save &amp; Edit</span>
<div class="a" style="left:2536px;top:0px;width:24px;height:1600px;background:#f1f1f1"></div>
<div class="a" style="left:2538px;top:601px;width:21px;height:526px;background:#a8a8a8"></div>
<svg class="a" style="left:2536px;top:0" width="24" height="1600" viewBox="0 0 24 1600"><path fill="#505050" d="M12.4 10L18 16H6.800z M12.4 1591.200L18 1585.200H6.800z"/></svg>
<div class="a" style="left:2559px;top:671px;width:1px;height:24px;background:#1b1b2b"></div>
</body>
</html>
